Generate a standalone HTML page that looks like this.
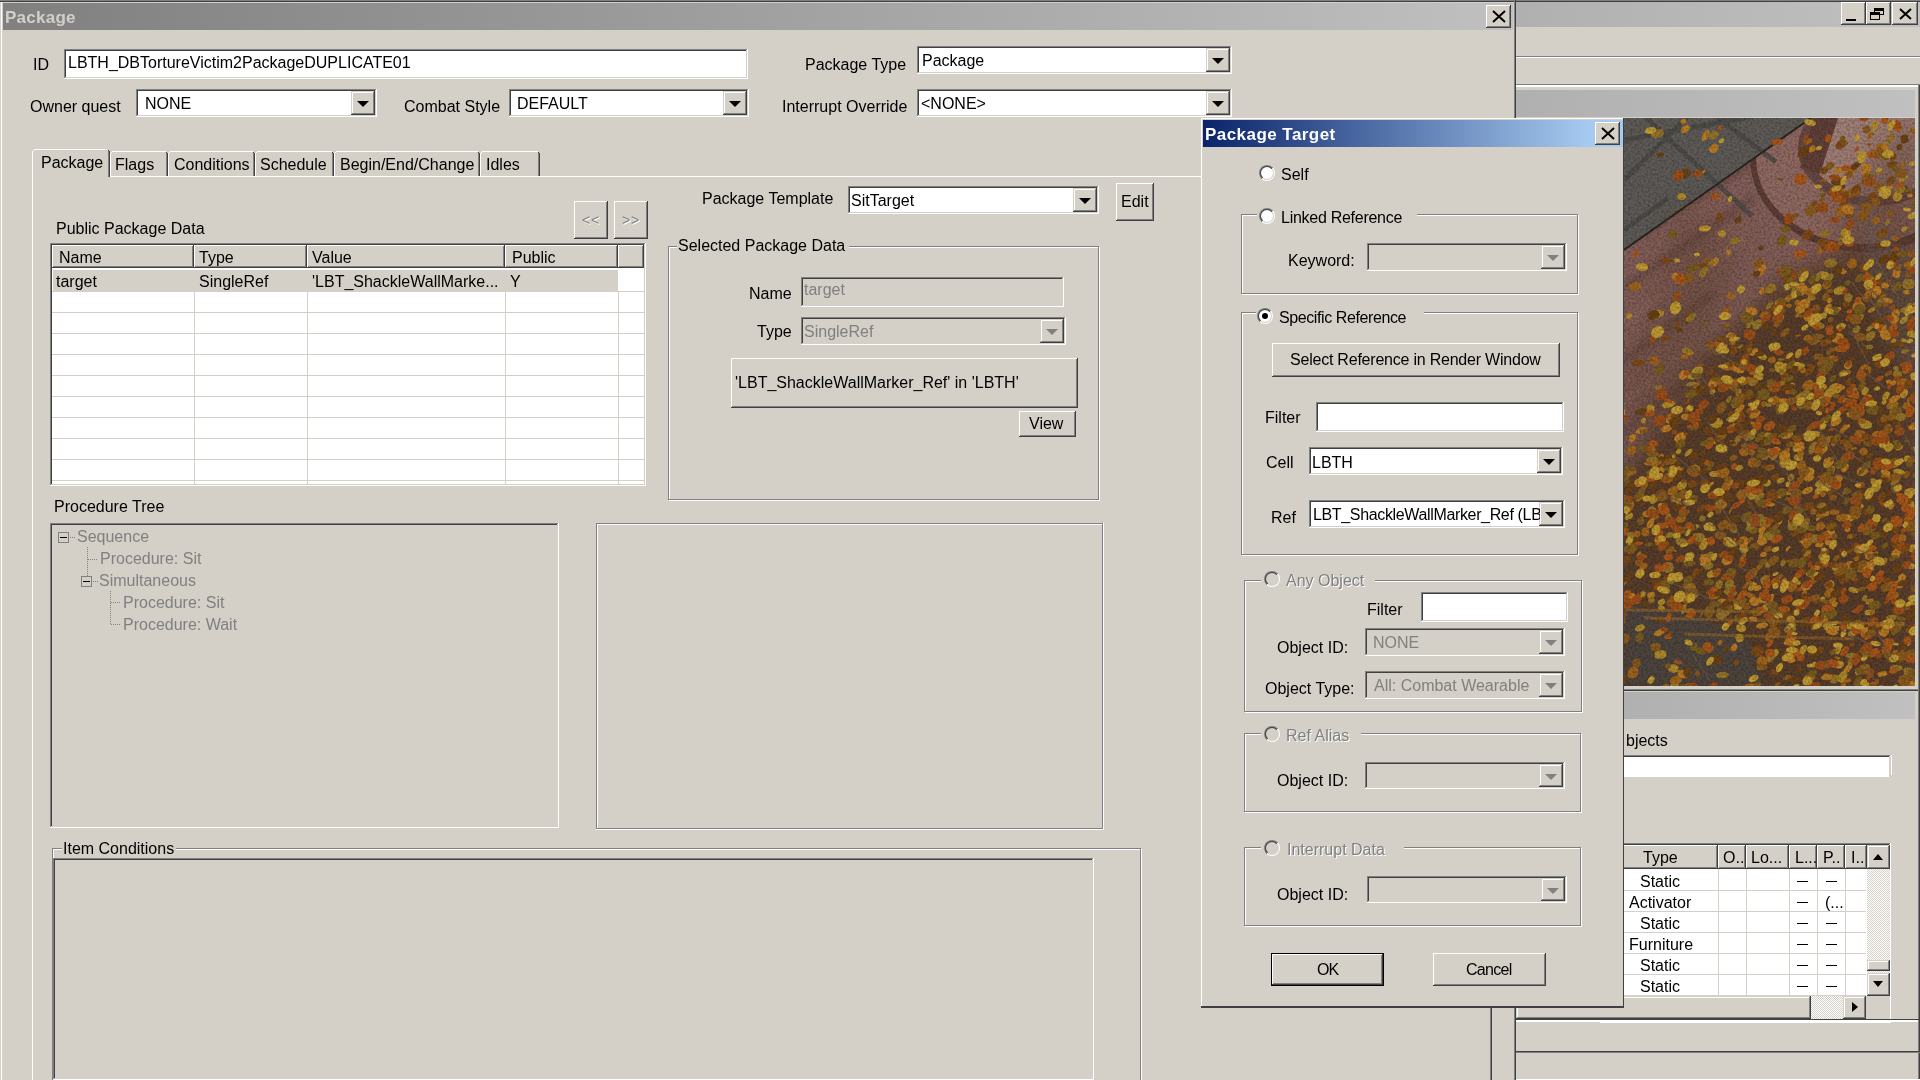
<!DOCTYPE html>
<html><head><meta charset="utf-8"><style>
html,body{margin:0;padding:0;width:1920px;height:1080px;overflow:hidden;background:#d4d0c8}
body>div,body>span,body>svg,div>span{position:absolute}
div{box-sizing:border-box}
.t{font-family:"Liberation Sans",sans-serif;white-space:pre;color:#000;will-change:transform}
</style></head><body>
<div style="left:0px;top:0px;width:1920px;height:1080px;background:#d4d0c8;"></div>
<div style="left:0px;top:0px;width:1920px;height:1px;background:#808080;"></div>
<div style="left:0px;top:1px;width:1920px;height:1px;background:#404040;"></div>
<div style="left:1px;top:2px;width:1px;height:1078px;background:#ffffff;"></div>
<div style="left:3px;top:3px;width:1510px;height:27px;background:linear-gradient(90deg,#808080,#c0c0c0);"></div>
<span class="t" style="left:5px;top:9px;font-size:17px;line-height:17px;color:#d4d0c8;font-weight:bold;letter-spacing:0.25px;">Package</span>
<div style="left:1486px;top:5px;width:25px;height:23px;background:#d4d0c8;"></div>
<div style="left:1486px;top:5px;width:24px;height:1px;background:#ffffff;"></div>
<div style="left:1486px;top:5px;width:1px;height:22px;background:#ffffff;"></div>
<div style="left:1486px;top:27px;width:25px;height:1px;background:#404040;"></div>
<div style="left:1510px;top:5px;width:1px;height:23px;background:#404040;"></div>
<div style="left:1487px;top:6px;width:22px;height:1px;background:#d4d0c8;"></div>
<div style="left:1487px;top:6px;width:1px;height:20px;background:#d4d0c8;"></div>
<div style="left:1487px;top:26px;width:23px;height:1px;background:#808080;"></div>
<div style="left:1509px;top:6px;width:1px;height:21px;background:#808080;"></div>
<svg style="left:1492px;top:10px" width="14" height="13"><path d="M1 1L13 12M13 1L1 12" stroke="#000" stroke-width="2" fill="none"/></svg>
<div style="left:1514px;top:0px;width:1px;height:1080px;background:#808080;"></div>
<div style="left:1515px;top:0px;width:1px;height:1080px;background:#404040;"></div>
<div style="left:1516px;top:2px;width:404px;height:25px;background:linear-gradient(90deg,#b0b0b0,#c0c0c0);"></div>
<div style="left:1841px;top:2px;width:25px;height:23px;background:#d4d0c8;"></div>
<div style="left:1841px;top:2px;width:24px;height:1px;background:#ffffff;"></div>
<div style="left:1841px;top:2px;width:1px;height:22px;background:#ffffff;"></div>
<div style="left:1841px;top:24px;width:25px;height:1px;background:#404040;"></div>
<div style="left:1865px;top:2px;width:1px;height:23px;background:#404040;"></div>
<div style="left:1842px;top:3px;width:22px;height:1px;background:#d4d0c8;"></div>
<div style="left:1842px;top:3px;width:1px;height:20px;background:#d4d0c8;"></div>
<div style="left:1842px;top:23px;width:23px;height:1px;background:#808080;"></div>
<div style="left:1864px;top:3px;width:1px;height:21px;background:#808080;"></div>
<div style="left:1866px;top:2px;width:25px;height:23px;background:#d4d0c8;"></div>
<div style="left:1866px;top:2px;width:24px;height:1px;background:#ffffff;"></div>
<div style="left:1866px;top:2px;width:1px;height:22px;background:#ffffff;"></div>
<div style="left:1866px;top:24px;width:25px;height:1px;background:#404040;"></div>
<div style="left:1890px;top:2px;width:1px;height:23px;background:#404040;"></div>
<div style="left:1867px;top:3px;width:22px;height:1px;background:#d4d0c8;"></div>
<div style="left:1867px;top:3px;width:1px;height:20px;background:#d4d0c8;"></div>
<div style="left:1867px;top:23px;width:23px;height:1px;background:#808080;"></div>
<div style="left:1889px;top:3px;width:1px;height:21px;background:#808080;"></div>
<div style="left:1892px;top:2px;width:26px;height:23px;background:#d4d0c8;"></div>
<div style="left:1892px;top:2px;width:25px;height:1px;background:#ffffff;"></div>
<div style="left:1892px;top:2px;width:1px;height:22px;background:#ffffff;"></div>
<div style="left:1892px;top:24px;width:26px;height:1px;background:#404040;"></div>
<div style="left:1917px;top:2px;width:1px;height:23px;background:#404040;"></div>
<div style="left:1893px;top:3px;width:23px;height:1px;background:#d4d0c8;"></div>
<div style="left:1893px;top:3px;width:1px;height:20px;background:#d4d0c8;"></div>
<div style="left:1893px;top:23px;width:24px;height:1px;background:#808080;"></div>
<div style="left:1916px;top:3px;width:1px;height:21px;background:#808080;"></div>
<div style="left:1846px;top:19px;width:10px;height:2px;background:#000;"></div>
<div style="left:1874px;top:8px;width:10px;height:7px;border:1px solid #000;border-top-width:3px;box-sizing:border-box"></div>
<div style="left:1870px;top:12px;width:10px;height:8px;border:1px solid #000;border-top-width:3px;box-sizing:border-box;background:#d4d0c8"></div>
<svg style="left:1899px;top:8px" width="13" height="12"><path d="M1 1L12 11M12 1L1 11" stroke="#000" stroke-width="2" fill="none"/></svg>
<div style="left:1516px;top:56px;width:404px;height:1px;background:#808080;"></div>
<div style="left:1516px;top:57px;width:404px;height:1px;background:#ffffff;"></div>
<div style="left:1516px;top:84px;width:404px;height:1px;background:#808080;"></div>
<div style="left:1516px;top:85px;width:404px;height:1px;background:#ffffff;"></div>
<div style="left:1516px;top:86px;width:404px;height:1px;background:#ffffff;"></div>
<div style="left:1918px;top:85px;width:1px;height:995px;background:#808080;"></div>
<div style="left:1919px;top:85px;width:1px;height:995px;background:#404040;"></div>
<div style="left:1516px;top:90px;width:399px;height:27px;background:linear-gradient(90deg,#b0b0b0,#c0c0c0);"></div>
<div style="left:1624px;top:118px;width:291px;height:568px;background:#6a4a38;overflow:hidden"><svg width="291" height="568" viewBox="0 0 291 568" style="position:absolute;left:0;top:0"><defs><filter id="bl" x="-20%" y="-20%" width="140%" height="140%"><feGaussianBlur stdDeviation="14"/></filter><filter id="bl2"><feGaussianBlur stdDeviation="3"/></filter></defs><rect width="291" height="568" fill="#85605a"/><g filter="url(#bl2)" opacity="0.55"><path d="M-20 330L140 200M-20 380L150 250M0 170L130 80M-10 250L90 175M10 120L150 30" stroke="#5e423c" stroke-width="8"/><path d="M-20 300L140 170M0 205L120 120" stroke="#9a766e" stroke-width="5"/></g><ellipse cx="240" cy="40" rx="114" ry="94" fill="#5e3e38"/><ellipse cx="238" cy="40" rx="106" ry="86" fill="#906a62"/><ellipse cx="250" cy="30" rx="76" ry="58" fill="#6a4a44"/><ellipse cx="252" cy="28" rx="68" ry="51" fill="#a28078"/><polygon points="0,0 187,0 0,132" fill="#5f5c58"/><path d="M0 22L130 -2M0 62L64 -2M22 0L128 98M94 0L152 44M0 112L44 80" stroke="#4c4a46" stroke-width="5" opacity="0.8"/><path d="M0 132L187 0" stroke="#2a2622" stroke-width="2"/><polygon points="190,0 214,0 196,56 176,50" fill="#62403a"/><g filter="url(#bl)"><polygon points="300,140 300,600 -20,600 -20,380 40,300 100,220 160,160 220,140" fill="#583c2a"/><polygon points="300,-10 300,140 200,150 230,60" fill="#5a3c2a" opacity="0.45"/><polygon points="60,90 120,130 60,300 -10,320 0,260" fill="#5a3c2a" opacity="0.35"/></g><polygon points="0,485 70,495 125,522 140,568 0,568" fill="#4d4642" opacity="0.85" filter="url(#bl2)"/><polygon points="230,60 291,150 291,270 250,210" fill="#6d6560" opacity="0.3" filter="url(#bl2)"/><path fill="#b08a2a" d="M176 422A6 4 13 1 0 188 425A6 4 13 1 0 176 422M239 277A4 3 -65 1 0 243 269A4 3 -65 1 0 239 277M276 205A5 3 -36 1 0 284 199A5 3 -36 1 0 276 205M83 458A5 3 -26 1 0 92 454A5 3 -26 1 0 83 458M147 539A5 3 -46 1 0 154 532A5 3 -46 1 0 147 539M53 336A3 2 -54 1 0 56 331A3 2 -54 1 0 53 336M270 82A5 4 -48 1 0 277 75A5 4 -48 1 0 270 82M225 471A5 2 14 1 0 234 473A5 2 14 1 0 225 471M112 490A4 3 -64 1 0 115 483A4 3 -64 1 0 112 490M200 510A5 3 -21 1 0 208 506A5 3 -21 1 0 200 510M148 342A5 3 -61 1 0 153 333A5 3 -61 1 0 148 342M162 183A3 2 -41 1 0 166 179A3 2 -41 1 0 162 183M280 340A3 3 14 1 0 287 342A3 3 14 1 0 280 340M157 257A6 3 -68 1 0 162 245A6 3 -68 1 0 157 257M135 482A5 3 -16 1 0 144 480A5 3 -16 1 0 135 482M112 521A4 3 -14 1 0 119 519A4 3 -14 1 0 112 521M206 272A6 4 -15 1 0 217 269A6 4 -15 1 0 206 272M257 328A5 2 10 1 0 267 330A5 2 10 1 0 257 328M76 445A3 2 14 1 0 82 447A3 2 14 1 0 76 445M51 384A3 2 -26 1 0 57 381A3 2 -26 1 0 51 384M222 510A5 3 -19 1 0 232 506A5 3 -19 1 0 222 510M3 200A3 2 -47 1 0 7 196A3 2 -47 1 0 3 200M201 419A6 3 -39 1 0 210 412A6 3 -39 1 0 201 419M269 288A3 2 -32 1 0 274 285A3 2 -32 1 0 269 288M191 367A6 4 -13 1 0 204 365A6 4 -13 1 0 191 367M137 323A6 4 -32 1 0 148 316A6 4 -32 1 0 137 323M31 537A6 3 -7 1 0 42 536A6 3 -7 1 0 31 537M34 486A4 3 -29 1 0 41 482A4 3 -29 1 0 34 486M46 574A6 4 -40 1 0 55 567A6 4 -40 1 0 46 574M60 445A5 3 -13 1 0 69 443A5 3 -13 1 0 60 445M285 485A6 4 -14 1 0 297 482A6 4 -14 1 0 285 485M258 286A3 2 -39 1 0 263 282A3 2 -39 1 0 258 286M59 569A5 3 -5 1 0 69 568A5 3 -5 1 0 59 569M130 257A5 3 12 1 0 139 259A5 3 12 1 0 130 257M238 450A6 3 1 1 0 250 451A6 3 1 1 0 238 450M182 455A5 3 14 1 0 192 458A5 3 14 1 0 182 455M18 305A3 2 -66 1 0 21 300A3 2 -66 1 0 18 305M196 243A3 2 -16 1 0 201 242A3 2 -16 1 0 196 243M153 364A4 2 -24 1 0 160 361A4 2 -24 1 0 153 364M138 365A4 3 -4 1 0 147 365A4 3 -4 1 0 138 365M290 332A4 3 -8 1 0 297 331A4 3 -8 1 0 290 332M31 197A5 2 -16 1 0 40 195A5 2 -16 1 0 31 197M280 375A6 4 -9 1 0 292 373A6 4 -9 1 0 280 375M172 250A4 3 -3 1 0 180 249A4 3 -3 1 0 172 250M247 363A3 2 17 1 0 252 364A3 2 17 1 0 247 363M194 156A6 4 16 1 0 206 159A6 4 16 1 0 194 156M54 371A5 4 -42 1 0 62 364A5 4 -42 1 0 54 371M87 439A3 2 9 1 0 92 440A3 2 9 1 0 87 439M275 63A5 2 -30 1 0 284 58A5 2 -30 1 0 275 63M284 218A4 3 -39 1 0 290 213A4 3 -39 1 0 284 218M241 347A3 2 -14 1 0 247 345A3 2 -14 1 0 241 347M271 468A5 3 -38 1 0 280 462A5 3 -38 1 0 271 468M102 219A4 2 -30 1 0 109 215A4 2 -30 1 0 102 219M269 353A6 3 11 1 0 281 355A6 3 11 1 0 269 353M133 237A5 3 19 1 0 143 240A5 3 19 1 0 133 237M278 113A3 2 -35 1 0 283 109A3 2 -35 1 0 278 113M95 118A4 3 -33 1 0 101 113A4 3 -33 1 0 95 118M260 299A3 2 3 1 0 266 300A3 2 3 1 0 260 299M267 225A3 2 -41 1 0 272 221A3 2 -41 1 0 267 225M179 352A6 3 12 1 0 190 354A6 3 12 1 0 179 352M195 482A3 2 -24 1 0 201 480A3 2 -24 1 0 195 482M126 472A5 2 -52 1 0 131 465A5 2 -52 1 0 126 472M249 12A5 3 -63 1 0 253 3A5 3 -63 1 0 249 12M64 258A4 2 5 1 0 71 259A4 2 5 1 0 64 258M201 468A5 3 -18 1 0 210 465A5 3 -18 1 0 201 468M66 356A4 2 -1 1 0 75 356A4 2 -1 1 0 66 356M152 188A4 3 -32 1 0 158 184A4 3 -32 1 0 152 188M208 451A6 4 -13 1 0 220 448A6 4 -13 1 0 208 451M34 489A3 2 13 1 0 41 491A3 2 13 1 0 34 489M117 433A4 3 -29 1 0 123 429A4 3 -29 1 0 117 433M259 282A5 3 -56 1 0 265 274A5 3 -56 1 0 259 282M171 465A3 2 -0 1 0 177 465A3 2 -0 1 0 171 465M279 526A4 2 -10 1 0 286 525A4 2 -10 1 0 279 526M200 349A6 4 -44 1 0 209 340A6 4 -44 1 0 200 349M166 268A3 2 -5 1 0 171 267A3 2 -5 1 0 166 268M277 222A3 2 13 1 0 283 223A3 2 13 1 0 277 222M156 346A6 4 -14 1 0 167 343A6 4 -14 1 0 156 346M228 389A6 3 -6 1 0 240 388A6 3 -6 1 0 228 389M283 388A4 3 -18 1 0 290 386A4 3 -18 1 0 283 388M212 210A5 3 -17 1 0 222 207A5 3 -17 1 0 212 210M210 174A6 3 -17 1 0 221 171A6 3 -17 1 0 210 174M217 116A5 3 -17 1 0 226 113A5 3 -17 1 0 217 116M77 432A6 4 -68 1 0 82 420A6 4 -68 1 0 77 432M256 325A5 3 -4 1 0 265 325A5 3 -4 1 0 256 325M2 402A3 2 -59 1 0 5 396A3 2 -59 1 0 2 402M168 247A6 3 4 1 0 181 248A6 3 4 1 0 168 247M199 200A3 2 -66 1 0 201 195A3 2 -66 1 0 199 200M256 507A5 3 -14 1 0 267 504A5 3 -14 1 0 256 507M221 250A4 3 -38 1 0 227 245A4 3 -38 1 0 221 250M153 406A3 2 -41 1 0 158 402A3 2 -41 1 0 153 406M191 285A6 3 -53 1 0 198 276A6 3 -53 1 0 191 285M38 288A6 3 -14 1 0 51 285A6 3 -14 1 0 38 288M11 512A5 3 -23 1 0 21 508A5 3 -23 1 0 11 512M175 538A6 3 -57 1 0 182 527A6 3 -57 1 0 175 538M248 373A5 4 -42 1 0 256 366A5 4 -42 1 0 248 373M174 282A6 4 -26 1 0 184 277A6 4 -26 1 0 174 282M188 549A3 2 -55 1 0 192 544A3 2 -55 1 0 188 549M23 291A4 3 -1 1 0 30 291A4 3 -1 1 0 23 291M28 201A6 4 -43 1 0 37 193A6 4 -43 1 0 28 201M125 381A6 4 -43 1 0 134 372A6 4 -43 1 0 125 381M151 250A5 4 -12 1 0 160 248A5 4 -12 1 0 151 250M68 411A4 2 -25 1 0 75 407A4 2 -25 1 0 68 411M188 315A4 3 7 1 0 196 317A4 3 7 1 0 188 315M26 384A5 3 -44 1 0 33 378A5 3 -44 1 0 26 384M241 495A5 2 -4 1 0 250 494A5 2 -4 1 0 241 495M278 280A5 3 -64 1 0 282 271A5 3 -64 1 0 278 280M42 302A4 2 18 1 0 49 304A4 2 18 1 0 42 302M191 376A5 3 -43 1 0 199 369A5 3 -43 1 0 191 376M123 406A5 3 -5 1 0 132 405A5 3 -5 1 0 123 406M86 305A6 5 -2 1 0 99 305A6 5 -2 1 0 86 305M136 423A5 3 -67 1 0 140 414A5 3 -67 1 0 136 423M226 449A4 2 -11 1 0 233 447A4 2 -11 1 0 226 449M47 343A4 2 -65 1 0 51 336A4 2 -65 1 0 47 343M90 325A4 2 -22 1 0 97 322A4 2 -22 1 0 90 325M170 339A4 3 9 1 0 179 340A4 3 9 1 0 170 339M216 564A6 3 -62 1 0 221 554A6 3 -62 1 0 216 564M195 502A5 3 -18 1 0 204 499A5 3 -18 1 0 195 502M147 234A3 1 -69 1 0 149 228A3 1 -69 1 0 147 234M68 256A6 4 -28 1 0 79 250A6 4 -28 1 0 68 256M235 305A6 4 10 1 0 248 308A6 4 10 1 0 235 305M286 216A5 3 15 1 0 296 219A5 3 15 1 0 286 216M213 536A4 2 -69 1 0 215 529A4 2 -69 1 0 213 536M172 240A5 3 -63 1 0 177 231A5 3 -63 1 0 172 240M210 547A5 4 -9 1 0 220 546A5 4 -9 1 0 210 547M207 512A4 3 -12 1 0 215 510A4 3 -12 1 0 207 512M34 387A4 3 13 1 0 42 389A4 3 13 1 0 34 387M283 447A4 3 16 1 0 291 449A4 3 16 1 0 283 447M67 357A6 4 -51 1 0 74 348A6 4 -51 1 0 67 357M152 378A3 1 14 1 0 157 379A3 1 14 1 0 152 378M86 275A3 2 -33 1 0 91 272A3 2 -33 1 0 86 275M162 501A4 3 4 1 0 171 501A4 3 4 1 0 162 501M284 490A3 2 2 1 0 290 490A3 2 2 1 0 284 490M201 280A6 3 -50 1 0 208 272A6 3 -50 1 0 201 280M157 474A3 2 -42 1 0 161 470A3 2 -42 1 0 157 474M283 430A6 4 8 1 0 295 431A6 4 8 1 0 283 430M224 517A5 3 -23 1 0 234 513A5 3 -23 1 0 224 517M53 78A4 3 7 1 0 62 79A4 3 7 1 0 53 78M244 512A3 2 12 1 0 250 513A3 2 12 1 0 244 512M61 338A5 2 -45 1 0 68 331A5 2 -45 1 0 61 338M112 352A4 2 -27 1 0 118 348A4 2 -27 1 0 112 352M35 414A3 2 -37 1 0 39 411A3 2 -37 1 0 35 414M218 398A6 3 18 1 0 230 401A6 3 18 1 0 218 398M112 509A5 4 17 1 0 122 511A5 4 17 1 0 112 509M2 390A3 1 -32 1 0 8 387A3 1 -32 1 0 2 390M85 356A6 3 1 1 0 97 356A6 3 1 1 0 85 356M261 332A5 3 -35 1 0 269 327A5 3 -35 1 0 261 332M209 224A3 2 -66 1 0 212 218A3 2 -66 1 0 209 224M5 401A3 2 -63 1 0 8 395A3 2 -63 1 0 5 401M176 349A3 2 16 1 0 183 351A3 2 16 1 0 176 349M193 403A3 1 -63 1 0 195 398A3 1 -63 1 0 193 403M44 352A6 5 7 1 0 57 353A6 5 7 1 0 44 352M127 293A4 2 -65 1 0 131 286A4 2 -65 1 0 127 293M45 550A5 3 7 1 0 54 551A5 3 7 1 0 45 550"/><path fill="#a0651c" d="M209 231A6 3 -1 1 0 221 231A6 3 -1 1 0 209 231M283 514A4 2 -57 1 0 287 507A4 2 -57 1 0 283 514M290 402A3 2 2 1 0 296 403A3 2 2 1 0 290 402M227 149A3 2 -28 1 0 232 146A3 2 -28 1 0 227 149M44 376A6 4 -35 1 0 54 369A6 4 -35 1 0 44 376M187 393A3 2 5 1 0 192 394A3 2 5 1 0 187 393M285 312A6 3 -38 1 0 295 304A6 3 -38 1 0 285 312M56 239A4 2 -10 1 0 65 238A4 2 -10 1 0 56 239M170 390A3 1 -14 1 0 175 388A3 1 -14 1 0 170 390M187 510A3 2 6 1 0 193 510A3 2 6 1 0 187 510M139 410A6 4 -60 1 0 144 400A6 4 -60 1 0 139 410M274 267A6 3 -22 1 0 284 262A6 3 -22 1 0 274 267M33 374A3 2 -6 1 0 39 374A3 2 -6 1 0 33 374M70 271A5 2 -52 1 0 76 263A5 2 -52 1 0 70 271M24 331A4 2 -5 1 0 31 330A4 2 -5 1 0 24 331M230 442A3 2 -27 1 0 235 439A3 2 -27 1 0 230 442M213 96A5 3 -34 1 0 220 91A5 3 -34 1 0 213 96M122 466A3 2 -7 1 0 129 465A3 2 -7 1 0 122 466M212 400A6 4 -5 1 0 224 399A6 4 -5 1 0 212 400M147 268A3 2 -30 1 0 152 265A3 2 -30 1 0 147 268M276 48A3 2 -28 1 0 282 45A3 2 -28 1 0 276 48M175 340A4 3 -66 1 0 178 332A4 3 -66 1 0 175 340M200 501A3 1 -20 1 0 205 499A3 1 -20 1 0 200 501M269 480A4 2 -46 1 0 274 475A4 2 -46 1 0 269 480M186 329A4 2 -37 1 0 193 324A4 2 -37 1 0 186 329M190 272A5 3 -63 1 0 195 263A5 3 -63 1 0 190 272M217 315A5 2 -58 1 0 222 307A5 2 -58 1 0 217 315M234 304A4 2 -12 1 0 241 302A4 2 -12 1 0 234 304M122 476A5 2 20 1 0 131 479A5 2 20 1 0 122 476M181 25A4 2 -26 1 0 188 22A4 2 -26 1 0 181 25M205 418A4 2 8 1 0 213 419A4 2 8 1 0 205 418M174 159A5 2 -35 1 0 182 154A5 2 -35 1 0 174 159M268 349A4 3 -50 1 0 274 343A4 3 -50 1 0 268 349M268 120A3 2 10 1 0 275 121A3 2 10 1 0 268 120M205 485A4 3 -42 1 0 212 480A4 3 -42 1 0 205 485M12 382A5 2 -36 1 0 20 377A5 2 -36 1 0 12 382M107 268A5 3 -35 1 0 116 261A5 3 -35 1 0 107 268M158 340A6 3 -55 1 0 165 330A6 3 -55 1 0 158 340M25 346A4 2 -36 1 0 31 342A4 2 -36 1 0 25 346M238 257A6 4 -53 1 0 244 248A6 4 -53 1 0 238 257M240 183A6 3 -59 1 0 246 172A6 3 -59 1 0 240 183M285 509A4 2 -2 1 0 294 508A4 2 -2 1 0 285 509M170 397A3 2 1 1 0 176 397A3 2 1 1 0 170 397M55 353A3 1 -37 1 0 59 350A3 1 -37 1 0 55 353M52 386A3 2 10 1 0 58 387A3 2 10 1 0 52 386M197 378A3 2 -48 1 0 201 374A3 2 -48 1 0 197 378M222 464A3 1 -49 1 0 226 459A3 1 -49 1 0 222 464M178 255A3 2 -69 1 0 180 250A3 2 -69 1 0 178 255M108 288A6 3 -36 1 0 117 281A6 3 -36 1 0 108 288M29 347A3 2 -20 1 0 35 345A3 2 -20 1 0 29 347M220 520A3 1 12 1 0 226 521A3 1 12 1 0 220 520M236 549A5 3 -5 1 0 246 549A5 3 -5 1 0 236 549M211 540A3 1 6 1 0 216 540A3 1 6 1 0 211 540M280 146A6 4 14 1 0 292 149A6 4 14 1 0 280 146M247 497A3 2 -66 1 0 250 491A3 2 -66 1 0 247 497M195 136A4 2 -65 1 0 198 129A4 2 -65 1 0 195 136M170 254A3 1 -36 1 0 174 251A3 1 -36 1 0 170 254M42 300A5 4 -2 1 0 53 299A5 4 -2 1 0 42 300M20 363A5 2 -16 1 0 30 360A5 2 -16 1 0 20 363M38 575A5 3 -55 1 0 44 566A5 3 -55 1 0 38 575M247 439A4 2 -34 1 0 254 434A4 2 -34 1 0 247 439M279 290A4 3 -34 1 0 286 285A4 3 -34 1 0 279 290M10 420A4 3 -47 1 0 15 413A4 3 -47 1 0 10 420M120 230A3 1 -13 1 0 125 229A3 1 -13 1 0 120 230M257 178A3 1 -19 1 0 262 177A3 1 -19 1 0 257 178M3 355A5 3 -19 1 0 12 352A5 3 -19 1 0 3 355M114 380A6 4 -34 1 0 123 373A6 4 -34 1 0 114 380M144 243A4 3 -18 1 0 152 241A4 3 -18 1 0 144 243M16 451A4 3 -34 1 0 23 446A4 3 -34 1 0 16 451M286 12A5 3 17 1 0 296 15A5 3 17 1 0 286 12M109 484A5 3 -10 1 0 119 482A5 3 -10 1 0 109 484M257 184A6 3 -7 1 0 269 183A6 3 -7 1 0 257 184M99 249A6 3 -6 1 0 110 248A6 3 -6 1 0 99 249M61 493A4 2 -9 1 0 70 492A4 2 -9 1 0 61 493M165 473A6 4 -57 1 0 171 463A6 4 -57 1 0 165 473M172 282A5 3 -34 1 0 180 277A5 3 -34 1 0 172 282M268 464A3 1 14 1 0 273 465A3 1 14 1 0 268 464M247 413A5 2 -56 1 0 253 405A5 2 -56 1 0 247 413M46 564A6 4 -19 1 0 58 560A6 4 -19 1 0 46 564M181 430A6 4 -66 1 0 186 419A6 4 -66 1 0 181 430M174 351A5 3 -46 1 0 181 345A5 3 -46 1 0 174 351M107 227A4 2 -58 1 0 111 221A4 2 -58 1 0 107 227M1 395A5 3 -45 1 0 8 387A5 3 -45 1 0 1 395M93 526A3 2 -26 1 0 99 523A3 2 -26 1 0 93 526M53 488A4 3 19 1 0 60 491A4 3 19 1 0 53 488M213 126A3 2 -15 1 0 219 125A3 2 -15 1 0 213 126M239 354A3 2 -21 1 0 244 352A3 2 -21 1 0 239 354M144 174A5 4 -45 1 0 151 167A5 4 -45 1 0 144 174M240 437A3 2 -22 1 0 246 434A3 2 -22 1 0 240 437M172 139A4 2 -52 1 0 176 134A4 2 -52 1 0 172 139M163 181A4 2 -35 1 0 169 177A4 2 -35 1 0 163 181M32 427A3 2 -61 1 0 35 422A3 2 -61 1 0 32 427M222 78A6 4 -28 1 0 233 72A6 4 -28 1 0 222 78M198 491A3 2 -2 1 0 205 491A3 2 -2 1 0 198 491M54 404A5 3 -45 1 0 60 397A5 3 -45 1 0 54 404M215 572A5 2 -49 1 0 222 564A5 2 -49 1 0 215 572M292 556A4 3 -61 1 0 297 548A4 3 -61 1 0 292 556M179 478A3 2 -64 1 0 182 473A3 2 -64 1 0 179 478M248 104A4 3 -20 1 0 256 101A4 3 -20 1 0 248 104M287 261A3 1 -12 1 0 292 260A3 1 -12 1 0 287 261M134 546A5 4 -32 1 0 142 541A5 4 -32 1 0 134 546M223 419A3 2 -16 1 0 230 418A3 2 -16 1 0 223 419M169 173A5 2 -31 1 0 177 168A5 2 -31 1 0 169 173M258 360A5 3 -2 1 0 267 359A5 3 -2 1 0 258 360M225 150A5 4 -55 1 0 231 141A5 4 -55 1 0 225 150M85 479A5 3 -13 1 0 96 477A5 3 -13 1 0 85 479M115 333A5 4 8 1 0 125 335A5 4 8 1 0 115 333M180 222A4 3 -30 1 0 187 218A4 3 -30 1 0 180 222M180 402A3 2 1 1 0 186 402A3 2 1 1 0 180 402M206 394A5 2 -1 1 0 215 394A5 2 -1 1 0 206 394M220 562A3 2 2 1 0 227 562A3 2 2 1 0 220 562M141 521A4 3 -29 1 0 149 517A4 3 -29 1 0 141 521M180 271A6 4 -37 1 0 189 264A6 4 -37 1 0 180 271M5 337A5 4 -60 1 0 10 328A5 4 -60 1 0 5 337M27 401A4 2 -21 1 0 35 398A4 2 -21 1 0 27 401M136 199A5 3 -27 1 0 145 195A5 3 -27 1 0 136 199M271 422A6 3 -14 1 0 282 419A6 3 -14 1 0 271 422M223 51A4 3 10 1 0 232 52A4 3 10 1 0 223 51M117 267A6 3 -42 1 0 126 259A6 3 -42 1 0 117 267M95 322A5 4 -63 1 0 100 312A5 4 -63 1 0 95 322M242 184A4 2 -63 1 0 246 177A4 2 -63 1 0 242 184M202 320A5 3 13 1 0 213 323A5 3 13 1 0 202 320M208 328A3 2 -61 1 0 211 323A3 2 -61 1 0 208 328M93 357A6 5 -22 1 0 105 352A6 5 -22 1 0 93 357M231 316A6 4 19 1 0 242 319A6 4 19 1 0 231 316M105 220A4 3 -3 1 0 112 219A4 3 -3 1 0 105 220M201 478A6 3 -41 1 0 210 471A6 3 -41 1 0 201 478M242 170A6 3 -1 1 0 253 170A6 3 -1 1 0 242 170M171 185A3 2 -3 1 0 176 185A3 2 -3 1 0 171 185M156 376A3 2 -45 1 0 160 371A3 2 -45 1 0 156 376M54 392A3 2 -9 1 0 60 391A3 2 -9 1 0 54 392M179 562A6 4 -16 1 0 191 558A6 4 -16 1 0 179 562M192 398A6 3 -14 1 0 204 395A6 3 -14 1 0 192 398M233 452A4 2 7 1 0 241 453A4 2 7 1 0 233 452M252 29A6 3 2 1 0 263 30A6 3 2 1 0 252 29M269 535A3 2 -4 1 0 274 535A3 2 -4 1 0 269 535M267 302A3 2 -30 1 0 272 299A3 2 -30 1 0 267 302M108 424A3 1 -40 1 0 112 421A3 1 -40 1 0 108 424M2 392A6 4 -67 1 0 7 382A6 4 -67 1 0 2 392M125 460A6 3 -50 1 0 132 451A6 3 -50 1 0 125 460M6 560A6 5 -59 1 0 12 549A6 5 -59 1 0 6 560M125 253A5 3 -6 1 0 134 252A5 3 -6 1 0 125 253M138 288A3 2 -45 1 0 142 284A3 2 -45 1 0 138 288M103 312A6 3 -26 1 0 115 306A6 3 -26 1 0 103 312M244 21A4 2 -60 1 0 249 14A4 2 -60 1 0 244 21M263 290A6 3 -30 1 0 273 284A6 3 -30 1 0 263 290M59 467A6 4 12 1 0 72 470A6 4 12 1 0 59 467M124 261A5 3 16 1 0 134 264A5 3 16 1 0 124 261M241 522A4 2 -66 1 0 245 514A4 2 -66 1 0 241 522M26 242A5 3 10 1 0 35 243A5 3 10 1 0 26 242M236 335A4 3 -17 1 0 243 332A4 3 -17 1 0 236 335M125 348A5 4 -46 1 0 132 341A5 4 -46 1 0 125 348M133 451A3 2 -38 1 0 138 447A3 2 -38 1 0 133 451M127 337A3 2 -68 1 0 129 332A3 2 -68 1 0 127 337M178 189A4 2 -15 1 0 185 187A4 2 -15 1 0 178 189M188 462A5 3 -32 1 0 196 457A5 3 -32 1 0 188 462M221 253A3 2 15 1 0 227 255A3 2 15 1 0 221 253M283 284A3 1 -63 1 0 286 279A3 1 -63 1 0 283 284M47 383A4 3 -41 1 0 54 377A4 3 -41 1 0 47 383M148 286A5 3 -45 1 0 154 279A5 3 -45 1 0 148 286M192 411A5 3 -30 1 0 200 406A5 3 -30 1 0 192 411M100 372A4 3 -56 1 0 104 366A4 3 -56 1 0 100 372M162 187A3 2 4 1 0 168 188A3 2 4 1 0 162 187M254 206A4 2 13 1 0 261 208A4 2 13 1 0 254 206M18 414A4 3 1 1 0 25 414A4 3 1 1 0 18 414M116 443A5 2 -53 1 0 122 435A5 2 -53 1 0 116 443M165 526A4 2 -6 1 0 172 526A4 2 -6 1 0 165 526M161 535A3 1 -19 1 0 166 534A3 1 -19 1 0 161 535M263 312A3 2 -8 1 0 268 312A3 2 -8 1 0 263 312M249 318A4 2 -31 1 0 255 314A4 2 -31 1 0 249 318M98 460A3 2 -28 1 0 104 457A3 2 -28 1 0 98 460M83 499A4 2 -43 1 0 88 494A4 2 -43 1 0 83 499M188 455A3 2 -69 1 0 190 450A3 2 -69 1 0 188 455M-6 301A5 3 -16 1 0 4 298A5 3 -16 1 0 -6 301M102 177A5 3 14 1 0 112 179A5 3 14 1 0 102 177M226 399A5 3 -6 1 0 236 398A5 3 -6 1 0 226 399M283 569A6 4 -7 1 0 294 567A6 4 -7 1 0 283 569M120 570A6 4 -2 1 0 133 569A6 4 -2 1 0 120 570M27 348A6 3 -30 1 0 38 342A6 3 -30 1 0 27 348M105 269A3 2 -65 1 0 108 264A3 2 -65 1 0 105 269M199 169A5 3 -36 1 0 207 164A5 3 -36 1 0 199 169M66 444A3 1 18 1 0 71 446A3 1 18 1 0 66 444M5 170A6 4 -11 1 0 17 167A6 4 -11 1 0 5 170M182 174A6 3 -2 1 0 193 174A6 3 -2 1 0 182 174M234 410A6 4 5 1 0 246 411A6 4 5 1 0 234 410M106 324A4 2 17 1 0 113 326A4 2 17 1 0 106 324"/><path fill="#7e4a18" d="M154 268A4 2 -52 1 0 159 262A4 2 -52 1 0 154 268M6 482A5 4 -6 1 0 16 481A5 4 -6 1 0 6 482M193 124A6 4 4 1 0 206 125A6 4 4 1 0 193 124M113 303A4 2 -21 1 0 120 301A4 2 -21 1 0 113 303M237 380A3 2 -39 1 0 242 376A3 2 -39 1 0 237 380M8 246A6 3 -5 1 0 21 244A6 3 -5 1 0 8 246M114 497A6 3 20 1 0 125 502A6 3 20 1 0 114 497M222 436A5 2 -33 1 0 230 430A5 2 -33 1 0 222 436M162 158A5 3 -36 1 0 170 152A5 3 -36 1 0 162 158M41 450A5 3 12 1 0 50 452A5 3 12 1 0 41 450M183 247A4 2 12 1 0 191 249A4 2 12 1 0 183 247M60 383A4 3 -70 1 0 63 375A4 3 -70 1 0 60 383M243 339A3 2 -23 1 0 249 336A3 2 -23 1 0 243 339M107 236A4 3 -50 1 0 113 229A4 3 -50 1 0 107 236M220 189A4 3 -62 1 0 225 181A4 3 -62 1 0 220 189M92 220A5 2 6 1 0 103 221A5 2 6 1 0 92 220M256 533A3 1 -3 1 0 261 532A3 1 -3 1 0 256 533M191 333A6 3 -42 1 0 200 325A6 3 -42 1 0 191 333M161 542A5 3 -9 1 0 170 540A5 3 -9 1 0 161 542M275 509A3 2 -31 1 0 281 505A3 2 -31 1 0 275 509M64 368A5 3 -25 1 0 73 364A5 3 -25 1 0 64 368M252 540A4 2 -27 1 0 258 536A4 2 -27 1 0 252 540M160 164A4 3 -67 1 0 163 156A4 3 -67 1 0 160 164M203 324A4 2 -34 1 0 210 320A4 2 -34 1 0 203 324M212 30A6 4 -33 1 0 222 23A6 4 -33 1 0 212 30M51 205A3 2 15 1 0 57 207A3 2 15 1 0 51 205M102 272A3 2 -41 1 0 107 268A3 2 -41 1 0 102 272M177 504A5 2 -25 1 0 186 499A5 2 -25 1 0 177 504M92 263A5 3 12 1 0 101 265A5 3 12 1 0 92 263M255 385A6 3 -63 1 0 260 374A6 3 -63 1 0 255 385M253 118A6 3 -27 1 0 263 113A6 3 -27 1 0 253 118M277 436A6 4 -49 1 0 285 426A6 4 -49 1 0 277 436M105 298A3 2 -33 1 0 109 295A3 2 -33 1 0 105 298M39 460A4 3 6 1 0 48 461A4 3 6 1 0 39 460M246 -1A3 2 -46 1 0 250 -6A3 2 -46 1 0 246 -1M73 427A4 3 -69 1 0 76 419A4 3 -69 1 0 73 427M251 179A5 3 -42 1 0 259 172A5 3 -42 1 0 251 179M112 297A5 3 8 1 0 121 298A5 3 8 1 0 112 297M-5 442A6 4 -5 1 0 7 441A6 4 -5 1 0 -5 442M215 433A3 3 -5 1 0 221 433A3 3 -5 1 0 215 433M152 332A4 2 19 1 0 159 335A4 2 19 1 0 152 332M69 453A4 3 7 1 0 77 454A4 3 7 1 0 69 453M208 322A3 2 10 1 0 213 323A3 2 10 1 0 208 322M115 316A6 3 -6 1 0 126 315A6 3 -6 1 0 115 316M17 376A4 2 -55 1 0 21 369A4 2 -55 1 0 17 376M200 466A4 3 4 1 0 209 467A4 3 4 1 0 200 466M228 77A6 4 -54 1 0 236 67A6 4 -54 1 0 228 77M260 465A4 2 -31 1 0 266 461A4 2 -31 1 0 260 465M123 281A5 4 -66 1 0 127 272A5 4 -66 1 0 123 281M196 228A6 3 -32 1 0 206 221A6 3 -32 1 0 196 228M83 256A4 2 -35 1 0 90 252A4 2 -35 1 0 83 256M244 81A5 4 -29 1 0 253 76A5 4 -29 1 0 244 81M262 201A5 3 -11 1 0 272 199A5 3 -11 1 0 262 201M128 532A6 4 15 1 0 139 535A6 4 15 1 0 128 532M268 429A6 3 -15 1 0 280 425A6 3 -15 1 0 268 429M57 316A3 2 -0 1 0 64 316A3 2 -0 1 0 57 316M202 210A4 2 -14 1 0 210 208A4 2 -14 1 0 202 210M232 377A4 3 -31 1 0 239 373A4 3 -31 1 0 232 377M279 385A5 3 -27 1 0 288 381A5 3 -27 1 0 279 385M205 447A5 2 -2 1 0 214 447A5 2 -2 1 0 205 447M197 55A4 3 -34 1 0 203 50A4 3 -34 1 0 197 55M111 547A3 2 -59 1 0 114 542A3 2 -59 1 0 111 547M216 465A6 4 -45 1 0 225 456A6 4 -45 1 0 216 465M37 142A5 3 7 1 0 47 143A5 3 7 1 0 37 142M40 430A4 3 -62 1 0 43 423A4 3 -62 1 0 40 430M201 24A3 2 -18 1 0 207 22A3 2 -18 1 0 201 24M214 76A6 4 18 1 0 225 79A6 4 18 1 0 214 76M234 438A4 2 -65 1 0 237 431A4 2 -65 1 0 234 438M223 267A4 2 -62 1 0 226 260A4 2 -62 1 0 223 267M35 249A3 2 -16 1 0 41 248A3 2 -16 1 0 35 249M161 534A4 2 -2 1 0 169 534A4 2 -2 1 0 161 534M112 253A5 3 -36 1 0 120 247A5 3 -36 1 0 112 253M86 264A6 3 -30 1 0 96 259A6 3 -30 1 0 86 264M95 234A6 4 -51 1 0 103 225A6 4 -51 1 0 95 234M79 467A4 2 -22 1 0 87 464A4 2 -22 1 0 79 467M192 449A6 4 -28 1 0 202 443A6 4 -28 1 0 192 449M290 421A4 2 -21 1 0 299 418A4 2 -21 1 0 290 421M190 225A3 2 -59 1 0 193 220A3 2 -59 1 0 190 225M196 129A5 4 -12 1 0 207 126A5 4 -12 1 0 196 129M274 227A3 2 -1 1 0 281 226A3 2 -1 1 0 274 227M215 460A6 4 -58 1 0 221 450A6 4 -58 1 0 215 460M77 364A5 3 18 1 0 86 367A5 3 18 1 0 77 364M62 205A6 3 -67 1 0 67 193A6 3 -67 1 0 62 205M161 520A6 3 0 1 0 172 520A6 3 0 1 0 161 520M195 295A4 2 -50 1 0 200 289A4 2 -50 1 0 195 295M166 445A6 3 9 1 0 178 447A6 3 9 1 0 166 445M159 501A5 3 -64 1 0 163 492A5 3 -64 1 0 159 501M144 319A5 2 -16 1 0 153 317A5 2 -16 1 0 144 319M222 289A4 3 2 1 0 230 290A4 3 2 1 0 222 289M262 283A5 2 -2 1 0 272 282A5 2 -2 1 0 262 283M137 349A3 2 -9 1 0 143 348A3 2 -9 1 0 137 349M263 66A5 3 -42 1 0 271 59A5 3 -42 1 0 263 66M220 329A5 3 11 1 0 229 330A5 3 11 1 0 220 329M251 247A5 4 -11 1 0 261 245A5 4 -11 1 0 251 247M216 87A4 2 -24 1 0 224 83A4 2 -24 1 0 216 87M153 61A3 1 11 1 0 159 62A3 1 11 1 0 153 61M283 514A5 3 -41 1 0 291 507A5 3 -41 1 0 283 514M201 555A3 1 14 1 0 206 557A3 1 14 1 0 201 555M144 190A3 2 18 1 0 150 192A3 2 18 1 0 144 190M158 262A4 3 -48 1 0 164 255A4 3 -48 1 0 158 262M221 98A4 2 2 1 0 229 98A4 2 2 1 0 221 98M-1 448A4 2 -54 1 0 4 441A4 2 -54 1 0 -1 448M170 408A3 2 9 1 0 176 409A3 2 9 1 0 170 408M44 519A3 2 -54 1 0 48 514A3 2 -54 1 0 44 519M198 225A4 3 3 1 0 206 225A4 3 3 1 0 198 225M124 231A4 2 -63 1 0 128 223A4 2 -63 1 0 124 231M236 150A5 3 -1 1 0 245 150A5 3 -1 1 0 236 150M225 527A3 2 -14 1 0 231 526A3 2 -14 1 0 225 527M48 301A3 2 -47 1 0 52 297A3 2 -47 1 0 48 301M90 381A4 2 2 1 0 98 381A4 2 2 1 0 90 381M244 328A3 2 -47 1 0 249 324A3 2 -47 1 0 244 328M196 502A3 2 -61 1 0 199 497A3 2 -61 1 0 196 502M139 418A5 3 -29 1 0 148 413A5 3 -29 1 0 139 418M240 535A4 3 -51 1 0 245 529A4 3 -51 1 0 240 535M68 461A3 2 -67 1 0 71 455A3 2 -67 1 0 68 461M278 450A4 2 -58 1 0 282 444A4 2 -58 1 0 278 450M273 169A3 2 -58 1 0 276 164A3 2 -58 1 0 273 169M167 418A6 3 -36 1 0 177 410A6 3 -36 1 0 167 418M188 88A3 2 -41 1 0 193 83A3 2 -41 1 0 188 88M192 389A5 2 -20 1 0 201 385A5 2 -20 1 0 192 389M242 183A3 1 -42 1 0 247 179A3 1 -42 1 0 242 183M147 553A4 2 20 1 0 154 556A4 2 20 1 0 147 553M182 114A3 1 -22 1 0 187 112A3 1 -22 1 0 182 114M74 394A5 2 -50 1 0 80 387A5 2 -50 1 0 74 394M80 314A3 2 -54 1 0 84 310A3 2 -54 1 0 80 314M218 450A3 2 -20 1 0 224 448A3 2 -20 1 0 218 450M37 222A4 2 -21 1 0 45 219A4 2 -21 1 0 37 222M216 324A5 2 -0 1 0 225 324A5 2 -0 1 0 216 324M204 376A3 2 -35 1 0 208 372A3 2 -35 1 0 204 376M267 42A4 2 -53 1 0 272 36A4 2 -53 1 0 267 42M117 496A3 2 -30 1 0 123 492A3 2 -30 1 0 117 496M95 382A4 2 -32 1 0 102 378A4 2 -32 1 0 95 382M185 361A3 2 -15 1 0 191 360A3 2 -15 1 0 185 361M94 224A4 2 14 1 0 101 226A4 2 14 1 0 94 224M282 270A5 3 -54 1 0 287 262A5 3 -54 1 0 282 270M118 239A4 2 -22 1 0 126 236A4 2 -22 1 0 118 239M204 345A4 2 -46 1 0 209 339A4 2 -46 1 0 204 345M237 286A5 4 -36 1 0 245 280A5 4 -36 1 0 237 286M189 199A6 3 -62 1 0 195 188A6 3 -62 1 0 189 199M105 249A3 2 -64 1 0 108 244A3 2 -64 1 0 105 249M132 372A4 3 -18 1 0 140 369A4 3 -18 1 0 132 372M179 441A5 3 -32 1 0 187 436A5 3 -32 1 0 179 441M194 390A4 2 -51 1 0 199 384A4 2 -51 1 0 194 390M249 169A6 4 -62 1 0 255 159A6 4 -62 1 0 249 169M178 120A6 4 -31 1 0 189 114A6 4 -31 1 0 178 120M227 418A3 1 -9 1 0 233 417A3 1 -9 1 0 227 418M148 361A4 3 -34 1 0 155 357A4 3 -34 1 0 148 361M270 414A3 2 -61 1 0 273 410A3 2 -61 1 0 270 414M178 432A5 2 14 1 0 187 434A5 2 14 1 0 178 432M228 431A5 4 -22 1 0 237 427A5 4 -22 1 0 228 431M33 380A6 4 -32 1 0 42 374A6 4 -32 1 0 33 380M75 147A4 2 8 1 0 82 148A4 2 8 1 0 75 147M263 48A5 3 -18 1 0 273 45A5 3 -18 1 0 263 48M181 257A6 3 -43 1 0 190 249A6 3 -43 1 0 181 257M179 391A6 4 -23 1 0 190 386A6 4 -23 1 0 179 391M39 439A4 3 4 1 0 47 440A4 3 4 1 0 39 439M37 393A5 3 -48 1 0 43 385A5 3 -48 1 0 37 393M239 395A5 3 -17 1 0 249 392A5 3 -17 1 0 239 395M238 318A6 3 17 1 0 249 321A6 3 17 1 0 238 318M93 104A5 3 -61 1 0 98 95A5 3 -61 1 0 93 104M189 483A4 3 -22 1 0 196 480A4 3 -22 1 0 189 483M190 534A5 3 -17 1 0 200 531A5 3 -17 1 0 190 534M285 517A4 3 -1 1 0 293 517A4 3 -1 1 0 285 517M132 281A3 2 11 1 0 137 282A3 2 11 1 0 132 281M143 378A6 4 -4 1 0 154 377A6 4 -4 1 0 143 378"/><path fill="#b87a24" d="M245 445A3 1 -37 1 0 249 441A3 1 -37 1 0 245 445M36 354A3 2 -51 1 0 39 350A3 2 -51 1 0 36 354M86 270A5 4 -55 1 0 92 261A5 4 -55 1 0 86 270M223 297A3 2 -8 1 0 228 296A3 2 -8 1 0 223 297M232 556A4 2 -48 1 0 237 551A4 2 -48 1 0 232 556M52 323A6 3 -38 1 0 60 317A6 3 -38 1 0 52 323M242 279A3 2 -5 1 0 248 278A3 2 -5 1 0 242 279M232 435A4 3 -62 1 0 236 427A4 3 -62 1 0 232 435M281 359A3 1 -64 1 0 283 353A3 1 -64 1 0 281 359M221 413A3 2 -38 1 0 226 410A3 2 -38 1 0 221 413M-2 466A3 2 -40 1 0 3 462A3 2 -40 1 0 -2 466M262 263A3 2 15 1 0 269 265A3 2 15 1 0 262 263M211 511A3 1 -28 1 0 215 508A3 1 -28 1 0 211 511M208 485A3 2 19 1 0 213 487A3 2 19 1 0 208 485M208 221A6 5 -8 1 0 220 219A6 5 -8 1 0 208 221M30 517A6 3 -23 1 0 41 512A6 3 -23 1 0 30 517M237 515A6 4 -4 1 0 248 514A6 4 -4 1 0 237 515M289 187A4 2 -7 1 0 297 186A4 2 -7 1 0 289 187M56 482A4 3 -17 1 0 65 479A4 3 -17 1 0 56 482M136 279A3 2 -6 1 0 143 278A3 2 -6 1 0 136 279M259 181A5 2 19 1 0 268 184A5 2 19 1 0 259 181M62 235A4 2 1 1 0 70 235A4 2 1 1 0 62 235M136 176A3 2 -61 1 0 140 170A3 2 -61 1 0 136 176M257 167A4 3 5 1 0 265 168A4 3 5 1 0 257 167M265 391A4 2 -55 1 0 270 385A4 2 -55 1 0 265 391M218 354A5 3 -53 1 0 224 346A5 3 -53 1 0 218 354M240 57A6 4 -69 1 0 244 46A6 4 -69 1 0 240 57M174 489A4 2 -1 1 0 182 489A4 2 -1 1 0 174 489M133 157A6 4 -51 1 0 141 147A6 4 -51 1 0 133 157M31 421A3 2 6 1 0 36 422A3 2 6 1 0 31 421M255 214A5 3 -48 1 0 262 207A5 3 -48 1 0 255 214M198 271A3 2 -42 1 0 202 267A3 2 -42 1 0 198 271M254 569A3 2 7 1 0 261 570A3 2 7 1 0 254 569M209 52A6 3 -3 1 0 221 52A6 3 -3 1 0 209 52M86 368A3 1 -49 1 0 89 364A3 1 -49 1 0 86 368M158 465A3 2 -52 1 0 162 460A3 2 -52 1 0 158 465M134 426A5 3 -28 1 0 142 421A5 3 -28 1 0 134 426M122 192A6 3 13 1 0 133 194A6 3 13 1 0 122 192M259 77A6 3 -43 1 0 268 68A6 3 -43 1 0 259 77M37 312A5 3 -15 1 0 48 309A5 3 -15 1 0 37 312M180 356A4 2 -19 1 0 187 353A4 2 -19 1 0 180 356M268 267A3 2 -57 1 0 272 262A3 2 -57 1 0 268 267M57 5A3 2 -29 1 0 62 2A3 2 -29 1 0 57 5M272 331A4 2 -27 1 0 279 328A4 2 -27 1 0 272 331M207 307A6 4 -35 1 0 217 300A6 4 -35 1 0 207 307M230 192A6 4 -36 1 0 239 185A6 4 -36 1 0 230 192M125 483A5 4 5 1 0 136 484A5 4 5 1 0 125 483M103 137A3 2 -59 1 0 106 132A3 2 -59 1 0 103 137M192 426A4 2 4 1 0 199 427A4 2 4 1 0 192 426M0 355A3 2 17 1 0 6 357A3 2 17 1 0 0 355M3 478A5 3 13 1 0 12 480A5 3 13 1 0 3 478M178 375A6 3 -23 1 0 189 370A6 3 -23 1 0 178 375M111 295A6 3 -42 1 0 120 287A6 3 -42 1 0 111 295M95 391A5 3 -41 1 0 102 384A5 3 -41 1 0 95 391M284 309A4 2 9 1 0 292 310A4 2 9 1 0 284 309M171 282A4 3 -26 1 0 178 278A4 3 -26 1 0 171 282M175 423A4 2 -15 1 0 183 421A4 2 -15 1 0 175 423M34 426A3 1 -35 1 0 38 423A3 1 -35 1 0 34 426M242 451A4 2 -68 1 0 245 445A4 2 -68 1 0 242 451M21 346A3 1 4 1 0 26 346A3 1 4 1 0 21 346M87 148A5 3 -49 1 0 94 140A5 3 -49 1 0 87 148M156 342A6 5 -41 1 0 165 334A6 5 -41 1 0 156 342M11 367A5 3 -32 1 0 19 362A5 3 -32 1 0 11 367M145 485A5 2 -66 1 0 149 476A5 2 -66 1 0 145 485M143 272A5 3 -45 1 0 150 265A5 3 -45 1 0 143 272M189 449A3 2 9 1 0 196 450A3 2 9 1 0 189 449M219 311A4 2 -28 1 0 226 307A4 2 -28 1 0 219 311M250 180A6 4 -66 1 0 255 168A6 4 -66 1 0 250 180M269 155A4 3 6 1 0 276 156A4 3 6 1 0 269 155M223 276A3 2 -66 1 0 226 270A3 2 -66 1 0 223 276M267 205A4 3 -39 1 0 274 199A4 3 -39 1 0 267 205M202 513A6 3 11 1 0 214 515A6 3 11 1 0 202 513M242 486A4 2 -37 1 0 249 481A4 2 -37 1 0 242 486M79 23A6 3 -64 1 0 84 12A6 3 -64 1 0 79 23M221 447A5 4 4 1 0 232 448A5 4 4 1 0 221 447M254 557A5 2 -10 1 0 263 555A5 2 -10 1 0 254 557M219 90A6 3 18 1 0 229 93A6 3 18 1 0 219 90M272 300A3 2 -53 1 0 275 296A3 2 -53 1 0 272 300M217 155A3 2 -29 1 0 221 152A3 2 -29 1 0 217 155M257 353A5 2 19 1 0 266 356A5 2 19 1 0 257 353M288 569A4 2 -63 1 0 291 563A4 2 -63 1 0 288 569M201 424A4 2 13 1 0 208 425A4 2 13 1 0 201 424M12 315A6 3 -22 1 0 23 310A6 3 -22 1 0 12 315M41 410A6 3 -56 1 0 48 400A6 3 -56 1 0 41 410M126 300A6 3 -31 1 0 136 293A6 3 -31 1 0 126 300M180 362A5 3 -20 1 0 190 358A5 3 -20 1 0 180 362M108 533A4 3 -59 1 0 112 526A4 3 -59 1 0 108 533M150 330A3 2 17 1 0 156 332A3 2 17 1 0 150 330M233 356A5 4 -27 1 0 243 351A5 4 -27 1 0 233 356M209 194A4 2 -24 1 0 217 190A4 2 -24 1 0 209 194M98 445A5 4 -23 1 0 108 440A5 4 -23 1 0 98 445M242 441A5 3 -42 1 0 249 434A5 3 -42 1 0 242 441M132 508A6 3 -9 1 0 144 507A6 3 -9 1 0 132 508M144 336A4 3 -11 1 0 151 335A4 3 -11 1 0 144 336M18 396A5 3 1 1 0 29 396A5 3 1 1 0 18 396M143 387A4 2 -2 1 0 151 386A4 2 -2 1 0 143 387M198 303A3 2 3 1 0 204 303A3 2 3 1 0 198 303M50 162A4 3 -62 1 0 53 155A4 3 -62 1 0 50 162M236 510A3 2 -56 1 0 240 505A3 2 -56 1 0 236 510M23 478A4 3 -18 1 0 31 476A4 3 -18 1 0 23 478M109 250A6 3 11 1 0 120 252A6 3 11 1 0 109 250M134 413A4 2 -19 1 0 141 411A4 2 -19 1 0 134 413M256 216A6 5 11 1 0 268 218A6 5 11 1 0 256 216M165 406A3 2 -61 1 0 168 400A3 2 -61 1 0 165 406M67 302A5 3 4 1 0 77 303A5 3 4 1 0 67 302M49 380A4 2 3 1 0 56 381A4 2 3 1 0 49 380M164 543A4 2 -12 1 0 171 541A4 2 -12 1 0 164 543M60 235A3 2 -66 1 0 63 229A3 2 -66 1 0 60 235M220 555A6 3 -49 1 0 228 546A6 3 -49 1 0 220 555M57 14A5 3 -33 1 0 66 8A5 3 -33 1 0 57 14M257 518A6 4 -60 1 0 263 508A6 4 -60 1 0 257 518M130 471A4 2 -17 1 0 137 469A4 2 -17 1 0 130 471M143 333A4 2 -1 1 0 151 332A4 2 -1 1 0 143 333M279 174A3 2 2 1 0 286 174A3 2 2 1 0 279 174M157 319A6 4 -22 1 0 169 314A6 4 -22 1 0 157 319M24 410A5 3 -64 1 0 29 401A5 3 -64 1 0 24 410M77 57A3 1 -46 1 0 81 52A3 1 -46 1 0 77 57M161 375A3 2 -0 1 0 167 375A3 2 -0 1 0 161 375M148 339A4 2 -50 1 0 153 333A4 2 -50 1 0 148 339M136 437A3 2 -11 1 0 143 436A3 2 -11 1 0 136 437M115 423A5 4 16 1 0 124 425A5 4 16 1 0 115 423M200 343A5 3 -7 1 0 210 342A5 3 -7 1 0 200 343M54 555A5 3 16 1 0 63 557A5 3 16 1 0 54 555M197 560A6 3 -9 1 0 209 558A6 3 -9 1 0 197 560M137 493A5 3 -38 1 0 146 486A5 3 -38 1 0 137 493M196 335A5 3 -46 1 0 203 328A5 3 -46 1 0 196 335M265 284A6 3 -28 1 0 276 278A6 3 -28 1 0 265 284M76 439A6 4 19 1 0 87 443A6 4 19 1 0 76 439M57 261A5 3 -57 1 0 62 253A5 3 -57 1 0 57 261M155 283A5 2 0 1 0 164 283A5 2 0 1 0 155 283M7 324A4 3 -65 1 0 10 316A4 3 -65 1 0 7 324M162 432A3 1 -43 1 0 166 429A3 1 -43 1 0 162 432M122 217A3 2 -31 1 0 127 215A3 2 -31 1 0 122 217M126 237A5 3 -40 1 0 134 231A5 3 -40 1 0 126 237M197 394A4 3 14 1 0 205 396A4 3 14 1 0 197 394M46 355A6 3 -32 1 0 56 349A6 3 -32 1 0 46 355M175 189A6 4 -33 1 0 186 182A6 4 -33 1 0 175 189M272 510A5 2 -33 1 0 279 504A5 2 -33 1 0 272 510M171 191A5 4 2 1 0 181 192A5 4 2 1 0 171 191M275 462A4 3 -42 1 0 281 457A4 3 -42 1 0 275 462M211 359A4 3 17 1 0 218 362A4 3 17 1 0 211 359M232 380A3 2 -1 1 0 238 380A3 2 -1 1 0 232 380M104 367A3 2 -52 1 0 109 362A3 2 -52 1 0 104 367M102 472A5 3 -25 1 0 111 468A5 3 -25 1 0 102 472M96 493A5 2 18 1 0 105 496A5 2 18 1 0 96 493M125 500A4 2 15 1 0 134 502A4 2 15 1 0 125 500M269 200A5 3 -57 1 0 274 192A5 3 -57 1 0 269 200M89 474A5 3 -20 1 0 98 471A5 3 -20 1 0 89 474M201 195A5 3 -56 1 0 207 186A5 3 -56 1 0 201 195M185 33A4 2 -35 1 0 191 29A4 2 -35 1 0 185 33M169 329A6 4 -5 1 0 180 328A6 4 -5 1 0 169 329M209 268A6 3 9 1 0 221 270A6 3 9 1 0 209 268M254 415A3 2 10 1 0 260 416A3 2 10 1 0 254 415M246 447A3 2 -17 1 0 253 445A3 2 -17 1 0 246 447M257 28A4 3 16 1 0 265 30A4 3 16 1 0 257 28M229 293A6 4 -26 1 0 240 288A6 4 -26 1 0 229 293M203 184A3 2 -37 1 0 208 181A3 2 -37 1 0 203 184M177 471A6 4 -29 1 0 188 465A6 4 -29 1 0 177 471M180 201A5 4 -21 1 0 190 197A5 4 -21 1 0 180 201M57 298A5 3 9 1 0 67 300A5 3 9 1 0 57 298M256 327A5 3 -43 1 0 263 320A5 3 -43 1 0 256 327M196 311A3 2 -31 1 0 201 308A3 2 -31 1 0 196 311M160 526A6 3 -28 1 0 171 520A6 3 -28 1 0 160 526M270 440A5 3 -63 1 0 274 432A5 3 -63 1 0 270 440M275 470A3 2 -67 1 0 277 465A3 2 -67 1 0 275 470M174 175A6 4 -51 1 0 181 167A6 4 -51 1 0 174 175M205 357A5 3 -64 1 0 209 348A5 3 -64 1 0 205 357M35 341A3 2 -49 1 0 39 336A3 2 -49 1 0 35 341M94 311A3 2 18 1 0 100 313A3 2 18 1 0 94 311M87 34A5 3 -46 1 0 93 27A5 3 -46 1 0 87 34M283 78A3 2 -16 1 0 289 77A3 2 -16 1 0 283 78M93 484A5 3 -6 1 0 103 483A5 3 -6 1 0 93 484M244 194A4 2 -29 1 0 251 190A4 2 -29 1 0 244 194M185 204A6 3 13 1 0 196 207A6 3 13 1 0 185 204"/><path fill="#6a4218" d="M250 205A6 4 -10 1 0 261 203A6 4 -10 1 0 250 205M100 402A4 3 -8 1 0 109 401A4 3 -8 1 0 100 402M148 499A6 3 -59 1 0 154 488A6 3 -59 1 0 148 499M245 514A6 3 -61 1 0 251 503A6 3 -61 1 0 245 514M4 427A6 3 -39 1 0 13 420A6 3 -39 1 0 4 427M143 545A3 2 -20 1 0 150 543A3 2 -20 1 0 143 545M242 164A4 2 10 1 0 249 166A4 2 10 1 0 242 164M137 207A5 3 10 1 0 147 209A5 3 10 1 0 137 207M129 158A4 3 -34 1 0 136 154A4 3 -34 1 0 129 158M92 351A6 3 -25 1 0 103 346A6 3 -25 1 0 92 351M177 481A3 2 -42 1 0 182 476A3 2 -42 1 0 177 481M34 410A4 3 8 1 0 41 411A4 3 8 1 0 34 410M79 354A4 2 -40 1 0 85 350A4 2 -40 1 0 79 354M31 503A5 3 -11 1 0 41 501A5 3 -11 1 0 31 503M207 478A6 3 -32 1 0 217 472A6 3 -32 1 0 207 478M277 22A4 3 -20 1 0 284 20A4 3 -20 1 0 277 22M49 390A4 3 -5 1 0 58 389A4 3 -5 1 0 49 390M154 311A5 3 -7 1 0 163 310A5 3 -7 1 0 154 311M121 304A5 3 12 1 0 131 306A5 3 12 1 0 121 304M36 470A3 2 3 1 0 43 470A3 2 3 1 0 36 470M249 538A3 2 -54 1 0 252 534A3 2 -54 1 0 249 538M132 361A6 5 1 1 0 144 362A6 5 1 1 0 132 361M217 499A5 3 16 1 0 227 502A5 3 16 1 0 217 499M253 127A5 2 6 1 0 262 128A5 2 6 1 0 253 127M91 322A5 4 15 1 0 101 325A5 4 15 1 0 91 322M162 495A4 2 -10 1 0 170 494A4 2 -10 1 0 162 495M268 303A5 3 13 1 0 279 305A5 3 13 1 0 268 303M254 415A5 3 12 1 0 263 417A5 3 12 1 0 254 415M226 449A5 3 -22 1 0 235 445A5 3 -22 1 0 226 449M126 369A5 4 -56 1 0 131 361A5 4 -56 1 0 126 369M67 357A6 3 -14 1 0 79 355A6 3 -14 1 0 67 357M162 361A5 2 -33 1 0 170 355A5 2 -33 1 0 162 361M151 405A6 4 -59 1 0 158 394A6 4 -59 1 0 151 405M248 290A6 4 18 1 0 260 294A6 4 18 1 0 248 290M255 363A5 2 -10 1 0 264 361A5 2 -10 1 0 255 363M204 222A5 3 -41 1 0 212 215A5 3 -41 1 0 204 222M62 559A5 4 -70 1 0 65 549A5 4 -70 1 0 62 559M176 288A5 3 -48 1 0 183 280A5 3 -48 1 0 176 288M202 362A4 3 -54 1 0 208 354A4 3 -54 1 0 202 362M242 405A3 2 -41 1 0 246 401A3 2 -41 1 0 242 405M242 293A6 4 -33 1 0 252 286A6 4 -33 1 0 242 293M283 490A6 3 3 1 0 295 490A6 3 3 1 0 283 490M65 416A6 3 -65 1 0 70 406A6 3 -65 1 0 65 416M67 342A5 3 -47 1 0 73 335A5 3 -47 1 0 67 342M207 369A5 3 -66 1 0 211 360A5 3 -66 1 0 207 369M288 538A3 2 13 1 0 293 539A3 2 13 1 0 288 538M190 461A6 3 -22 1 0 201 457A6 3 -22 1 0 190 461M280 498A6 4 4 1 0 293 499A6 4 4 1 0 280 498M176 506A4 2 -17 1 0 183 504A4 2 -17 1 0 176 506M47 359A6 4 -16 1 0 58 356A6 4 -16 1 0 47 359M75 458A4 2 -70 1 0 78 450A4 2 -70 1 0 75 458M142 171A5 3 17 1 0 150 174A5 3 17 1 0 142 171M37 477A5 3 -35 1 0 46 471A5 3 -35 1 0 37 477M247 401A3 1 -36 1 0 252 397A3 1 -36 1 0 247 401M273 30A3 2 -26 1 0 278 28A3 2 -26 1 0 273 30M242 290A5 3 -19 1 0 251 287A5 3 -19 1 0 242 290M24 199A6 4 -19 1 0 35 195A6 4 -19 1 0 24 199M265 227A5 3 6 1 0 275 228A5 3 6 1 0 265 227M230 390A4 3 -45 1 0 236 385A4 3 -45 1 0 230 390M112 364A6 3 5 1 0 124 365A6 3 5 1 0 112 364M90 545A5 4 -48 1 0 96 538A5 4 -48 1 0 90 545M146 467A5 2 -47 1 0 153 459A5 2 -47 1 0 146 467M40 345A5 4 -51 1 0 47 337A5 4 -51 1 0 40 345M98 374A4 2 16 1 0 104 376A4 2 16 1 0 98 374M195 332A3 1 -34 1 0 199 329A3 1 -34 1 0 195 332M2 370A5 3 -47 1 0 8 363A5 3 -47 1 0 2 370M278 74A3 2 -51 1 0 283 68A3 2 -51 1 0 278 74M159 241A6 3 -12 1 0 170 238A6 3 -12 1 0 159 241M148 511A6 4 -42 1 0 157 503A6 4 -42 1 0 148 511M26 372A5 3 -55 1 0 32 364A5 3 -55 1 0 26 372M27 467A6 4 -24 1 0 38 462A6 4 -24 1 0 27 467M283 394A6 4 -3 1 0 296 393A6 4 -3 1 0 283 394M243 540A6 3 -40 1 0 253 532A6 3 -40 1 0 243 540M122 496A4 2 -66 1 0 125 490A4 2 -66 1 0 122 496M276 528A4 3 -6 1 0 283 527A4 3 -6 1 0 276 528M229 511A4 2 -29 1 0 236 508A4 2 -29 1 0 229 511M148 218A3 2 -69 1 0 151 211A3 2 -69 1 0 148 218M252 182A3 1 -61 1 0 255 177A3 1 -61 1 0 252 182M188 165A4 2 -36 1 0 194 161A4 2 -36 1 0 188 165M288 494A5 4 -12 1 0 298 492A5 4 -12 1 0 288 494M246 507A6 3 17 1 0 258 511A6 3 17 1 0 246 507M165 404A5 2 -48 1 0 172 397A5 2 -48 1 0 165 404M158 273A6 4 -48 1 0 166 265A6 4 -48 1 0 158 273M209 153A5 3 -17 1 0 218 151A5 3 -17 1 0 209 153M107 404A4 3 -45 1 0 114 398A4 3 -45 1 0 107 404M213 74A5 2 -41 1 0 221 67A5 2 -41 1 0 213 74M91 380A4 2 15 1 0 99 383A4 2 15 1 0 91 380M248 411A3 2 -69 1 0 251 405A3 2 -69 1 0 248 411M76 336A3 2 -39 1 0 80 333A3 2 -39 1 0 76 336M172 551A4 2 -10 1 0 179 550A4 2 -10 1 0 172 551M248 438A3 1 -23 1 0 253 436A3 1 -23 1 0 248 438M240 467A3 2 -69 1 0 242 462A3 2 -69 1 0 240 467M183 92A5 2 5 1 0 194 93A5 2 5 1 0 183 92M242 328A4 2 -58 1 0 246 321A4 2 -58 1 0 242 328M88 476A6 4 -23 1 0 100 471A6 4 -23 1 0 88 476M51 349A3 2 -43 1 0 55 344A3 2 -43 1 0 51 349M111 104A4 2 -36 1 0 117 100A4 2 -36 1 0 111 104M175 39A6 4 -48 1 0 184 29A6 4 -48 1 0 175 39M85 304A5 3 -42 1 0 92 298A5 3 -42 1 0 85 304M274 544A5 3 -37 1 0 282 538A5 3 -37 1 0 274 544M99 531A3 2 7 1 0 106 531A3 2 7 1 0 99 531M61 205A3 1 -38 1 0 65 202A3 1 -38 1 0 61 205M204 411A5 4 -41 1 0 211 405A5 4 -41 1 0 204 411M75 346A6 3 -19 1 0 86 342A6 3 -19 1 0 75 346M46 307A6 4 -29 1 0 56 302A6 4 -29 1 0 46 307M274 466A5 2 -16 1 0 283 464A5 2 -16 1 0 274 466M268 143A6 4 -56 1 0 274 133A6 4 -56 1 0 268 143M131 236A4 2 4 1 0 140 236A4 2 4 1 0 131 236M253 304A6 3 -6 1 0 264 303A6 3 -6 1 0 253 304M174 422A3 2 -31 1 0 180 418A3 2 -31 1 0 174 422M186 539A6 4 -44 1 0 194 531A6 4 -44 1 0 186 539M170 532A3 1 -2 1 0 175 532A3 1 -2 1 0 170 532M238 260A5 3 -58 1 0 243 252A5 3 -58 1 0 238 260M111 248A4 3 -39 1 0 117 243A4 3 -39 1 0 111 248M164 159A3 1 16 1 0 169 160A3 1 16 1 0 164 159M59 59A5 3 -49 1 0 65 52A5 3 -49 1 0 59 59M137 478A4 3 19 1 0 144 480A4 3 19 1 0 137 478M184 509A5 2 -47 1 0 190 502A5 2 -47 1 0 184 509M81 313A4 3 10 1 0 90 315A4 3 10 1 0 81 313M11 295A6 3 -14 1 0 23 292A6 3 -14 1 0 11 295M136 325A5 4 -17 1 0 145 322A5 4 -17 1 0 136 325M130 269A4 3 -10 1 0 139 267A4 3 -10 1 0 130 269M180 452A3 1 2 1 0 185 452A3 1 2 1 0 180 452M126 286A5 4 10 1 0 137 288A5 4 10 1 0 126 286M68 273A5 3 12 1 0 78 276A5 3 12 1 0 68 273M72 273A6 4 -21 1 0 83 269A6 4 -21 1 0 72 273M121 387A5 3 3 1 0 131 387A5 3 3 1 0 121 387M71 310A3 2 -32 1 0 76 307A3 2 -32 1 0 71 310M149 196A3 2 -44 1 0 153 192A3 2 -44 1 0 149 196M16 387A3 1 -8 1 0 21 386A3 1 -8 1 0 16 387M31 365A6 4 -60 1 0 37 353A6 4 -60 1 0 31 365M100 378A5 3 17 1 0 109 381A5 3 17 1 0 100 378M139 277A5 3 -66 1 0 143 268A5 3 -66 1 0 139 277M-4 561A4 3 -17 1 0 2 559A4 3 -17 1 0 -4 561M34 342A3 2 -23 1 0 39 339A3 2 -23 1 0 34 342M-3 373A6 4 -17 1 0 10 369A6 4 -17 1 0 -3 373M-0 463A5 3 -42 1 0 8 456A5 3 -42 1 0 -0 463M194 395A6 4 -38 1 0 204 387A6 4 -38 1 0 194 395M88 322A3 1 -22 1 0 93 320A3 1 -22 1 0 88 322M111 313A6 3 -41 1 0 119 306A6 3 -41 1 0 111 313M97 492A6 4 -45 1 0 106 483A6 4 -45 1 0 97 492M164 446A4 3 -33 1 0 171 442A4 3 -33 1 0 164 446M211 459A5 3 -13 1 0 220 457A5 3 -13 1 0 211 459M233 343A3 2 -22 1 0 240 340A3 2 -22 1 0 233 343M239 379A6 3 10 1 0 251 381A6 3 10 1 0 239 379M33 38A3 2 -13 1 0 40 36A3 2 -13 1 0 33 38M107 430A3 2 -3 1 0 114 429A3 2 -3 1 0 107 430M207 64A6 4 2 1 0 219 64A6 4 2 1 0 207 64M114 232A5 2 -15 1 0 124 229A5 2 -15 1 0 114 232M103 435A5 4 -12 1 0 113 433A5 4 -12 1 0 103 435M50 414A5 3 -40 1 0 57 408A5 3 -40 1 0 50 414M269 455A5 4 -43 1 0 277 448A5 4 -43 1 0 269 455M227 244A3 2 -68 1 0 229 239A3 2 -68 1 0 227 244M133 313A3 2 -48 1 0 138 308A3 2 -48 1 0 133 313M64 571A3 2 -61 1 0 66 566A3 2 -61 1 0 64 571M134 131A3 2 -14 1 0 140 129A3 2 -14 1 0 134 131M264 298A5 2 -12 1 0 273 296A5 2 -12 1 0 264 298M165 268A3 2 8 1 0 172 269A3 2 8 1 0 165 268M170 322A5 3 -20 1 0 179 319A5 3 -20 1 0 170 322M227 51A6 3 -35 1 0 237 44A6 3 -35 1 0 227 51M87 249A3 2 19 1 0 93 251A3 2 19 1 0 87 249M163 326A4 2 -7 1 0 170 325A4 2 -7 1 0 163 326M106 326A5 2 -30 1 0 115 321A5 2 -30 1 0 106 326M277 249A3 2 4 1 0 283 249A3 2 4 1 0 277 249M238 237A5 3 -67 1 0 242 228A5 3 -67 1 0 238 237M20 487A4 2 -23 1 0 26 484A4 2 -23 1 0 20 487M225 538A5 3 -29 1 0 234 534A5 3 -29 1 0 225 538M91 314A6 4 -8 1 0 104 312A6 4 -8 1 0 91 314M267 539A4 3 9 1 0 274 540A4 3 9 1 0 267 539M145 496A3 2 9 1 0 151 497A3 2 9 1 0 145 496M51 210A4 2 19 1 0 59 213A4 2 19 1 0 51 210M260 378A4 2 -24 1 0 267 375A4 2 -24 1 0 260 378M67 309A6 4 -22 1 0 78 305A6 4 -22 1 0 67 309M165 561A5 3 4 1 0 175 561A5 3 4 1 0 165 561M165 252A5 4 -24 1 0 174 248A5 4 -24 1 0 165 252M255 145A6 4 -35 1 0 265 138A6 4 -35 1 0 255 145M194 459A4 2 -65 1 0 198 452A4 2 -65 1 0 194 459"/><path fill="#94742a" d="M93 471A5 3 -64 1 0 97 462A5 3 -64 1 0 93 471M276 192A6 3 -0 1 0 288 192A6 3 -0 1 0 276 192M129 208A3 2 -52 1 0 132 203A3 2 -52 1 0 129 208M106 411A4 2 17 1 0 113 413A4 2 17 1 0 106 411M14 438A3 1 -58 1 0 16 434A3 1 -58 1 0 14 438M195 116A6 3 -7 1 0 207 115A6 3 -7 1 0 195 116M258 447A4 2 -59 1 0 263 440A4 2 -59 1 0 258 447M290 484A4 2 13 1 0 298 486A4 2 13 1 0 290 484M38 451A6 4 -15 1 0 49 448A6 4 -15 1 0 38 451M253 57A3 2 -50 1 0 257 52A3 2 -50 1 0 253 57M112 324A4 2 -56 1 0 116 318A4 2 -56 1 0 112 324M46 466A6 3 -68 1 0 50 455A6 3 -68 1 0 46 466M269 250A3 2 -0 1 0 275 250A3 2 -0 1 0 269 250M208 565A5 3 -54 1 0 213 557A5 3 -54 1 0 208 565M133 550A3 2 4 1 0 139 550A3 2 4 1 0 133 550M92 498A5 4 -7 1 0 103 496A5 4 -7 1 0 92 498M242 229A3 2 -6 1 0 249 229A3 2 -6 1 0 242 229M-5 360A5 3 -67 1 0 -1 351A5 3 -67 1 0 -5 360M26 484A3 2 -49 1 0 29 480A3 2 -49 1 0 26 484M227 331A3 1 -8 1 0 233 330A3 1 -8 1 0 227 331M168 170A3 2 -10 1 0 173 169A3 2 -10 1 0 168 170M195 282A5 3 5 1 0 205 283A5 3 5 1 0 195 282M277 234A4 2 -14 1 0 285 233A4 2 -14 1 0 277 234M76 400A3 2 9 1 0 81 401A3 2 9 1 0 76 400M124 265A3 2 14 1 0 131 266A3 2 14 1 0 124 265M221 179A4 3 7 1 0 228 180A4 3 7 1 0 221 179M25 397A5 3 -55 1 0 30 389A5 3 -55 1 0 25 397M229 214A4 3 -40 1 0 236 209A4 3 -40 1 0 229 214M293 402A4 2 -69 1 0 296 395A4 2 -69 1 0 293 402M99 423A6 4 18 1 0 111 427A6 4 18 1 0 99 423M263 26A6 3 -60 1 0 269 15A6 3 -60 1 0 263 26M204 240A5 3 4 1 0 214 241A5 3 4 1 0 204 240M219 376A4 2 -52 1 0 224 370A4 2 -52 1 0 219 376M71 420A4 2 17 1 0 78 422A4 2 17 1 0 71 420M142 287A3 2 -1 1 0 148 287A3 2 -1 1 0 142 287M239 483A3 2 -62 1 0 242 477A3 2 -62 1 0 239 483M186 420A5 3 6 1 0 195 421A5 3 6 1 0 186 420M211 73A5 2 4 1 0 221 73A5 2 4 1 0 211 73M115 485A3 2 -65 1 0 118 479A3 2 -65 1 0 115 485M261 387A4 2 -18 1 0 269 384A4 2 -18 1 0 261 387M62 267A5 2 -11 1 0 72 265A5 2 -11 1 0 62 267M31 270A3 2 -5 1 0 38 269A3 2 -5 1 0 31 270M137 340A3 2 -11 1 0 144 339A3 2 -11 1 0 137 340M106 125A5 3 -20 1 0 116 121A5 3 -20 1 0 106 125M194 439A6 4 4 1 0 206 439A6 4 4 1 0 194 439M242 222A6 4 -42 1 0 251 214A6 4 -42 1 0 242 222M140 417A6 3 15 1 0 151 420A6 3 15 1 0 140 417M133 378A4 2 -11 1 0 140 377A4 2 -11 1 0 133 378M80 450A5 3 -22 1 0 89 446A5 3 -22 1 0 80 450M272 73A5 3 -17 1 0 281 70A5 3 -17 1 0 272 73M200 146A6 4 -8 1 0 213 144A6 4 -8 1 0 200 146M184 179A4 2 12 1 0 191 181A4 2 12 1 0 184 179M266 550A6 3 -1 1 0 279 550A6 3 -1 1 0 266 550M245 164A3 2 -55 1 0 249 158A3 2 -55 1 0 245 164M105 395A3 1 -66 1 0 108 390A3 1 -66 1 0 105 395M52 423A6 3 11 1 0 63 425A6 3 11 1 0 52 423M92 557A6 3 -2 1 0 105 557A6 3 -2 1 0 92 557M265 345A4 3 9 1 0 274 347A4 3 9 1 0 265 345M113 278A4 2 -65 1 0 116 271A4 2 -65 1 0 113 278M86 148A3 2 -59 1 0 89 142A3 2 -59 1 0 86 148M141 174A6 4 -27 1 0 152 168A6 4 -27 1 0 141 174M267 296A5 3 -40 1 0 274 290A5 3 -40 1 0 267 296M63 468A3 2 -18 1 0 69 466A3 2 -18 1 0 63 468M151 205A6 3 -42 1 0 160 197A6 3 -42 1 0 151 205M186 336A5 3 -68 1 0 190 326A5 3 -68 1 0 186 336M220 119A3 1 -47 1 0 224 115A3 1 -47 1 0 220 119M218 283A4 3 1 1 0 226 283A4 3 1 1 0 218 283M108 289A6 3 -39 1 0 118 282A6 3 -39 1 0 108 289M193 389A4 2 -20 1 0 202 386A4 2 -20 1 0 193 389M129 406A4 3 -51 1 0 135 399A4 3 -51 1 0 129 406M105 426A4 2 -0 1 0 114 426A4 2 -0 1 0 105 426M147 336A4 3 -7 1 0 155 335A4 3 -7 1 0 147 336M221 179A3 1 -8 1 0 226 178A3 1 -8 1 0 221 179M114 230A3 1 -32 1 0 119 227A3 1 -32 1 0 114 230M106 269A4 2 13 1 0 113 271A4 2 13 1 0 106 269M239 537A3 2 -3 1 0 244 536A3 2 -3 1 0 239 537M280 554A5 3 -5 1 0 289 553A5 3 -5 1 0 280 554M92 390A5 4 -48 1 0 99 382A5 4 -48 1 0 92 390M160 513A6 4 -11 1 0 172 510A6 4 -11 1 0 160 513M272 300A5 4 -12 1 0 282 298A5 4 -12 1 0 272 300M233 204A5 3 -50 1 0 239 196A5 3 -50 1 0 233 204M282 193A5 2 -55 1 0 287 185A5 2 -55 1 0 282 193M154 241A3 1 3 1 0 160 242A3 1 3 1 0 154 241M58 496A5 2 -70 1 0 62 486A5 2 -70 1 0 58 496M102 302A4 2 -12 1 0 111 300A4 2 -12 1 0 102 302M97 333A3 2 -50 1 0 101 328A3 2 -50 1 0 97 333M62 203A6 3 -36 1 0 72 196A6 3 -36 1 0 62 203M123 210A6 3 -68 1 0 128 199A6 3 -68 1 0 123 210M127 305A3 1 11 1 0 132 306A3 1 11 1 0 127 305M192 163A5 2 -61 1 0 196 155A5 2 -61 1 0 192 163M103 471A5 4 -65 1 0 108 461A5 4 -65 1 0 103 471M215 122A3 1 -35 1 0 219 119A3 1 -35 1 0 215 122M156 256A3 2 -53 1 0 159 251A3 2 -53 1 0 156 256M279 166A6 4 -2 1 0 290 166A6 4 -2 1 0 279 166M130 211A6 3 -51 1 0 137 202A6 3 -51 1 0 130 211M222 537A5 2 2 1 0 231 538A5 2 2 1 0 222 537M169 462A3 2 11 1 0 175 463A3 2 11 1 0 169 462M178 282A6 3 -54 1 0 184 273A6 3 -54 1 0 178 282M130 404A6 4 -24 1 0 140 400A6 4 -24 1 0 130 404M157 448A3 2 -61 1 0 161 442A3 2 -61 1 0 157 448M154 190A3 2 -61 1 0 157 184A3 2 -61 1 0 154 190M178 414A6 4 -66 1 0 183 403A6 4 -66 1 0 178 414M191 208A5 3 -0 1 0 201 208A5 3 -0 1 0 191 208M120 320A6 3 -18 1 0 131 317A6 3 -18 1 0 120 320M22 344A6 4 -13 1 0 34 341A6 4 -13 1 0 22 344M47 432A3 1 11 1 0 53 433A3 1 11 1 0 47 432M137 464A5 3 -30 1 0 145 460A5 3 -30 1 0 137 464M290 397A4 2 -42 1 0 295 392A4 2 -42 1 0 290 397M167 174A5 2 -13 1 0 177 172A5 2 -13 1 0 167 174M215 258A4 2 -44 1 0 221 253A4 2 -44 1 0 215 258M267 367A6 3 -42 1 0 276 359A6 3 -42 1 0 267 367M224 278A6 3 -45 1 0 232 270A6 3 -45 1 0 224 278M126 264A3 2 14 1 0 132 266A3 2 14 1 0 126 264M201 164A5 2 -51 1 0 208 156A5 2 -51 1 0 201 164M141 324A3 2 11 1 0 147 325A3 2 11 1 0 141 324M41 402A4 2 -50 1 0 47 396A4 2 -50 1 0 41 402M224 546A4 3 -39 1 0 231 541A4 3 -39 1 0 224 546M-8 524A4 3 -8 1 0 0 523A4 3 -8 1 0 -8 524M3 417A4 2 -0 1 0 10 417A4 2 -0 1 0 3 417M272 259A4 3 -63 1 0 275 253A4 3 -63 1 0 272 259M94 491A3 1 18 1 0 99 493A3 1 18 1 0 94 491M205 491A3 2 9 1 0 211 492A3 2 9 1 0 205 491M103 285A4 2 -60 1 0 107 278A4 2 -60 1 0 103 285M215 350A3 2 -35 1 0 219 347A3 2 -35 1 0 215 350M165 363A4 3 -56 1 0 169 356A4 3 -56 1 0 165 363M42 418A4 2 -19 1 0 49 416A4 2 -19 1 0 42 418M242 213A5 2 -38 1 0 250 207A5 2 -38 1 0 242 213M83 439A4 2 -35 1 0 89 435A4 2 -35 1 0 83 439M240 482A3 2 12 1 0 246 483A3 2 12 1 0 240 482M200 329A6 3 -66 1 0 205 318A6 3 -66 1 0 200 329M142 450A4 3 -60 1 0 146 443A4 3 -60 1 0 142 450M16 479A4 2 -44 1 0 21 474A4 2 -44 1 0 16 479M165 350A3 2 -70 1 0 167 344A3 2 -70 1 0 165 350M144 544A6 4 -64 1 0 149 533A6 4 -64 1 0 144 544M164 409A5 3 -17 1 0 173 407A5 3 -17 1 0 164 409M27 17A6 4 -14 1 0 40 14A6 4 -14 1 0 27 17M205 162A3 2 -55 1 0 209 156A3 2 -55 1 0 205 162M192 224A3 1 -19 1 0 198 222A3 1 -19 1 0 192 224M76 159A6 3 -54 1 0 84 149A6 3 -54 1 0 76 159M100 473A6 3 10 1 0 113 476A6 3 10 1 0 100 473M155 267A3 2 -26 1 0 161 264A3 2 -26 1 0 155 267M98 265A3 2 -31 1 0 103 262A3 2 -31 1 0 98 265M262 107A3 2 -65 1 0 265 101A3 2 -65 1 0 262 107M289 435A3 2 -43 1 0 293 431A3 2 -43 1 0 289 435M142 191A5 2 -46 1 0 149 184A5 2 -46 1 0 142 191M122 412A5 3 -22 1 0 131 408A5 3 -22 1 0 122 412M65 480A5 4 -33 1 0 74 474A5 4 -33 1 0 65 480M254 185A4 2 -33 1 0 260 181A4 2 -33 1 0 254 185M167 511A4 2 -60 1 0 171 505A4 2 -60 1 0 167 511M86 20A5 3 -39 1 0 93 14A5 3 -39 1 0 86 20M266 290A3 1 -59 1 0 269 286A3 1 -59 1 0 266 290M58 232A5 3 13 1 0 68 234A5 3 13 1 0 58 232M208 534A3 2 -21 1 0 214 532A3 2 -21 1 0 208 534M180 438A4 2 -39 1 0 187 433A4 2 -39 1 0 180 438M172 199A3 1 -54 1 0 175 195A3 1 -54 1 0 172 199M131 382A3 2 -15 1 0 136 381A3 2 -15 1 0 131 382M262 500A6 3 -6 1 0 274 499A6 3 -6 1 0 262 500M69 417A6 3 6 1 0 81 419A6 3 6 1 0 69 417"/><path fill="#a8561a" d="M33 422A5 3 -60 1 0 38 413A5 3 -60 1 0 33 422M109 352A3 2 -70 1 0 111 345A3 2 -70 1 0 109 352M280 524A4 3 -25 1 0 287 521A4 3 -25 1 0 280 524M90 459A5 3 -56 1 0 96 450A5 3 -56 1 0 90 459M202 213A4 3 -7 1 0 209 212A4 3 -7 1 0 202 213M272 376A4 2 14 1 0 280 378A4 2 14 1 0 272 376M9 139A4 2 -47 1 0 15 133A4 2 -47 1 0 9 139M200 448A3 2 -60 1 0 203 444A3 2 -60 1 0 200 448M52 160A6 4 8 1 0 63 162A6 4 8 1 0 52 160M161 274A3 2 1 1 0 167 274A3 2 1 1 0 161 274M220 125A5 3 9 1 0 230 126A5 3 9 1 0 220 125M-5 438A3 1 -29 1 0 -0 436A3 1 -29 1 0 -5 438M209 73A5 2 -1 1 0 220 73A5 2 -1 1 0 209 73M63 411A4 3 -49 1 0 68 406A4 3 -49 1 0 63 411M22 359A5 2 17 1 0 31 362A5 2 17 1 0 22 359M189 380A3 2 -29 1 0 194 377A3 2 -29 1 0 189 380M50 543A4 2 17 1 0 58 545A4 2 17 1 0 50 543M283 401A5 3 -55 1 0 288 393A5 3 -55 1 0 283 401M198 490A6 4 13 1 0 209 493A6 4 13 1 0 198 490M233 260A5 3 -55 1 0 239 252A5 3 -55 1 0 233 260M283 299A6 4 -63 1 0 289 288A6 4 -63 1 0 283 299M272 67A4 2 1 1 0 279 67A4 2 1 1 0 272 67M168 403A6 3 -44 1 0 177 395A6 3 -44 1 0 168 403M175 543A4 3 -64 1 0 178 536A4 3 -64 1 0 175 543M217 538A6 3 -52 1 0 224 528A6 3 -52 1 0 217 538M21 297A5 3 -18 1 0 31 294A5 3 -18 1 0 21 297M139 467A4 3 -9 1 0 146 466A4 3 -9 1 0 139 467M285 210A6 4 -53 1 0 293 199A6 4 -53 1 0 285 210M103 508A4 2 -46 1 0 109 502A4 2 -46 1 0 103 508M186 504A5 3 -32 1 0 195 499A5 3 -32 1 0 186 504M243 286A3 2 4 1 0 249 286A3 2 4 1 0 243 286M154 491A6 3 2 1 0 166 491A6 3 2 1 0 154 491M244 471A5 3 -22 1 0 252 467A5 3 -22 1 0 244 471M277 391A5 4 -13 1 0 287 389A5 4 -13 1 0 277 391M189 208A4 2 19 1 0 196 210A4 2 19 1 0 189 208M185 465A3 2 -22 1 0 190 463A3 2 -22 1 0 185 465M97 460A3 2 -1 1 0 104 460A3 2 -1 1 0 97 460M288 188A3 1 -4 1 0 294 188A3 1 -4 1 0 288 188M81 344A3 2 18 1 0 86 346A3 2 18 1 0 81 344M217 345A3 2 -45 1 0 222 341A3 2 -45 1 0 217 345M63 426A6 3 -41 1 0 72 418A6 3 -41 1 0 63 426M214 214A3 2 -56 1 0 218 209A3 2 -56 1 0 214 214M130 311A5 3 -51 1 0 136 304A5 3 -51 1 0 130 311M87 78A5 2 8 1 0 96 79A5 2 8 1 0 87 78M148 467A5 3 -39 1 0 155 461A5 3 -39 1 0 148 467M40 439A4 3 -2 1 0 49 439A4 3 -2 1 0 40 439M259 525A6 3 -4 1 0 270 524A6 3 -4 1 0 259 525M86 391A3 2 -18 1 0 93 389A3 2 -18 1 0 86 391M275 341A3 1 14 1 0 280 343A3 1 14 1 0 275 341M11 426A4 2 -6 1 0 19 425A4 2 -6 1 0 11 426M24 325A5 3 5 1 0 34 326A5 3 5 1 0 24 325M139 473A3 2 -1 1 0 145 473A3 2 -1 1 0 139 473M65 354A5 4 10 1 0 75 356A5 4 10 1 0 65 354M203 544A6 4 14 1 0 215 547A6 4 14 1 0 203 544M254 213A4 2 -55 1 0 259 206A4 2 -55 1 0 254 213M202 132A6 5 -37 1 0 212 125A6 5 -37 1 0 202 132M244 37A6 3 -11 1 0 255 35A6 3 -11 1 0 244 37M63 308A3 2 4 1 0 69 309A3 2 4 1 0 63 308M218 51A4 3 -12 1 0 226 49A4 3 -12 1 0 218 51M240 163A5 3 -56 1 0 245 155A5 3 -56 1 0 240 163M228 512A5 4 -15 1 0 237 510A5 4 -15 1 0 228 512M265 554A4 3 -15 1 0 273 552A4 3 -15 1 0 265 554M128 496A6 4 -23 1 0 140 491A6 4 -23 1 0 128 496M190 275A5 4 -13 1 0 200 273A5 4 -13 1 0 190 275M281 404A6 3 -44 1 0 289 396A6 3 -44 1 0 281 404M251 264A5 2 -31 1 0 259 258A5 2 -31 1 0 251 264M265 215A3 2 -12 1 0 272 214A3 2 -12 1 0 265 215M165 518A3 2 -61 1 0 167 513A3 2 -61 1 0 165 518M99 192A4 2 -6 1 0 107 191A4 2 -6 1 0 99 192M147 25A6 3 -11 1 0 159 23A6 3 -11 1 0 147 25M264 482A6 3 -56 1 0 270 472A6 3 -56 1 0 264 482M228 289A6 3 17 1 0 239 292A6 3 17 1 0 228 289M84 425A4 3 -37 1 0 90 421A4 3 -37 1 0 84 425M145 321A6 3 19 1 0 157 325A6 3 19 1 0 145 321M89 227A3 2 -13 1 0 96 225A3 2 -13 1 0 89 227M197 63A3 1 -7 1 0 202 62A3 1 -7 1 0 197 63M138 389A6 3 -42 1 0 147 381A6 3 -42 1 0 138 389M233 412A5 2 -4 1 0 243 412A5 2 -4 1 0 233 412M246 168A4 3 -43 1 0 252 163A4 3 -43 1 0 246 168M43 504A5 2 -70 1 0 46 495A5 2 -70 1 0 43 504M167 538A5 3 -38 1 0 176 532A5 3 -38 1 0 167 538M260 536A6 3 -57 1 0 266 527A6 3 -57 1 0 260 536M69 310A4 2 -51 1 0 74 305A4 2 -51 1 0 69 310M238 517A5 2 15 1 0 247 519A5 2 15 1 0 238 517M37 349A3 1 -45 1 0 41 345A3 1 -45 1 0 37 349M232 185A4 2 -54 1 0 236 179A4 2 -54 1 0 232 185M74 248A3 1 -19 1 0 80 246A3 1 -19 1 0 74 248M265 473A6 4 -51 1 0 272 464A6 4 -51 1 0 265 473M145 335A5 3 -12 1 0 154 333A5 3 -12 1 0 145 335M96 387A3 1 -21 1 0 101 385A3 1 -21 1 0 96 387M135 478A5 4 -16 1 0 145 476A5 4 -16 1 0 135 478M-4 419A6 3 -49 1 0 4 410A6 3 -49 1 0 -4 419M229 494A3 1 -33 1 0 233 491A3 1 -33 1 0 229 494M211 371A5 3 -62 1 0 215 363A5 3 -62 1 0 211 371M241 430A6 3 1 1 0 253 430A6 3 1 1 0 241 430M228 278A4 3 -15 1 0 235 276A4 3 -15 1 0 228 278M265 149A4 3 -50 1 0 270 144A4 3 -50 1 0 265 149M148 424A6 3 -33 1 0 158 418A6 3 -33 1 0 148 424M40 281A4 2 19 1 0 48 284A4 2 19 1 0 40 281M265 212A5 3 -29 1 0 274 207A5 3 -29 1 0 265 212M276 490A4 2 -24 1 0 283 487A4 2 -24 1 0 276 490M85 480A3 2 -43 1 0 90 476A3 2 -43 1 0 85 480M244 572A5 3 -48 1 0 252 564A5 3 -48 1 0 244 572M34 390A6 4 17 1 0 45 394A6 4 17 1 0 34 390M212 230A6 3 1 1 0 224 230A6 3 1 1 0 212 230M187 455A4 2 -68 1 0 190 447A4 2 -68 1 0 187 455M32 407A5 3 8 1 0 42 408A5 3 8 1 0 32 407M11 445A4 3 -12 1 0 19 444A4 3 -12 1 0 11 445M236 298A4 3 -70 1 0 239 290A4 3 -70 1 0 236 298M55 396A5 2 -51 1 0 62 388A5 2 -51 1 0 55 396M202 544A3 2 5 1 0 208 544A3 2 5 1 0 202 544M245 537A6 3 -23 1 0 255 532A6 3 -23 1 0 245 537M258 350A6 4 -22 1 0 270 345A6 4 -22 1 0 258 350M216 508A4 2 17 1 0 223 510A4 2 17 1 0 216 508M143 463A3 1 -63 1 0 145 457A3 1 -63 1 0 143 463M267 403A6 4 3 1 0 278 404A6 4 3 1 0 267 403M273 380A6 4 16 1 0 284 383A6 4 16 1 0 273 380M286 397A6 4 -38 1 0 296 389A6 4 -38 1 0 286 397M39 451A4 2 -42 1 0 44 446A4 2 -42 1 0 39 451M117 318A3 2 11 1 0 123 319A3 2 11 1 0 117 318M61 257A3 2 -45 1 0 64 253A3 2 -45 1 0 61 257M37 362A6 3 0 1 0 49 362A6 3 0 1 0 37 362M253 315A5 4 12 1 0 263 318A5 4 12 1 0 253 315M280 256A6 4 -63 1 0 286 244A6 4 -63 1 0 280 256M234 261A5 2 -31 1 0 242 256A5 2 -31 1 0 234 261M251 507A3 2 5 1 0 257 508A3 2 5 1 0 251 507M93 10A3 2 1 1 0 99 10A3 2 1 1 0 93 10M-0 481A5 3 -55 1 0 6 472A5 3 -55 1 0 -0 481M40 519A4 2 0 1 0 48 519A4 2 0 1 0 40 519M248 208A4 2 -10 1 0 255 206A4 2 -10 1 0 248 208M198 288A6 4 -49 1 0 206 279A6 4 -49 1 0 198 288M218 234A5 3 -51 1 0 225 225A5 3 -51 1 0 218 234M191 332A4 3 5 1 0 198 333A4 3 5 1 0 191 332M237 411A3 2 -69 1 0 239 406A3 2 -69 1 0 237 411M189 270A4 2 -38 1 0 195 265A4 2 -38 1 0 189 270M170 446A3 2 -24 1 0 175 444A3 2 -24 1 0 170 446M141 536A5 4 -10 1 0 151 534A5 4 -10 1 0 141 536M127 374A6 3 -7 1 0 139 373A6 3 -7 1 0 127 374M140 311A6 4 -29 1 0 151 305A6 4 -29 1 0 140 311M49 571A5 4 10 1 0 59 573A5 4 10 1 0 49 571M171 62A6 4 -5 1 0 182 61A6 4 -5 1 0 171 62M171 461A6 3 -51 1 0 179 451A6 3 -51 1 0 171 461M259 6A5 3 -66 1 0 263 -4A5 3 -66 1 0 259 6M62 499A5 3 -31 1 0 72 494A5 3 -31 1 0 62 499M273 13A4 2 -62 1 0 276 7A4 2 -62 1 0 273 13M86 472A4 3 -8 1 0 94 471A4 3 -8 1 0 86 472M202 23A4 2 -57 1 0 206 17A4 2 -57 1 0 202 23M233 367A4 2 -6 1 0 240 367A4 2 -6 1 0 233 367M143 529A4 2 -54 1 0 149 522A4 2 -54 1 0 143 529M83 331A6 4 -65 1 0 88 319A6 4 -65 1 0 83 331M223 195A3 2 -31 1 0 228 192A3 2 -31 1 0 223 195M285 544A6 4 -66 1 0 289 534A6 4 -66 1 0 285 544M116 385A3 2 -36 1 0 120 381A3 2 -36 1 0 116 385M252 462A6 3 -53 1 0 259 452A6 3 -53 1 0 252 462M241 459A5 3 -61 1 0 245 451A5 3 -61 1 0 241 459M236 429A3 2 -18 1 0 241 428A3 2 -18 1 0 236 429M231 33A3 1 -54 1 0 234 29A3 1 -54 1 0 231 33M171 218A3 1 -11 1 0 177 217A3 1 -11 1 0 171 218M81 533A5 4 -48 1 0 87 526A5 4 -48 1 0 81 533M163 328A4 2 -19 1 0 170 325A4 2 -19 1 0 163 328M123 373A5 3 -39 1 0 130 367A5 3 -39 1 0 123 373M31 451A4 3 -5 1 0 38 450A4 3 -5 1 0 31 451M207 241A3 2 -4 1 0 214 240A3 2 -4 1 0 207 241M114 482A6 3 -49 1 0 122 472A6 3 -49 1 0 114 482M207 81A6 4 -5 1 0 219 80A6 4 -5 1 0 207 81M202 295A3 2 -61 1 0 205 290A3 2 -61 1 0 202 295M198 422A5 4 -51 1 0 204 414A5 4 -51 1 0 198 422M171 134A6 3 13 1 0 182 137A6 3 13 1 0 171 134"/><path fill="#7a5c20" d="M127 408A6 3 -48 1 0 136 399A6 3 -48 1 0 127 408M285 559A6 3 17 1 0 297 562A6 3 17 1 0 285 559M153 182A5 3 18 1 0 162 185A5 3 18 1 0 153 182M63 152A6 3 -15 1 0 76 148A6 3 -15 1 0 63 152M169 392A5 4 6 1 0 179 393A5 4 6 1 0 169 392M201 250A6 4 -57 1 0 207 241A6 4 -57 1 0 201 250M228 376A5 4 20 1 0 238 380A5 4 20 1 0 228 376M60 475A6 4 8 1 0 73 476A6 4 8 1 0 60 475M88 261A5 2 8 1 0 98 263A5 2 8 1 0 88 261M45 120A5 3 -46 1 0 52 113A5 3 -46 1 0 45 120M163 540A3 2 -62 1 0 167 534A3 2 -62 1 0 163 540M239 415A5 2 -6 1 0 248 414A5 2 -6 1 0 239 415M85 487A6 3 -7 1 0 97 485A6 3 -7 1 0 85 487M280 73A4 2 -3 1 0 288 72A4 2 -3 1 0 280 73M202 51A5 3 -37 1 0 210 45A5 3 -37 1 0 202 51M268 172A6 3 -38 1 0 277 165A6 3 -38 1 0 268 172M197 258A6 3 -46 1 0 206 249A6 3 -46 1 0 197 258M184 410A4 3 2 1 0 192 411A4 3 2 1 0 184 410M270 514A6 4 -62 1 0 276 504A6 4 -62 1 0 270 514M146 492A5 4 -54 1 0 151 484A5 4 -54 1 0 146 492M196 77A3 2 6 1 0 202 77A3 2 6 1 0 196 77M80 463A5 3 11 1 0 90 465A5 3 11 1 0 80 463M287 412A6 3 -42 1 0 296 405A6 3 -42 1 0 287 412M132 324A6 3 -50 1 0 140 314A6 3 -50 1 0 132 324M173 284A5 3 15 1 0 183 287A5 3 15 1 0 173 284M186 166A5 3 -58 1 0 191 157A5 3 -58 1 0 186 166M0 433A6 4 -29 1 0 12 427A6 4 -29 1 0 0 433M111 503A3 2 -69 1 0 113 497A3 2 -69 1 0 111 503M-6 362A6 4 -5 1 0 5 361A6 4 -5 1 0 -6 362M267 371A5 4 0 1 0 277 371A5 4 0 1 0 267 371M206 536A3 2 -31 1 0 211 533A3 2 -31 1 0 206 536M242 292A6 3 15 1 0 254 295A6 3 15 1 0 242 292M289 358A4 3 -15 1 0 297 355A4 3 -15 1 0 289 358M221 167A3 2 -39 1 0 226 163A3 2 -39 1 0 221 167M152 288A4 3 7 1 0 159 289A4 3 7 1 0 152 288M249 188A4 2 -13 1 0 258 186A4 2 -13 1 0 249 188M270 329A4 3 -18 1 0 277 326A4 3 -18 1 0 270 329M134 276A6 4 4 1 0 145 277A6 4 4 1 0 134 276M193 287A5 3 -37 1 0 202 281A5 3 -37 1 0 193 287M133 332A5 3 9 1 0 143 333A5 3 9 1 0 133 332M10 381A6 3 -44 1 0 19 373A6 3 -44 1 0 10 381M231 569A6 3 -60 1 0 237 559A6 3 -60 1 0 231 569M260 538A5 3 -1 1 0 270 537A5 3 -1 1 0 260 538M158 394A5 3 -27 1 0 167 390A5 3 -27 1 0 158 394M211 324A4 3 -63 1 0 215 316A4 3 -63 1 0 211 324M221 456A6 4 -1 1 0 232 456A6 4 -1 1 0 221 456M259 404A3 1 -50 1 0 262 400A3 1 -50 1 0 259 404M15 379A5 3 -67 1 0 19 369A5 3 -67 1 0 15 379M152 295A5 3 -21 1 0 162 291A5 3 -21 1 0 152 295M230 193A6 4 -21 1 0 241 189A6 4 -21 1 0 230 193M-3 407A4 2 -2 1 0 4 407A4 2 -2 1 0 -3 407M160 262A5 3 -19 1 0 170 259A5 3 -19 1 0 160 262M102 212A3 1 -57 1 0 105 207A3 1 -57 1 0 102 212M231 551A5 3 19 1 0 241 555A5 3 19 1 0 231 551M22 354A3 2 4 1 0 28 355A3 2 4 1 0 22 354M166 178A6 3 -15 1 0 178 175A6 3 -15 1 0 166 178M259 76A5 3 -16 1 0 269 73A5 3 -16 1 0 259 76M153 376A5 4 -16 1 0 163 373A5 4 -16 1 0 153 376M84 352A5 2 -59 1 0 89 344A5 2 -59 1 0 84 352M173 412A5 3 3 1 0 183 412A5 3 3 1 0 173 412M164 374A4 2 -38 1 0 171 369A4 2 -38 1 0 164 374M109 288A6 4 -47 1 0 117 280A6 4 -47 1 0 109 288M198 483A3 2 4 1 0 205 484A3 2 4 1 0 198 483M168 320A4 3 -1 1 0 176 320A4 3 -1 1 0 168 320M235 272A5 3 -52 1 0 241 264A5 3 -52 1 0 235 272M254 120A4 2 -40 1 0 260 115A4 2 -40 1 0 254 120M145 252A3 2 8 1 0 151 252A3 2 8 1 0 145 252M132 338A5 3 -4 1 0 143 338A5 3 -4 1 0 132 338M143 263A6 3 18 1 0 154 267A6 3 18 1 0 143 263M195 82A3 2 -9 1 0 201 81A3 2 -9 1 0 195 82M205 192A5 3 11 1 0 214 194A5 3 11 1 0 205 192M83 499A6 4 -68 1 0 87 488A6 4 -68 1 0 83 499M90 236A3 2 -44 1 0 95 231A3 2 -44 1 0 90 236M50 379A6 3 -20 1 0 62 375A6 3 -20 1 0 50 379M53 329A5 3 -43 1 0 60 323A5 3 -43 1 0 53 329M154 319A5 2 -23 1 0 164 315A5 2 -23 1 0 154 319M164 315A5 3 -43 1 0 171 307A5 3 -43 1 0 164 315M145 411A6 3 18 1 0 156 415A6 3 18 1 0 145 411M183 456A4 3 -14 1 0 192 454A4 3 -14 1 0 183 456M267 49A5 3 19 1 0 277 53A5 3 19 1 0 267 49M271 309A3 1 -13 1 0 277 307A3 1 -13 1 0 271 309M177 159A4 3 -68 1 0 180 150A4 3 -68 1 0 177 159M94 323A3 1 -38 1 0 98 320A3 1 -38 1 0 94 323M-2 387A5 3 -39 1 0 6 381A5 3 -39 1 0 -2 387M203 500A6 3 -37 1 0 212 493A6 3 -37 1 0 203 500M280 323A3 1 -2 1 0 286 323A3 1 -2 1 0 280 323M244 488A6 4 -8 1 0 257 486A6 4 -8 1 0 244 488M242 519A3 2 -65 1 0 245 513A3 2 -65 1 0 242 519M133 387A5 3 -23 1 0 142 383A5 3 -23 1 0 133 387M-2 385A5 3 11 1 0 7 386A5 3 11 1 0 -2 385M118 402A6 4 -33 1 0 128 396A6 4 -33 1 0 118 402M166 446A5 3 -13 1 0 175 444A5 3 -13 1 0 166 446M66 311A4 2 -6 1 0 74 310A4 2 -6 1 0 66 311M15 407A4 3 -63 1 0 19 399A4 3 -63 1 0 15 407M-5 506A4 3 -40 1 0 1 501A4 3 -40 1 0 -5 506M268 516A4 2 -47 1 0 273 511A4 2 -47 1 0 268 516M23 334A3 2 -30 1 0 28 331A3 2 -30 1 0 23 334M243 390A4 3 18 1 0 250 393A4 3 18 1 0 243 390M51 573A6 3 -27 1 0 62 567A6 3 -27 1 0 51 573M265 442A5 2 -24 1 0 274 438A5 2 -24 1 0 265 442M126 415A4 2 -24 1 0 135 411A4 2 -24 1 0 126 415M5 352A3 2 -3 1 0 12 351A3 2 -3 1 0 5 352M156 111A5 3 1 1 0 167 111A5 3 1 1 0 156 111M34 257A5 3 -68 1 0 37 248A5 3 -68 1 0 34 257M269 294A5 3 -16 1 0 278 291A5 3 -16 1 0 269 294M175 450A5 4 -63 1 0 180 440A5 4 -63 1 0 175 450M197 498A4 2 -25 1 0 204 494A4 2 -25 1 0 197 498M269 324A3 1 -9 1 0 274 323A3 1 -9 1 0 269 324M219 373A4 3 -3 1 0 227 373A4 3 -3 1 0 219 373M232 164A5 3 -48 1 0 239 156A5 3 -48 1 0 232 164M40 352A3 1 -17 1 0 45 350A3 1 -17 1 0 40 352M163 166A6 3 -42 1 0 172 157A6 3 -42 1 0 163 166M272 136A6 3 -1 1 0 284 136A6 3 -1 1 0 272 136M247 291A4 2 -17 1 0 254 289A4 2 -17 1 0 247 291M167 381A6 4 -41 1 0 177 372A6 4 -41 1 0 167 381M258 430A4 2 -39 1 0 264 425A4 2 -39 1 0 258 430M195 255A6 3 -52 1 0 202 245A6 3 -52 1 0 195 255M153 572A4 3 -25 1 0 161 569A4 3 -25 1 0 153 572M192 341A4 3 -46 1 0 198 335A4 3 -46 1 0 192 341M60 446A5 3 -7 1 0 70 445A5 3 -7 1 0 60 446M1 356A4 3 -69 1 0 4 348A4 3 -69 1 0 1 356M183 277A6 4 12 1 0 195 279A6 4 12 1 0 183 277M220 386A4 2 -51 1 0 225 380A4 2 -51 1 0 220 386M201 409A6 3 -12 1 0 213 407A6 3 -12 1 0 201 409M67 258A5 3 3 1 0 77 258A5 3 3 1 0 67 258M175 291A5 4 -62 1 0 179 282A5 4 -62 1 0 175 291M291 310A5 3 -49 1 0 298 302A5 3 -49 1 0 291 310M21 427A4 2 -7 1 0 29 426A4 2 -7 1 0 21 427M244 57A3 2 20 1 0 250 59A3 2 20 1 0 244 57M55 443A3 2 -30 1 0 61 440A3 2 -30 1 0 55 443M67 532A4 3 -47 1 0 73 526A4 3 -47 1 0 67 532M60 465A4 3 -36 1 0 68 459A4 3 -36 1 0 60 465M247 419A4 3 -17 1 0 256 416A4 3 -17 1 0 247 419M76 326A6 3 -12 1 0 88 324A6 3 -12 1 0 76 326M124 277A3 2 -45 1 0 128 273A3 2 -45 1 0 124 277M210 348A6 4 -14 1 0 223 345A6 4 -14 1 0 210 348M206 263A4 2 -43 1 0 212 258A4 2 -43 1 0 206 263M207 343A3 1 -50 1 0 210 339A3 1 -50 1 0 207 343M126 430A3 2 -43 1 0 131 426A3 2 -43 1 0 126 430M163 327A4 2 -3 1 0 171 327A4 2 -3 1 0 163 327M200 165A4 2 -0 1 0 207 165A4 2 -0 1 0 200 165M272 511A3 2 -31 1 0 277 508A3 2 -31 1 0 272 511M239 324A4 2 17 1 0 247 327A4 2 17 1 0 239 324M284 554A4 3 15 1 0 291 556A4 3 15 1 0 284 554M282 346A3 3 -16 1 0 289 345A3 3 -16 1 0 282 346M103 492A3 2 -3 1 0 109 492A3 2 -3 1 0 103 492M201 302A4 2 -32 1 0 207 298A4 2 -32 1 0 201 302M165 448A6 4 -26 1 0 176 442A6 4 -26 1 0 165 448M289 89A6 4 -55 1 0 296 79A6 4 -55 1 0 289 89M126 495A5 3 -16 1 0 136 492A5 3 -16 1 0 126 495M234 357A5 2 -45 1 0 241 350A5 2 -45 1 0 234 357M162 251A6 3 -44 1 0 171 243A6 3 -44 1 0 162 251M53 416A5 3 -36 1 0 62 410A5 3 -36 1 0 53 416M168 276A3 2 -45 1 0 171 272A3 2 -45 1 0 168 276M257 39A4 2 11 1 0 265 41A4 2 11 1 0 257 39M14 524A5 3 -68 1 0 17 515A5 3 -68 1 0 14 524M157 156A6 4 -38 1 0 166 149A6 4 -38 1 0 157 156M141 327A6 3 -57 1 0 148 316A6 3 -57 1 0 141 327M77 207A3 2 -22 1 0 83 205A3 2 -22 1 0 77 207M107 481A3 2 14 1 0 113 483A3 2 14 1 0 107 481M117 199A6 4 10 1 0 128 200A6 4 10 1 0 117 199M67 386A5 4 -60 1 0 72 377A5 4 -60 1 0 67 386M270 132A3 1 -32 1 0 275 130A3 1 -32 1 0 270 132M67 479A3 1 -38 1 0 71 475A3 1 -38 1 0 67 479M61 278A6 4 -17 1 0 73 274A6 4 -17 1 0 61 278M121 219A4 3 -45 1 0 127 213A4 3 -45 1 0 121 219M272 500A5 2 7 1 0 282 501A5 2 7 1 0 272 500M121 487A3 1 -23 1 0 127 485A3 1 -23 1 0 121 487M234 451A3 2 -25 1 0 238 448A3 2 -25 1 0 234 451M105 461A6 4 -69 1 0 109 450A6 4 -69 1 0 105 461M205 356A4 3 -68 1 0 208 349A4 3 -68 1 0 205 356M239 351A5 3 -45 1 0 246 344A5 3 -45 1 0 239 351M42 550A3 2 -39 1 0 46 546A3 2 -39 1 0 42 550M217 23A3 2 -57 1 0 220 18A3 2 -57 1 0 217 23M245 292A3 2 -27 1 0 250 289A3 2 -27 1 0 245 292M35 471A6 4 -32 1 0 44 465A6 4 -32 1 0 35 471M183 557A5 3 -17 1 0 193 554A5 3 -17 1 0 183 557M71 532A5 3 12 1 0 82 534A5 3 12 1 0 71 532M135 447A5 3 -38 1 0 143 441A5 3 -38 1 0 135 447M14 329A4 3 16 1 0 23 331A4 3 16 1 0 14 329M169 97A3 2 3 1 0 175 98A3 2 3 1 0 169 97M155 127A6 3 -58 1 0 161 118A6 3 -58 1 0 155 127"/><path fill="#8a5a1e" d="M200 183A4 3 -60 1 0 204 175A4 3 -60 1 0 200 183M280 360A4 2 -45 1 0 286 354A4 2 -45 1 0 280 360M276 487A5 3 17 1 0 286 490A5 3 17 1 0 276 487M182 291A5 3 -46 1 0 188 284A5 3 -46 1 0 182 291M12 444A3 2 19 1 0 17 446A3 2 19 1 0 12 444M232 506A3 2 -36 1 0 236 503A3 2 -36 1 0 232 506M106 270A4 3 3 1 0 115 270A4 3 3 1 0 106 270M192 306A4 2 -9 1 0 200 305A4 2 -9 1 0 192 306M221 330A4 3 -54 1 0 226 324A4 3 -54 1 0 221 330M293 234A3 1 -61 1 0 296 229A3 1 -61 1 0 293 234M189 239A5 3 -4 1 0 199 238A5 3 -4 1 0 189 239M92 393A3 2 -11 1 0 97 392A3 2 -11 1 0 92 393M221 59A4 3 -27 1 0 229 55A4 3 -27 1 0 221 59M159 561A4 2 -24 1 0 167 558A4 2 -24 1 0 159 561M60 164A6 3 -39 1 0 69 157A6 3 -39 1 0 60 164M275 543A6 4 -58 1 0 281 533A6 4 -58 1 0 275 543M243 438A3 2 -3 1 0 250 438A3 2 -3 1 0 243 438M175 356A6 3 -26 1 0 185 351A6 3 -26 1 0 175 356M185 290A3 2 -27 1 0 191 287A3 2 -27 1 0 185 290M210 277A3 2 15 1 0 215 279A3 2 15 1 0 210 277M82 145A3 2 -63 1 0 84 140A3 2 -63 1 0 82 145M72 558A3 2 -64 1 0 75 553A3 2 -64 1 0 72 558M198 365A6 4 -60 1 0 204 355A6 4 -60 1 0 198 365M202 223A3 2 12 1 0 208 224A3 2 12 1 0 202 223M203 173A3 2 -1 1 0 209 173A3 2 -1 1 0 203 173M196 327A6 3 -60 1 0 201 318A6 3 -60 1 0 196 327M114 485A5 2 -23 1 0 123 481A5 2 -23 1 0 114 485M225 296A6 5 2 1 0 238 297A6 5 2 1 0 225 296M133 547A5 3 17 1 0 143 550A5 3 17 1 0 133 547M241 573A6 4 -18 1 0 252 570A6 4 -18 1 0 241 573M257 471A6 3 -17 1 0 268 468A6 3 -17 1 0 257 471M267 342A5 3 12 1 0 277 344A5 3 12 1 0 267 342M141 350A5 3 -5 1 0 151 349A5 3 -5 1 0 141 350M251 567A3 2 -60 1 0 254 561A3 2 -60 1 0 251 567M-5 524A6 4 -32 1 0 5 518A6 4 -32 1 0 -5 524M64 483A5 4 -53 1 0 71 474A5 4 -53 1 0 64 483M216 345A5 2 -58 1 0 222 336A5 2 -58 1 0 216 345M113 425A4 2 -20 1 0 120 423A4 2 -20 1 0 113 425M209 455A6 3 -6 1 0 221 454A6 3 -6 1 0 209 455M210 443A4 2 -44 1 0 215 437A4 2 -44 1 0 210 443M42 435A5 3 -34 1 0 50 429A5 3 -34 1 0 42 435M236 262A3 2 -30 1 0 240 260A3 2 -30 1 0 236 262M265 361A6 4 -13 1 0 277 358A6 4 -13 1 0 265 361M140 432A4 3 -13 1 0 148 430A4 3 -13 1 0 140 432M101 210A3 2 -57 1 0 105 205A3 2 -57 1 0 101 210M161 381A4 2 -1 1 0 169 381A4 2 -1 1 0 161 381M55 399A6 3 -33 1 0 65 392A6 3 -33 1 0 55 399M44 488A6 3 -59 1 0 50 478A6 3 -59 1 0 44 488M212 447A6 4 13 1 0 224 450A6 4 13 1 0 212 447M117 252A6 3 -59 1 0 123 242A6 3 -59 1 0 117 252M208 419A3 2 -22 1 0 213 417A3 2 -22 1 0 208 419M281 158A4 2 -27 1 0 288 155A4 2 -27 1 0 281 158M251 69A5 3 -4 1 0 260 69A5 3 -4 1 0 251 69M95 410A6 3 -35 1 0 104 404A6 3 -35 1 0 95 410M241 409A4 3 -30 1 0 249 404A4 3 -30 1 0 241 409M235 288A5 3 -26 1 0 244 283A5 3 -26 1 0 235 288M283 534A5 3 7 1 0 294 536A5 3 7 1 0 283 534M197 433A4 3 12 1 0 204 435A4 3 12 1 0 197 433M226 392A6 4 11 1 0 237 394A6 4 11 1 0 226 392M203 410A3 2 -17 1 0 210 408A3 2 -17 1 0 203 410M146 274A6 4 -57 1 0 153 264A6 4 -57 1 0 146 274M272 54A5 4 15 1 0 283 57A5 4 15 1 0 272 54M264 95A3 2 15 1 0 269 96A3 2 15 1 0 264 95M242 26A3 1 8 1 0 248 27A3 1 8 1 0 242 26M106 458A3 2 -50 1 0 110 453A3 2 -50 1 0 106 458M183 97A6 4 -55 1 0 190 88A6 4 -55 1 0 183 97M33 380A5 4 -15 1 0 44 377A5 4 -15 1 0 33 380M124 424A3 2 -40 1 0 129 419A3 2 -40 1 0 124 424M197 304A3 1 -56 1 0 200 300A3 1 -56 1 0 197 304M142 500A5 3 -16 1 0 151 498A5 3 -16 1 0 142 500M76 499A3 1 -65 1 0 79 494A3 1 -65 1 0 76 499M218 26A3 2 -17 1 0 224 25A3 2 -17 1 0 218 26M201 364A6 4 -12 1 0 213 361A6 4 -12 1 0 201 364M-6 162A5 3 -61 1 0 -1 153A5 3 -61 1 0 -6 162M190 190A3 2 -7 1 0 195 189A3 2 -7 1 0 190 190M205 204A3 2 -63 1 0 208 199A3 2 -63 1 0 205 204M18 372A5 3 -62 1 0 23 363A5 3 -62 1 0 18 372M125 291A5 2 13 1 0 134 293A5 2 13 1 0 125 291M183 313A3 2 -49 1 0 187 308A3 2 -49 1 0 183 313M57 364A3 2 -8 1 0 63 363A3 2 -8 1 0 57 364M239 67A6 3 -67 1 0 244 55A6 3 -67 1 0 239 67M62 475A6 3 -6 1 0 73 474A6 3 -6 1 0 62 475M261 258A4 2 -37 1 0 268 253A4 2 -37 1 0 261 258M101 363A4 2 -25 1 0 107 360A4 2 -25 1 0 101 363M101 407A6 4 14 1 0 113 410A6 4 14 1 0 101 407M94 295A6 4 -57 1 0 101 284A6 4 -57 1 0 94 295M4 436A6 3 -40 1 0 13 428A6 3 -40 1 0 4 436M229 77A4 2 -22 1 0 237 74A4 2 -22 1 0 229 77M85 321A3 1 17 1 0 91 322A3 1 17 1 0 85 321M65 412A3 2 -26 1 0 71 409A3 2 -26 1 0 65 412M131 150A6 3 -51 1 0 138 141A6 3 -51 1 0 131 150M272 153A4 2 -52 1 0 277 146A4 2 -52 1 0 272 153M119 471A3 2 -53 1 0 123 466A3 2 -53 1 0 119 471M247 84A5 3 -5 1 0 256 84A5 3 -5 1 0 247 84M234 472A4 2 -12 1 0 242 470A4 2 -12 1 0 234 472M-3 381A4 3 -9 1 0 5 379A4 3 -9 1 0 -3 381M103 489A3 2 -5 1 0 109 489A3 2 -5 1 0 103 489M162 285A6 3 -20 1 0 173 281A6 3 -20 1 0 162 285M84 232A5 3 -57 1 0 89 224A5 3 -57 1 0 84 232M205 380A4 3 -7 1 0 213 379A4 3 -7 1 0 205 380M290 563A5 2 -55 1 0 295 555A5 2 -55 1 0 290 563M61 292A4 2 -6 1 0 68 291A4 2 -6 1 0 61 292M282 413A6 5 -53 1 0 290 403A6 5 -53 1 0 282 413M276 566A6 4 -42 1 0 284 559A6 4 -42 1 0 276 566M185 222A5 3 7 1 0 194 224A5 3 7 1 0 185 222M239 13A4 3 -24 1 0 246 10A4 3 -24 1 0 239 13M22 335A6 3 3 1 0 35 336A6 3 3 1 0 22 335M143 519A5 3 -15 1 0 152 516A5 3 -15 1 0 143 519M287 415A6 3 11 1 0 299 418A6 3 11 1 0 287 415M188 219A6 3 -4 1 0 200 218A6 3 -4 1 0 188 219M193 422A4 3 -31 1 0 200 417A4 3 -31 1 0 193 422M257 303A4 3 -42 1 0 263 298A4 3 -42 1 0 257 303M95 269A5 4 -48 1 0 102 261A5 4 -48 1 0 95 269M27 529A5 3 -2 1 0 36 529A5 3 -2 1 0 27 529M235 101A6 4 -38 1 0 244 94A6 4 -38 1 0 235 101M145 446A6 3 -39 1 0 154 439A6 3 -39 1 0 145 446M250 40A6 4 -49 1 0 259 31A6 4 -49 1 0 250 40M264 541A6 3 -19 1 0 274 538A6 3 -19 1 0 264 541M141 404A3 2 8 1 0 147 405A3 2 8 1 0 141 404M204 232A4 2 -4 1 0 212 231A4 2 -4 1 0 204 232M114 287A6 4 -69 1 0 119 275A6 4 -69 1 0 114 287M106 341A4 2 -15 1 0 113 339A4 2 -15 1 0 106 341M240 555A4 3 -31 1 0 247 551A4 3 -31 1 0 240 555M151 572A4 2 -60 1 0 155 564A4 2 -60 1 0 151 572M123 232A3 2 17 1 0 128 233A3 2 17 1 0 123 232M261 317A6 4 -68 1 0 266 306A6 4 -68 1 0 261 317M126 453A3 2 4 1 0 131 454A3 2 4 1 0 126 453M63 354A6 5 -13 1 0 75 351A6 5 -13 1 0 63 354M203 51A4 2 -62 1 0 207 45A4 2 -62 1 0 203 51M250 369A4 3 -62 1 0 254 362A4 3 -62 1 0 250 369M243 515A4 3 2 1 0 252 515A4 3 2 1 0 243 515M162 443A4 2 6 1 0 170 444A4 2 6 1 0 162 443M230 218A6 4 7 1 0 242 220A6 4 7 1 0 230 218M57 380A5 3 -63 1 0 62 372A5 3 -63 1 0 57 380M152 461A4 2 -32 1 0 159 457A4 2 -32 1 0 152 461M226 201A6 4 1 1 0 237 201A6 4 1 1 0 226 201M60 485A5 3 -36 1 0 69 478A5 3 -36 1 0 60 485M9 546A4 3 -19 1 0 16 544A4 3 -19 1 0 9 546M141 351A3 2 -2 1 0 147 351A3 2 -2 1 0 141 351M194 248A5 3 -57 1 0 200 240A5 3 -57 1 0 194 248M144 512A6 4 14 1 0 157 515A6 4 14 1 0 144 512M117 328A4 3 2 1 0 126 329A4 3 2 1 0 117 328M287 471A5 4 -15 1 0 297 469A5 4 -15 1 0 287 471M236 88A6 4 6 1 0 248 89A6 4 6 1 0 236 88M130 569A4 2 -29 1 0 136 565A4 2 -29 1 0 130 569M114 485A6 3 20 1 0 126 490A6 3 20 1 0 114 485M150 191A6 4 -2 1 0 161 190A6 4 -2 1 0 150 191M284 342A4 2 -0 1 0 291 342A4 2 -0 1 0 284 342M147 509A6 4 -62 1 0 153 498A6 4 -62 1 0 147 509M234 448A5 3 -25 1 0 243 444A5 3 -25 1 0 234 448M184 482A6 3 -18 1 0 196 478A6 3 -18 1 0 184 482M91 417A6 3 5 1 0 102 418A6 3 5 1 0 91 417M205 284A3 1 20 1 0 210 286A3 1 20 1 0 205 284M197 548A4 3 -13 1 0 206 546A4 3 -13 1 0 197 548M192 269A4 2 17 1 0 200 272A4 2 17 1 0 192 269M40 345A6 3 -15 1 0 53 342A6 3 -15 1 0 40 345M88 453A4 2 7 1 0 96 454A4 2 7 1 0 88 453M157 219A6 3 -45 1 0 165 210A6 3 -45 1 0 157 219M219 341A3 2 17 1 0 225 343A3 2 17 1 0 219 341M-7 552A3 2 9 1 0 -1 554A3 2 9 1 0 -7 552M264 302A6 3 -44 1 0 273 293A6 3 -44 1 0 264 302M16 314A4 2 -18 1 0 24 312A4 2 -18 1 0 16 314M151 209A6 3 -59 1 0 157 199A6 3 -59 1 0 151 209M236 532A6 3 9 1 0 247 534A6 3 9 1 0 236 532M127 347A5 4 -19 1 0 137 344A5 4 -19 1 0 127 347M262 407A3 2 -27 1 0 267 405A3 2 -27 1 0 262 407M149 410A3 2 -25 1 0 155 407A3 2 -25 1 0 149 410M203 237A3 2 -59 1 0 207 231A3 2 -59 1 0 203 237M173 366A5 3 -48 1 0 180 358A5 3 -48 1 0 173 366M283 135A4 3 12 1 0 291 137A4 3 12 1 0 283 135M131 430A3 2 -64 1 0 134 426A3 2 -64 1 0 131 430M40 362A6 4 -35 1 0 50 355A6 4 -35 1 0 40 362"/><path fill="#9a4e1a" d="M230 495A6 3 -39 1 0 239 487A6 3 -39 1 0 230 495M273 275A5 4 -55 1 0 279 267A5 4 -55 1 0 273 275M176 199A3 1 -19 1 0 180 197A3 1 -19 1 0 176 199M152 192A5 3 -38 1 0 159 187A5 3 -38 1 0 152 192M180 25A4 2 -65 1 0 184 17A4 2 -65 1 0 180 25M138 204A6 3 -43 1 0 147 195A6 3 -43 1 0 138 204M62 569A5 3 -11 1 0 73 567A5 3 -11 1 0 62 569M173 491A3 2 -26 1 0 177 488A3 2 -26 1 0 173 491M-1 303A3 2 -55 1 0 3 297A3 2 -55 1 0 -1 303M222 249A4 2 -49 1 0 227 243A4 2 -49 1 0 222 249M120 248A6 4 17 1 0 132 252A6 4 17 1 0 120 248M191 548A5 4 -4 1 0 202 547A5 4 -4 1 0 191 548M116 245A6 3 -45 1 0 125 237A6 3 -45 1 0 116 245M259 188A3 2 -20 1 0 265 185A3 2 -20 1 0 259 188M289 443A6 4 -69 1 0 294 431A6 4 -69 1 0 289 443M266 216A4 3 1 1 0 275 216A4 3 1 1 0 266 216M220 286A6 4 -14 1 0 233 283A6 4 -14 1 0 220 286M170 324A4 2 -29 1 0 177 320A4 2 -29 1 0 170 324M139 498A5 2 -5 1 0 149 497A5 2 -5 1 0 139 498M123 329A5 3 -5 1 0 134 328A5 3 -5 1 0 123 329M108 368A4 2 -11 1 0 115 367A4 2 -11 1 0 108 368M13 440A5 3 -14 1 0 23 438A5 3 -14 1 0 13 440M223 112A6 3 -61 1 0 229 101A6 3 -61 1 0 223 112M238 280A6 4 14 1 0 250 284A6 4 14 1 0 238 280M22 396A6 4 -1 1 0 35 395A6 4 -1 1 0 22 396M169 161A3 2 -59 1 0 172 155A3 2 -59 1 0 169 161M94 272A6 3 -20 1 0 105 268A6 3 -20 1 0 94 272M52 443A5 2 -31 1 0 60 438A5 2 -31 1 0 52 443M193 88A6 4 13 1 0 204 91A6 4 13 1 0 193 88M186 310A6 3 -26 1 0 196 304A6 3 -26 1 0 186 310M284 152A6 3 2 1 0 296 153A6 3 2 1 0 284 152M263 504A4 2 11 1 0 270 505A4 2 11 1 0 263 504M291 453A4 3 -20 1 0 299 450A4 3 -20 1 0 291 453M206 293A5 2 -62 1 0 211 284A5 2 -62 1 0 206 293M179 235A4 2 -43 1 0 184 231A4 2 -43 1 0 179 235M49 183A6 3 -49 1 0 57 174A6 3 -49 1 0 49 183M61 573A6 5 -29 1 0 72 567A6 5 -29 1 0 61 573M205 312A3 1 -16 1 0 210 311A3 1 -16 1 0 205 312M105 482A4 2 -69 1 0 108 476A4 2 -69 1 0 105 482M224 278A5 3 -66 1 0 228 269A5 3 -66 1 0 224 278M52 63A6 5 -66 1 0 57 52A6 5 -66 1 0 52 63M272 263A3 2 -62 1 0 274 258A3 2 -62 1 0 272 263M226 382A6 3 10 1 0 237 384A6 3 10 1 0 226 382M280 446A3 2 -11 1 0 286 445A3 2 -11 1 0 280 446M239 533A5 4 -40 1 0 247 526A5 4 -40 1 0 239 533M30 304A6 4 -14 1 0 41 301A6 4 -14 1 0 30 304M186 196A3 2 -65 1 0 188 190A3 2 -65 1 0 186 196M264 271A3 2 -64 1 0 267 266A3 2 -64 1 0 264 271M226 321A6 3 15 1 0 237 323A6 3 15 1 0 226 321M26 225A5 3 -53 1 0 32 217A5 3 -53 1 0 26 225M30 470A4 2 -12 1 0 37 468A4 2 -12 1 0 30 470M180 198A6 3 -38 1 0 190 191A6 3 -38 1 0 180 198M33 280A6 4 -40 1 0 42 273A6 4 -40 1 0 33 280M186 572A6 4 -25 1 0 196 568A6 4 -25 1 0 186 572M262 200A4 2 3 1 0 269 200A4 2 3 1 0 262 200M223 341A3 1 -20 1 0 228 339A3 1 -20 1 0 223 341M214 295A5 3 -38 1 0 222 289A5 3 -38 1 0 214 295M81 389A4 3 14 1 0 90 391A4 3 14 1 0 81 389M41 403A6 4 8 1 0 52 405A6 4 8 1 0 41 403M103 313A4 3 -16 1 0 111 311A4 3 -16 1 0 103 313M65 303A6 4 -37 1 0 74 296A6 4 -37 1 0 65 303M235 1A5 3 -8 1 0 245 -1A5 3 -8 1 0 235 1M216 62A3 2 -19 1 0 222 60A3 2 -19 1 0 216 62M185 449A3 2 -70 1 0 187 443A3 2 -70 1 0 185 449M275 433A5 3 -65 1 0 279 424A5 3 -65 1 0 275 433M269 486A3 2 -69 1 0 271 481A3 2 -69 1 0 269 486M47 484A6 4 -22 1 0 59 479A6 4 -22 1 0 47 484M132 302A5 2 -12 1 0 141 300A5 2 -12 1 0 132 302M256 385A3 2 14 1 0 262 387A3 2 14 1 0 256 385M123 294A3 2 -22 1 0 128 292A3 2 -22 1 0 123 294M69 56A5 4 -8 1 0 79 55A5 4 -8 1 0 69 56M156 290A5 2 -7 1 0 165 289A5 2 -7 1 0 156 290M219 177A4 2 -60 1 0 223 170A4 2 -60 1 0 219 177M205 73A6 4 17 1 0 216 76A6 4 17 1 0 205 73M247 356A5 3 -52 1 0 253 348A5 3 -52 1 0 247 356M227 461A4 2 8 1 0 235 462A4 2 8 1 0 227 461M126 404A5 4 7 1 0 136 406A5 4 7 1 0 126 404M290 459A5 3 -34 1 0 298 453A5 3 -34 1 0 290 459M181 418A4 2 -6 1 0 188 417A4 2 -6 1 0 181 418M268 425A5 3 -54 1 0 275 416A5 3 -54 1 0 268 425M150 234A5 3 10 1 0 160 235A5 3 10 1 0 150 234M2 382A3 2 -16 1 0 9 380A3 2 -16 1 0 2 382M230 288A4 3 10 1 0 239 290A4 3 10 1 0 230 288M149 203A6 3 -37 1 0 158 196A6 3 -37 1 0 149 203M172 472A3 2 -10 1 0 178 471A3 2 -10 1 0 172 472M281 451A4 3 -63 1 0 285 443A4 3 -63 1 0 281 451M-2 487A6 4 -16 1 0 9 484A6 4 -16 1 0 -2 487M251 349A6 4 -38 1 0 259 342A6 4 -38 1 0 251 349M82 475A3 2 -16 1 0 89 474A3 2 -16 1 0 82 475M86 567A4 2 -8 1 0 94 566A4 2 -8 1 0 86 567M158 484A6 3 -26 1 0 168 479A6 3 -26 1 0 158 484M216 484A5 3 -38 1 0 223 478A5 3 -38 1 0 216 484M72 293A4 2 9 1 0 79 294A4 2 9 1 0 72 293M288 284A5 3 -68 1 0 292 276A5 3 -68 1 0 288 284M213 224A6 3 -4 1 0 224 224A6 3 -4 1 0 213 224M191 507A5 3 -40 1 0 199 501A5 3 -40 1 0 191 507M276 247A3 2 -11 1 0 283 246A3 2 -11 1 0 276 247M277 415A3 2 -47 1 0 282 410A3 2 -47 1 0 277 415M247 323A6 4 4 1 0 260 324A6 4 4 1 0 247 323M100 425A3 2 -47 1 0 105 420A3 2 -47 1 0 100 425M167 290A3 2 14 1 0 173 291A3 2 14 1 0 167 290M166 401A4 3 -51 1 0 171 395A4 3 -51 1 0 166 401M166 398A4 3 -29 1 0 174 393A4 3 -29 1 0 166 398M162 106A6 4 -59 1 0 168 96A6 4 -59 1 0 162 106M87 272A3 2 -69 1 0 89 266A3 2 -69 1 0 87 272M95 439A5 3 -27 1 0 104 434A5 3 -27 1 0 95 439M267 192A3 2 -46 1 0 271 188A3 2 -46 1 0 267 192M22 344A3 1 12 1 0 27 346A3 1 12 1 0 22 344M75 290A6 3 -37 1 0 84 283A6 3 -37 1 0 75 290M62 286A3 1 -59 1 0 65 281A3 1 -59 1 0 62 286M206 101A5 3 14 1 0 216 103A5 3 14 1 0 206 101M23 333A3 2 -50 1 0 27 328A3 2 -50 1 0 23 333M221 338A5 3 -5 1 0 230 337A5 3 -5 1 0 221 338M108 390A5 2 -32 1 0 116 385A5 2 -32 1 0 108 390M264 6A6 4 8 1 0 277 7A6 4 8 1 0 264 6M120 216A6 4 9 1 0 131 217A6 4 9 1 0 120 216M194 425A5 3 -63 1 0 199 416A5 3 -63 1 0 194 425M290 518A5 3 -44 1 0 297 511A5 3 -44 1 0 290 518M244 508A6 4 -37 1 0 253 500A6 4 -37 1 0 244 508M206 368A4 3 -17 1 0 214 365A4 3 -17 1 0 206 368M192 260A5 3 -30 1 0 201 255A5 3 -30 1 0 192 260M205 129A5 3 7 1 0 216 130A5 3 7 1 0 205 129M222 203A4 2 -55 1 0 227 196A4 2 -55 1 0 222 203M165 385A6 5 -23 1 0 177 379A6 5 -23 1 0 165 385M206 427A3 2 -1 1 0 213 427A3 2 -1 1 0 206 427M249 465A6 4 -25 1 0 260 459A6 4 -25 1 0 249 465M179 489A6 3 -62 1 0 184 479A6 3 -62 1 0 179 489M100 459A3 2 18 1 0 107 461A3 2 18 1 0 100 459M107 476A4 2 -68 1 0 110 469A4 2 -68 1 0 107 476M191 281A4 3 -63 1 0 194 274A4 3 -63 1 0 191 281M123 463A5 3 -67 1 0 127 454A5 3 -67 1 0 123 463M205 59A5 3 4 1 0 216 60A5 3 4 1 0 205 59M215 285A5 2 -56 1 0 220 277A5 2 -56 1 0 215 285M262 165A3 1 -28 1 0 267 162A3 1 -28 1 0 262 165M47 490A6 3 -9 1 0 58 488A6 3 -9 1 0 47 490M25 242A3 1 10 1 0 31 243A3 1 10 1 0 25 242M-2 499A3 2 -52 1 0 1 495A3 2 -52 1 0 -2 499M271 313A5 3 1 1 0 280 314A5 3 1 1 0 271 313M217 476A4 2 -54 1 0 222 470A4 2 -54 1 0 217 476M48 409A6 3 15 1 0 59 413A6 3 15 1 0 48 409M178 467A4 3 -10 1 0 187 466A4 3 -10 1 0 178 467M47 314A3 2 3 1 0 53 314A3 2 3 1 0 47 314M192 277A4 2 1 1 0 200 277A4 2 1 1 0 192 277M141 482A4 3 -50 1 0 146 477A4 3 -50 1 0 141 482M174 453A4 2 10 1 0 181 455A4 2 10 1 0 174 453M153 156A3 2 -53 1 0 157 151A3 2 -53 1 0 153 156M219 85A3 2 -67 1 0 221 79A3 2 -67 1 0 219 85M220 410A5 3 -46 1 0 226 403A5 3 -46 1 0 220 410M285 212A6 3 -67 1 0 289 202A6 3 -67 1 0 285 212M261 486A4 2 -59 1 0 265 479A4 2 -59 1 0 261 486M226 268A3 2 -6 1 0 232 267A3 2 -6 1 0 226 268M115 450A6 3 -56 1 0 122 440A6 3 -56 1 0 115 450M100 439A5 3 11 1 0 110 441A5 3 11 1 0 100 439M243 562A6 3 -63 1 0 249 551A6 3 -63 1 0 243 562M164 371A6 4 -30 1 0 176 365A6 4 -30 1 0 164 371M266 512A3 2 -23 1 0 271 509A3 2 -23 1 0 266 512M193 360A3 1 -31 1 0 198 357A3 1 -31 1 0 193 360M142 403A4 3 -9 1 0 150 402A4 3 -9 1 0 142 403M261 242A6 3 -39 1 0 270 235A6 3 -39 1 0 261 242M10 486A6 4 -57 1 0 17 476A6 4 -57 1 0 10 486M9 486A4 2 -69 1 0 11 479A4 2 -69 1 0 9 486M84 378A6 3 -14 1 0 95 375A6 3 -14 1 0 84 378M243 403A5 3 15 1 0 254 406A5 3 15 1 0 243 403M34 432A6 4 -42 1 0 43 424A6 4 -42 1 0 34 432M150 274A5 4 -65 1 0 155 264A5 4 -65 1 0 150 274M-2 464A3 1 13 1 0 4 465A3 1 13 1 0 -2 464M229 546A6 3 -58 1 0 235 537A6 3 -58 1 0 229 546M127 400A4 3 -18 1 0 135 397A4 3 -18 1 0 127 400M239 65A6 4 -8 1 0 252 63A6 4 -8 1 0 239 65M257 328A6 3 -55 1 0 265 318A6 3 -55 1 0 257 328M37 511A3 2 9 1 0 44 512A3 2 9 1 0 37 511M269 492A6 3 5 1 0 280 493A6 3 5 1 0 269 492M269 132A3 2 -19 1 0 275 130A3 2 -19 1 0 269 132"/><path fill="#c09a32" d="M279 91A4 2 9 1 0 287 92A4 2 9 1 0 279 91M4 425A4 2 -57 1 0 7 420A4 2 -57 1 0 4 425M193 266A5 4 -39 1 0 201 259A5 4 -39 1 0 193 266M92 330A6 3 3 1 0 103 331A6 3 3 1 0 92 330M195 270A3 2 -44 1 0 200 266A3 2 -44 1 0 195 270M123 366A6 3 -7 1 0 136 364A6 3 -7 1 0 123 366M50 460A5 3 -16 1 0 58 458A5 3 -16 1 0 50 460M114 174A4 3 -41 1 0 120 169A4 3 -41 1 0 114 174M114 264A4 3 -21 1 0 121 260A4 3 -21 1 0 114 264M132 255A5 3 -44 1 0 139 248A5 3 -44 1 0 132 255M256 76A4 3 -58 1 0 260 69A4 3 -58 1 0 256 76M165 124A5 3 2 1 0 175 125A5 3 2 1 0 165 124M243 427A4 2 -41 1 0 249 422A4 2 -41 1 0 243 427M266 542A4 3 -22 1 0 273 539A4 3 -22 1 0 266 542M148 433A3 2 -24 1 0 155 430A3 2 -24 1 0 148 433M87 441A4 2 -44 1 0 93 436A4 2 -44 1 0 87 441M105 84A3 2 -69 1 0 107 78A3 2 -69 1 0 105 84M1 395A4 2 -68 1 0 4 389A4 2 -68 1 0 1 395M158 541A6 3 -23 1 0 169 537A6 3 -23 1 0 158 541M218 438A3 2 -51 1 0 222 434A3 2 -51 1 0 218 438M144 284A3 2 -37 1 0 149 280A3 2 -37 1 0 144 284M173 287A5 3 -46 1 0 180 280A5 3 -46 1 0 173 287M30 417A5 4 -68 1 0 34 407A5 4 -68 1 0 30 417M284 100A5 3 -27 1 0 293 95A5 3 -27 1 0 284 100M191 498A3 2 -55 1 0 195 492A3 2 -55 1 0 191 498M271 487A5 4 -15 1 0 281 484A5 4 -15 1 0 271 487M247 524A5 2 15 1 0 256 527A5 2 15 1 0 247 524M247 463A3 2 -58 1 0 250 458A3 2 -58 1 0 247 463M15 362A4 3 5 1 0 22 363A4 3 5 1 0 15 362M252 53A3 2 -23 1 0 258 51A3 2 -23 1 0 252 53M49 418A4 2 -8 1 0 56 417A4 2 -8 1 0 49 418M218 519A4 2 -65 1 0 221 512A4 2 -65 1 0 218 519M228 507A6 3 12 1 0 240 509A6 3 12 1 0 228 507M19 381A4 2 -9 1 0 26 380A4 2 -9 1 0 19 381M162 240A4 2 -38 1 0 169 235A4 2 -38 1 0 162 240M21 14A5 3 -14 1 0 32 11A5 3 -14 1 0 21 14M282 198A6 3 -63 1 0 287 187A6 3 -63 1 0 282 198M240 152A5 3 -52 1 0 246 144A5 3 -52 1 0 240 152M80 410A5 3 -19 1 0 89 407A5 3 -19 1 0 80 410M145 230A6 3 -14 1 0 156 227A6 3 -14 1 0 145 230M271 543A3 2 -70 1 0 272 538A3 2 -70 1 0 271 543M25 565A4 2 -55 1 0 29 559A4 2 -55 1 0 25 565M190 69A4 2 -7 1 0 198 68A4 2 -7 1 0 190 69M163 369A3 2 -68 1 0 165 363A3 2 -68 1 0 163 369M257 247A5 3 -31 1 0 265 242A5 3 -31 1 0 257 247M222 119A3 2 -63 1 0 225 115A3 2 -63 1 0 222 119M34 420A4 3 11 1 0 42 421A4 3 11 1 0 34 420M125 563A5 3 -25 1 0 134 558A5 3 -25 1 0 125 563M287 259A5 3 -10 1 0 296 257A5 3 -10 1 0 287 259M282 488A3 2 -34 1 0 287 484A3 2 -34 1 0 282 488M216 257A4 2 -10 1 0 224 255A4 2 -10 1 0 216 257M102 424A5 3 19 1 0 112 427A5 3 19 1 0 102 424M270 571A3 2 -31 1 0 274 568A3 2 -31 1 0 270 571M286 516A5 3 -37 1 0 293 510A5 3 -37 1 0 286 516M184 281A4 2 -43 1 0 189 276A4 2 -43 1 0 184 281M269 525A3 1 17 1 0 274 527A3 1 17 1 0 269 525M170 333A3 1 -22 1 0 175 331A3 1 -22 1 0 170 333M100 420A4 2 17 1 0 108 422A4 2 17 1 0 100 420M285 46A3 2 -12 1 0 291 45A3 2 -12 1 0 285 46M168 178A3 2 -36 1 0 172 176A3 2 -36 1 0 168 178M183 548A3 2 -9 1 0 189 547A3 2 -9 1 0 183 548M155 293A5 2 -33 1 0 162 288A5 2 -33 1 0 155 293M169 526A4 2 -11 1 0 176 524A4 2 -11 1 0 169 526M94 234A6 3 -48 1 0 101 226A6 3 -48 1 0 94 234M187 173A6 3 -29 1 0 197 168A6 3 -29 1 0 187 173M189 292A6 3 -60 1 0 195 282A6 3 -60 1 0 189 292M143 571A5 2 -11 1 0 153 570A5 2 -11 1 0 143 571M97 260A6 4 16 1 0 109 263A6 4 16 1 0 97 260M77 374A5 4 -41 1 0 85 367A5 4 -41 1 0 77 374M61 441A5 4 -28 1 0 70 436A5 4 -28 1 0 61 441M218 67A5 2 -68 1 0 221 58A5 2 -68 1 0 218 67M156 293A5 4 -45 1 0 163 286A5 4 -45 1 0 156 293M250 271A3 2 -14 1 0 256 270A3 2 -14 1 0 250 271M176 164A6 3 -52 1 0 184 153A6 3 -52 1 0 176 164M197 432A3 2 -8 1 0 203 431A3 2 -8 1 0 197 432M187 201A6 4 -15 1 0 199 198A6 4 -15 1 0 187 201M124 286A4 2 13 1 0 133 288A4 2 13 1 0 124 286M28 218A6 5 -34 1 0 39 210A6 5 -34 1 0 28 218M270 372A4 3 -23 1 0 278 368A4 3 -23 1 0 270 372M149 457A3 1 -23 1 0 154 455A3 1 -23 1 0 149 457M50 142A3 2 13 1 0 56 143A3 2 13 1 0 50 142M252 211A3 2 -68 1 0 254 205A3 2 -68 1 0 252 211M62 483A5 4 -31 1 0 71 477A5 4 -31 1 0 62 483M241 286A6 3 -7 1 0 253 285A6 3 -7 1 0 241 286M255 327A3 2 9 1 0 262 328A3 2 9 1 0 255 327M168 515A3 1 7 1 0 173 516A3 1 7 1 0 168 515M17 479A3 1 -51 1 0 21 474A3 1 -51 1 0 17 479M249 399A4 3 16 1 0 256 401A4 3 16 1 0 249 399M285 380A3 2 -57 1 0 288 375A3 2 -57 1 0 285 380M61 524A4 2 14 1 0 68 525A4 2 14 1 0 61 524M178 212A4 2 -37 1 0 184 207A4 2 -37 1 0 178 212M56 428A4 2 -17 1 0 64 426A4 2 -17 1 0 56 428M47 293A6 4 -12 1 0 59 291A6 4 -12 1 0 47 293M264 151A4 3 -68 1 0 268 143A4 3 -68 1 0 264 151M62 381A5 3 -58 1 0 67 372A5 3 -58 1 0 62 381M192 294A3 2 17 1 0 198 296A3 2 17 1 0 192 294M162 532A6 3 1 1 0 174 532A6 3 1 1 0 162 532M284 481A5 3 -9 1 0 294 479A5 3 -9 1 0 284 481M207 506A4 2 -15 1 0 215 504A4 2 -15 1 0 207 506M62 418A4 2 -61 1 0 66 411A4 2 -61 1 0 62 418M83 547A5 3 -52 1 0 89 539A5 3 -52 1 0 83 547M51 483A6 5 -45 1 0 60 474A6 5 -45 1 0 51 483M179 564A5 3 -16 1 0 188 562A5 3 -16 1 0 179 564M208 71A5 2 -11 1 0 217 70A5 2 -11 1 0 208 71M170 246A3 2 -0 1 0 176 246A3 2 -0 1 0 170 246M257 343A5 3 3 1 0 267 344A5 3 3 1 0 257 343M245 149A4 3 -70 1 0 248 141A4 3 -70 1 0 245 149M258 36A6 4 0 1 0 270 36A6 4 0 1 0 258 36M95 199A6 4 -5 1 0 107 197A6 4 -5 1 0 95 199M249 241A5 2 -23 1 0 257 238A5 2 -23 1 0 249 241M158 473A6 3 -62 1 0 163 463A6 3 -62 1 0 158 473M180 3A6 3 14 1 0 192 6A6 3 14 1 0 180 3M150 197A6 3 -50 1 0 158 187A6 3 -50 1 0 150 197M207 431A5 3 -65 1 0 211 422A5 3 -65 1 0 207 431M171 406A6 4 -54 1 0 178 397A6 4 -54 1 0 171 406M161 170A3 2 -29 1 0 165 168A3 2 -29 1 0 161 170M291 430A3 2 -32 1 0 295 427A3 2 -32 1 0 291 430M94 248A5 2 3 1 0 104 249A5 2 3 1 0 94 248M59 385A6 3 -2 1 0 71 384A6 3 -2 1 0 59 385M84 399A3 2 -43 1 0 89 394A3 2 -43 1 0 84 399M218 123A6 4 -10 1 0 230 121A6 4 -10 1 0 218 123M26 360A6 4 -56 1 0 34 349A6 4 -56 1 0 26 360M70 137A3 2 -7 1 0 76 136A3 2 -7 1 0 70 137M231 368A3 2 -19 1 0 237 366A3 2 -19 1 0 231 368M95 25A3 2 -34 1 0 100 21A3 2 -34 1 0 95 25M209 527A5 3 8 1 0 219 528A5 3 8 1 0 209 527M259 508A6 4 -16 1 0 270 504A6 4 -16 1 0 259 508M261 388A5 2 -36 1 0 268 383A5 2 -36 1 0 261 388M168 486A6 3 -18 1 0 180 483A6 3 -18 1 0 168 486M279 409A3 2 -48 1 0 284 404A3 2 -48 1 0 279 409M184 205A5 3 -12 1 0 194 203A5 3 -12 1 0 184 205M46 359A6 3 -59 1 0 52 349A6 3 -59 1 0 46 359M202 192A4 2 13 1 0 209 194A4 2 13 1 0 202 192M75 111A6 3 -5 1 0 87 110A6 3 -5 1 0 75 111M287 238A4 2 -16 1 0 295 236A4 2 -16 1 0 287 238M127 315A3 2 -26 1 0 132 313A3 2 -26 1 0 127 315M189 510A5 3 -30 1 0 198 505A5 3 -30 1 0 189 510M237 542A3 2 -25 1 0 243 539A3 2 -25 1 0 237 542M271 346A5 2 -27 1 0 279 342A5 2 -27 1 0 271 346M170 495A3 2 -19 1 0 175 494A3 2 -19 1 0 170 495M105 222A5 2 -11 1 0 116 220A5 2 -11 1 0 105 222M65 292A3 2 -63 1 0 67 288A3 2 -63 1 0 65 292M110 490A4 2 2 1 0 118 490A4 2 2 1 0 110 490M260 412A5 3 -30 1 0 268 407A5 3 -30 1 0 260 412M97 233A4 3 -4 1 0 105 232A4 3 -4 1 0 97 233M264 12A6 3 -58 1 0 271 2A6 3 -58 1 0 264 12M89 374A6 4 -0 1 0 101 374A6 4 -0 1 0 89 374M49 196A6 5 -69 1 0 54 184A6 5 -69 1 0 49 196M12 148A6 4 8 1 0 24 150A6 4 8 1 0 12 148M183 531A5 4 7 1 0 193 532A5 4 7 1 0 183 531M238 568A4 3 -43 1 0 243 564A4 3 -43 1 0 238 568M287 148A5 2 -56 1 0 292 139A5 2 -56 1 0 287 148M189 340A4 3 3 1 0 197 341A4 3 3 1 0 189 340M162 351A6 4 -33 1 0 173 344A6 4 -33 1 0 162 351M165 510A3 2 -52 1 0 168 506A3 2 -52 1 0 165 510M149 469A3 2 -22 1 0 154 467A3 2 -22 1 0 149 469M283 224A3 2 -19 1 0 289 222A3 2 -19 1 0 283 224M115 506A5 3 -38 1 0 123 500A5 3 -38 1 0 115 506M170 568A3 1 -10 1 0 175 567A3 1 -10 1 0 170 568M25 457A6 3 -2 1 0 37 457A6 3 -2 1 0 25 457M165 166A5 2 2 1 0 175 166A5 2 2 1 0 165 166M248 369A6 3 -34 1 0 258 362A6 3 -34 1 0 248 369M209 303A6 3 -55 1 0 215 293A6 3 -55 1 0 209 303M252 162A4 2 -51 1 0 257 155A4 2 -51 1 0 252 162M234 433A6 3 -26 1 0 244 428A6 3 -26 1 0 234 433M169 464A3 2 -52 1 0 173 460A3 2 -52 1 0 169 464M45 464A5 3 -63 1 0 49 455A5 3 -63 1 0 45 464M118 246A3 2 -50 1 0 122 242A3 2 -50 1 0 118 246M13 459A5 3 -49 1 0 19 452A5 3 -49 1 0 13 459M180 319A6 4 -11 1 0 191 317A6 4 -11 1 0 180 319M249 441A6 4 19 1 0 261 445A6 4 19 1 0 249 441M286 194A4 2 -32 1 0 292 190A4 2 -32 1 0 286 194M192 31A3 2 -20 1 0 198 29A3 2 -20 1 0 192 31M198 370A4 3 -1 1 0 207 370A4 3 -1 1 0 198 370M242 381A6 4 -65 1 0 248 370A6 4 -65 1 0 242 381M196 310A3 2 -34 1 0 202 306A3 2 -34 1 0 196 310M235 45A6 4 -68 1 0 240 33A6 4 -68 1 0 235 45M153 554A5 3 -63 1 0 158 545A5 3 -63 1 0 153 554M33 470A6 3 17 1 0 46 474A6 3 17 1 0 33 470M105 304A6 3 -41 1 0 115 295A6 3 -41 1 0 105 304M231 22A3 2 -45 1 0 235 18A3 2 -45 1 0 231 22M241 170A5 4 -43 1 0 248 163A5 4 -43 1 0 241 170M82 409A5 3 9 1 0 92 411A5 3 9 1 0 82 409M199 445A5 3 -65 1 0 203 437A5 3 -65 1 0 199 445M258 79A6 4 -58 1 0 264 70A6 4 -58 1 0 258 79M256 126A5 3 -7 1 0 267 125A5 3 -7 1 0 256 126M99 512A4 3 -57 1 0 104 505A4 3 -57 1 0 99 512M151 498A4 2 -4 1 0 158 497A4 2 -4 1 0 151 498M127 292A6 3 -53 1 0 135 282A6 3 -53 1 0 127 292M-6 301A6 3 -65 1 0 -2 291A6 3 -65 1 0 -6 301M30 361A5 3 -27 1 0 39 356A5 3 -27 1 0 30 361M190 458A3 1 -43 1 0 194 454A3 1 -43 1 0 190 458"/><path d="M277 184L249 137M171 365L145 335M244 186L227 163M116 418L95 386M241 367L206 354M103 228L59 190M154 344L115 314M65 387L32 374M128 340L113 301M86 563L69 537M235 327L205 307M117 508L92 487M171 514L140 485M262 207L246 181M291 335L274 305M280 204L243 168M100 329L80 299M96 485L45 464M134 399L118 373M132 408L114 397M177 395L150 382M270 543L255 525M199 225L182 210M122 251L75 225M245 247L224 206M250 562L239 543M134 460L111 446M80 271L48 229M227 383L192 362M262 270L238 252M84 364L46 334M92 281L74 253M216 347L196 313M262 529L241 497M251 439L231 430M243 230L224 213M189 411L164 363M243 525L216 511M121 437L84 404M259 358L210 324" stroke="#6e5a48" stroke-width="1.5" opacity="0.7"/><path d="M0 492L160 494M20 500L280 506M60 516L230 521" stroke="#9a6a2a" stroke-width="3" opacity="0.6"/><filter id="nz" x="0" y="0" width="100%" height="100%"><feTurbulence type="fractalNoise" baseFrequency="0.45" numOctaves="2" seed="3"/><feColorMatrix type="matrix" values="0 0 0 0 0  0 0 0 0 0  0 0 0 0 0  0 0 0 -1.6 1.05"/></filter><rect width="291" height="568" filter="url(#nz)" opacity="0.35"/></svg></div>
<div style="left:1516px;top:689px;width:402px;height:1px;background:#808080;"></div>
<div style="left:1516px;top:690px;width:402px;height:1px;background:#404040;"></div>
<div style="left:1624px;top:692px;width:291px;height:27px;background:linear-gradient(90deg,#b0b0b0,#c0c0c0);"></div>
<span class="t" style="left:1626px;top:733px;font-size:16px;line-height:16px;color:#000;">bjects</span>
<div style="left:1624px;top:755px;width:266px;height:1px;background:#808080;"></div>
<div style="left:1624px;top:756px;width:265px;height:1px;background:#404040;"></div>
<div style="left:1624px;top:757px;width:265px;height:20px;background:#fff;"></div>
<div style="left:1891px;top:755px;width:1px;height:20px;background:#ffffff;"></div>
<div style="left:1889px;top:757px;width:1px;height:18px;background:#d4d0c8;"></div>
<div style="left:1600px;top:843px;width:291px;height:180px;background:#fff;"></div>
<div style="left:1600px;top:843px;width:290px;height:1px;background:#808080;"></div>
<div style="left:1600px;top:843px;width:1px;height:179px;background:#808080;"></div>
<div style="left:1600px;top:1022px;width:291px;height:1px;background:#ffffff;"></div>
<div style="left:1890px;top:843px;width:1px;height:180px;background:#ffffff;"></div>
<div style="left:1601px;top:844px;width:288px;height:1px;background:#404040;"></div>
<div style="left:1601px;top:844px;width:1px;height:177px;background:#404040;"></div>
<div style="left:1601px;top:1021px;width:289px;height:1px;background:#d4d0c8;"></div>
<div style="left:1889px;top:844px;width:1px;height:178px;background:#d4d0c8;"></div>
<div style="left:1590px;top:845px;width:128px;height:24px;background:#d4d0c8;"></div>
<div style="left:1590px;top:845px;width:127px;height:1px;background:#ffffff;"></div>
<div style="left:1590px;top:845px;width:1px;height:23px;background:#ffffff;"></div>
<div style="left:1590px;top:868px;width:128px;height:1px;background:#404040;"></div>
<div style="left:1717px;top:845px;width:1px;height:24px;background:#404040;"></div>
<div style="left:1591px;top:846px;width:125px;height:1px;background:#d4d0c8;"></div>
<div style="left:1591px;top:846px;width:1px;height:21px;background:#d4d0c8;"></div>
<div style="left:1591px;top:867px;width:126px;height:1px;background:#808080;"></div>
<div style="left:1716px;top:846px;width:1px;height:22px;background:#808080;"></div>
<span class="t" style="left:1643px;top:850px;font-size:16px;line-height:16px;color:#000;">Type</span>
<div style="left:1718px;top:845px;width:28px;height:24px;background:#d4d0c8;"></div>
<div style="left:1718px;top:845px;width:27px;height:1px;background:#ffffff;"></div>
<div style="left:1718px;top:845px;width:1px;height:23px;background:#ffffff;"></div>
<div style="left:1718px;top:868px;width:28px;height:1px;background:#404040;"></div>
<div style="left:1745px;top:845px;width:1px;height:24px;background:#404040;"></div>
<div style="left:1719px;top:846px;width:25px;height:1px;background:#d4d0c8;"></div>
<div style="left:1719px;top:846px;width:1px;height:21px;background:#d4d0c8;"></div>
<div style="left:1719px;top:867px;width:26px;height:1px;background:#808080;"></div>
<div style="left:1744px;top:846px;width:1px;height:22px;background:#808080;"></div>
<span class="t" style="left:1723px;top:850px;font-size:16px;line-height:16px;color:#000;">O..</span>
<div style="left:1746px;top:845px;width:43px;height:24px;background:#d4d0c8;"></div>
<div style="left:1746px;top:845px;width:42px;height:1px;background:#ffffff;"></div>
<div style="left:1746px;top:845px;width:1px;height:23px;background:#ffffff;"></div>
<div style="left:1746px;top:868px;width:43px;height:1px;background:#404040;"></div>
<div style="left:1788px;top:845px;width:1px;height:24px;background:#404040;"></div>
<div style="left:1747px;top:846px;width:40px;height:1px;background:#d4d0c8;"></div>
<div style="left:1747px;top:846px;width:1px;height:21px;background:#d4d0c8;"></div>
<div style="left:1747px;top:867px;width:41px;height:1px;background:#808080;"></div>
<div style="left:1787px;top:846px;width:1px;height:22px;background:#808080;"></div>
<span class="t" style="left:1751px;top:850px;font-size:16px;line-height:16px;color:#000;">Lo...</span>
<div style="left:1789px;top:845px;width:28px;height:24px;background:#d4d0c8;"></div>
<div style="left:1789px;top:845px;width:27px;height:1px;background:#ffffff;"></div>
<div style="left:1789px;top:845px;width:1px;height:23px;background:#ffffff;"></div>
<div style="left:1789px;top:868px;width:28px;height:1px;background:#404040;"></div>
<div style="left:1816px;top:845px;width:1px;height:24px;background:#404040;"></div>
<div style="left:1790px;top:846px;width:25px;height:1px;background:#d4d0c8;"></div>
<div style="left:1790px;top:846px;width:1px;height:21px;background:#d4d0c8;"></div>
<div style="left:1790px;top:867px;width:26px;height:1px;background:#808080;"></div>
<div style="left:1815px;top:846px;width:1px;height:22px;background:#808080;"></div>
<span class="t" style="left:1795px;top:850px;font-size:16px;line-height:16px;color:#000;">L...</span>
<div style="left:1817px;top:845px;width:28px;height:24px;background:#d4d0c8;"></div>
<div style="left:1817px;top:845px;width:27px;height:1px;background:#ffffff;"></div>
<div style="left:1817px;top:845px;width:1px;height:23px;background:#ffffff;"></div>
<div style="left:1817px;top:868px;width:28px;height:1px;background:#404040;"></div>
<div style="left:1844px;top:845px;width:1px;height:24px;background:#404040;"></div>
<div style="left:1818px;top:846px;width:25px;height:1px;background:#d4d0c8;"></div>
<div style="left:1818px;top:846px;width:1px;height:21px;background:#d4d0c8;"></div>
<div style="left:1818px;top:867px;width:26px;height:1px;background:#808080;"></div>
<div style="left:1843px;top:846px;width:1px;height:22px;background:#808080;"></div>
<span class="t" style="left:1823px;top:850px;font-size:16px;line-height:16px;color:#000;">P..</span>
<div style="left:1845px;top:845px;width:22px;height:24px;background:#d4d0c8;"></div>
<div style="left:1845px;top:845px;width:21px;height:1px;background:#ffffff;"></div>
<div style="left:1845px;top:845px;width:1px;height:23px;background:#ffffff;"></div>
<div style="left:1845px;top:868px;width:22px;height:1px;background:#404040;"></div>
<div style="left:1866px;top:845px;width:1px;height:24px;background:#404040;"></div>
<div style="left:1846px;top:846px;width:19px;height:1px;background:#d4d0c8;"></div>
<div style="left:1846px;top:846px;width:1px;height:21px;background:#d4d0c8;"></div>
<div style="left:1846px;top:867px;width:20px;height:1px;background:#808080;"></div>
<div style="left:1865px;top:846px;width:1px;height:22px;background:#808080;"></div>
<span class="t" style="left:1851px;top:850px;font-size:16px;line-height:16px;color:#000;">I..</span>
<div style="left:1600px;top:890px;width:266px;height:1px;background:#d4d0c8;"></div>
<span class="t" style="left:1640px;top:874px;font-size:16px;line-height:16px;color:#000;">Static</span>
<div style="left:1797px;top:881px;width:11px;height:1px;background:#000;"></div>
<div style="left:1826px;top:881px;width:11px;height:1px;background:#000;"></div>
<div style="left:1600px;top:911px;width:266px;height:1px;background:#d4d0c8;"></div>
<span class="t" style="left:1629px;top:895px;font-size:16px;line-height:16px;color:#000;">Activator</span>
<div style="left:1797px;top:902px;width:11px;height:1px;background:#000;"></div>
<span class="t" style="left:1825px;top:895px;font-size:16px;line-height:16px;color:#000;">(...</span>
<div style="left:1600px;top:932px;width:266px;height:1px;background:#d4d0c8;"></div>
<span class="t" style="left:1640px;top:916px;font-size:16px;line-height:16px;color:#000;">Static</span>
<div style="left:1797px;top:923px;width:11px;height:1px;background:#000;"></div>
<div style="left:1826px;top:923px;width:11px;height:1px;background:#000;"></div>
<div style="left:1600px;top:953px;width:266px;height:1px;background:#d4d0c8;"></div>
<span class="t" style="left:1629px;top:937px;font-size:16px;line-height:16px;color:#000;">Furniture</span>
<div style="left:1797px;top:944px;width:11px;height:1px;background:#000;"></div>
<div style="left:1826px;top:944px;width:11px;height:1px;background:#000;"></div>
<div style="left:1600px;top:974px;width:266px;height:1px;background:#d4d0c8;"></div>
<span class="t" style="left:1640px;top:958px;font-size:16px;line-height:16px;color:#000;">Static</span>
<div style="left:1797px;top:965px;width:11px;height:1px;background:#000;"></div>
<div style="left:1826px;top:965px;width:11px;height:1px;background:#000;"></div>
<div style="left:1600px;top:995px;width:266px;height:1px;background:#d4d0c8;"></div>
<span class="t" style="left:1640px;top:979px;font-size:16px;line-height:16px;color:#000;">Static</span>
<div style="left:1797px;top:986px;width:11px;height:1px;background:#000;"></div>
<div style="left:1826px;top:986px;width:11px;height:1px;background:#000;"></div>
<div style="left:1718px;top:869px;width:1px;height:127px;background:#d4d0c8;"></div>
<div style="left:1746px;top:869px;width:1px;height:127px;background:#d4d0c8;"></div>
<div style="left:1789px;top:869px;width:1px;height:127px;background:#d4d0c8;"></div>
<div style="left:1817px;top:869px;width:1px;height:127px;background:#d4d0c8;"></div>
<div style="left:1845px;top:869px;width:1px;height:127px;background:#d4d0c8;"></div>
<div style="left:1867px;top:869px;width:23px;height:127px;background:repeating-conic-gradient(#fff 0 25%,#d4d0c8 0 50%) 0 0/2px 2px"></div>
<div style="left:1867px;top:845px;width:23px;height:24px;background:#d4d0c8;"></div>
<div style="left:1867px;top:845px;width:22px;height:1px;background:#d4d0c8;"></div>
<div style="left:1867px;top:845px;width:1px;height:23px;background:#d4d0c8;"></div>
<div style="left:1867px;top:868px;width:23px;height:1px;background:#404040;"></div>
<div style="left:1889px;top:845px;width:1px;height:24px;background:#404040;"></div>
<div style="left:1868px;top:846px;width:20px;height:1px;background:#ffffff;"></div>
<div style="left:1868px;top:846px;width:1px;height:21px;background:#ffffff;"></div>
<div style="left:1868px;top:867px;width:21px;height:1px;background:#808080;"></div>
<div style="left:1888px;top:846px;width:1px;height:22px;background:#808080;"></div>
<div style="left:1872.5px;top:854px;width:0;height:0;border-left:5.5px solid transparent;border-right:5.5px solid transparent;border-bottom:6px solid #000"></div>
<div style="left:1867px;top:960px;width:23px;height:11px;background:#d4d0c8;"></div>
<div style="left:1867px;top:960px;width:22px;height:1px;background:#d4d0c8;"></div>
<div style="left:1867px;top:960px;width:1px;height:10px;background:#d4d0c8;"></div>
<div style="left:1867px;top:970px;width:23px;height:1px;background:#404040;"></div>
<div style="left:1889px;top:960px;width:1px;height:11px;background:#404040;"></div>
<div style="left:1868px;top:961px;width:20px;height:1px;background:#ffffff;"></div>
<div style="left:1868px;top:961px;width:1px;height:8px;background:#ffffff;"></div>
<div style="left:1868px;top:969px;width:21px;height:1px;background:#808080;"></div>
<div style="left:1888px;top:961px;width:1px;height:9px;background:#808080;"></div>
<div style="left:1867px;top:973px;width:23px;height:23px;background:#d4d0c8;"></div>
<div style="left:1867px;top:973px;width:22px;height:1px;background:#d4d0c8;"></div>
<div style="left:1867px;top:973px;width:1px;height:22px;background:#d4d0c8;"></div>
<div style="left:1867px;top:995px;width:23px;height:1px;background:#404040;"></div>
<div style="left:1889px;top:973px;width:1px;height:23px;background:#404040;"></div>
<div style="left:1868px;top:974px;width:20px;height:1px;background:#ffffff;"></div>
<div style="left:1868px;top:974px;width:1px;height:20px;background:#ffffff;"></div>
<div style="left:1868px;top:994px;width:21px;height:1px;background:#808080;"></div>
<div style="left:1888px;top:974px;width:1px;height:21px;background:#808080;"></div>
<div style="left:1872.5px;top:981px;width:0;height:0;border-left:5.5px solid transparent;border-right:5.5px solid transparent;border-top:6px solid #000"></div>
<div style="left:1516px;top:996px;width:350px;height:23px;background:repeating-conic-gradient(#fff 0 25%,#d4d0c8 0 50%) 0 0/2px 2px"></div>
<div style="left:1516px;top:996px;width:295px;height:23px;background:#d4d0c8;"></div>
<div style="left:1516px;top:996px;width:294px;height:1px;background:#d4d0c8;"></div>
<div style="left:1516px;top:996px;width:1px;height:22px;background:#d4d0c8;"></div>
<div style="left:1516px;top:1018px;width:295px;height:1px;background:#404040;"></div>
<div style="left:1810px;top:996px;width:1px;height:23px;background:#404040;"></div>
<div style="left:1517px;top:997px;width:292px;height:1px;background:#ffffff;"></div>
<div style="left:1517px;top:997px;width:1px;height:20px;background:#ffffff;"></div>
<div style="left:1517px;top:1017px;width:293px;height:1px;background:#808080;"></div>
<div style="left:1809px;top:997px;width:1px;height:21px;background:#808080;"></div>
<div style="left:1843px;top:996px;width:23px;height:23px;background:#d4d0c8;"></div>
<div style="left:1843px;top:996px;width:22px;height:1px;background:#d4d0c8;"></div>
<div style="left:1843px;top:996px;width:1px;height:22px;background:#d4d0c8;"></div>
<div style="left:1843px;top:1018px;width:23px;height:1px;background:#404040;"></div>
<div style="left:1865px;top:996px;width:1px;height:23px;background:#404040;"></div>
<div style="left:1844px;top:997px;width:20px;height:1px;background:#ffffff;"></div>
<div style="left:1844px;top:997px;width:1px;height:20px;background:#ffffff;"></div>
<div style="left:1844px;top:1017px;width:21px;height:1px;background:#808080;"></div>
<div style="left:1864px;top:997px;width:1px;height:21px;background:#808080;"></div>
<div style="left:1852px;top:1001.5px;width:0;height:0;border-top:5.5px solid transparent;border-bottom:5.5px solid transparent;border-left:6px solid #000"></div>
<div style="left:1866px;top:996px;width:24px;height:24px;background:#d4d0c8;"></div>
<div style="left:1516px;top:1019px;width:404px;height:1px;background:#404040;"></div>
<div style="left:1516px;top:1020px;width:402px;height:1px;background:#ffffff;"></div>
<div style="left:1516px;top:1021px;width:402px;height:1px;background:#ffffff;"></div>
<div style="left:1516px;top:1051px;width:404px;height:1px;background:#404040;"></div>
<div style="left:1516px;top:1052px;width:404px;height:1px;background:#808080;"></div>
<div style="left:1516px;top:1079px;width:404px;height:1px;background:#ffffff;"></div>
<span class="t" style="left:33px;top:57px;font-size:16px;line-height:16px;color:#000;">ID</span>
<div style="left:64px;top:49px;width:684px;height:30px;background:#fff;"></div>
<div style="left:64px;top:49px;width:683px;height:1px;background:#808080;"></div>
<div style="left:64px;top:49px;width:1px;height:29px;background:#808080;"></div>
<div style="left:64px;top:78px;width:684px;height:1px;background:#ffffff;"></div>
<div style="left:747px;top:49px;width:1px;height:30px;background:#ffffff;"></div>
<div style="left:65px;top:50px;width:681px;height:1px;background:#404040;"></div>
<div style="left:65px;top:50px;width:1px;height:27px;background:#404040;"></div>
<div style="left:65px;top:77px;width:682px;height:1px;background:#d4d0c8;"></div>
<div style="left:746px;top:50px;width:1px;height:28px;background:#d4d0c8;"></div>
<span class="t" style="left:68px;top:55px;font-size:16px;line-height:16px;color:#000;">LBTH_DBTortureVictim2PackageDUPLICATE01</span>
<span class="t" style="left:30px;top:99px;font-size:16px;line-height:16px;color:#000;">Owner quest</span>
<div style="left:136px;top:89px;width:241px;height:28px;background:#fff;"></div>
<div style="left:136px;top:89px;width:240px;height:1px;background:#808080;"></div>
<div style="left:136px;top:89px;width:1px;height:27px;background:#808080;"></div>
<div style="left:136px;top:116px;width:241px;height:1px;background:#ffffff;"></div>
<div style="left:376px;top:89px;width:1px;height:28px;background:#ffffff;"></div>
<div style="left:137px;top:90px;width:238px;height:1px;background:#404040;"></div>
<div style="left:137px;top:90px;width:1px;height:25px;background:#404040;"></div>
<div style="left:137px;top:115px;width:239px;height:1px;background:#d4d0c8;"></div>
<div style="left:375px;top:90px;width:1px;height:26px;background:#d4d0c8;"></div>
<div style="left:351px;top:91px;width:24px;height:24px;background:#d4d0c8;"></div>
<div style="left:351px;top:91px;width:23px;height:1px;background:#d4d0c8;"></div>
<div style="left:351px;top:91px;width:1px;height:23px;background:#d4d0c8;"></div>
<div style="left:351px;top:114px;width:24px;height:1px;background:#404040;"></div>
<div style="left:374px;top:91px;width:1px;height:24px;background:#404040;"></div>
<div style="left:352px;top:92px;width:21px;height:1px;background:#ffffff;"></div>
<div style="left:352px;top:92px;width:1px;height:21px;background:#ffffff;"></div>
<div style="left:352px;top:113px;width:22px;height:1px;background:#808080;"></div>
<div style="left:373px;top:92px;width:1px;height:22px;background:#808080;"></div>
<div style="left:356.5px;top:101.0px;width:0;height:0;border-left:6.0px solid transparent;border-right:6.0px solid transparent;border-top:6px solid #000"></div>
<span class="t" style="left:145px;top:96px;font-size:16px;line-height:16px;color:#000;">NONE</span>
<span class="t" style="left:404px;top:99px;font-size:16px;line-height:16px;color:#000;">Combat Style</span>
<div style="left:509px;top:89px;width:240px;height:28px;background:#fff;"></div>
<div style="left:509px;top:89px;width:239px;height:1px;background:#808080;"></div>
<div style="left:509px;top:89px;width:1px;height:27px;background:#808080;"></div>
<div style="left:509px;top:116px;width:240px;height:1px;background:#ffffff;"></div>
<div style="left:748px;top:89px;width:1px;height:28px;background:#ffffff;"></div>
<div style="left:510px;top:90px;width:237px;height:1px;background:#404040;"></div>
<div style="left:510px;top:90px;width:1px;height:25px;background:#404040;"></div>
<div style="left:510px;top:115px;width:238px;height:1px;background:#d4d0c8;"></div>
<div style="left:747px;top:90px;width:1px;height:26px;background:#d4d0c8;"></div>
<div style="left:723px;top:91px;width:24px;height:24px;background:#d4d0c8;"></div>
<div style="left:723px;top:91px;width:23px;height:1px;background:#d4d0c8;"></div>
<div style="left:723px;top:91px;width:1px;height:23px;background:#d4d0c8;"></div>
<div style="left:723px;top:114px;width:24px;height:1px;background:#404040;"></div>
<div style="left:746px;top:91px;width:1px;height:24px;background:#404040;"></div>
<div style="left:724px;top:92px;width:21px;height:1px;background:#ffffff;"></div>
<div style="left:724px;top:92px;width:1px;height:21px;background:#ffffff;"></div>
<div style="left:724px;top:113px;width:22px;height:1px;background:#808080;"></div>
<div style="left:745px;top:92px;width:1px;height:22px;background:#808080;"></div>
<div style="left:728.5px;top:101.0px;width:0;height:0;border-left:6.0px solid transparent;border-right:6.0px solid transparent;border-top:6px solid #000"></div>
<span class="t" style="left:517px;top:96px;font-size:16px;line-height:16px;color:#000;">DEFAULT</span>
<span class="t" style="left:805px;top:57px;font-size:16px;line-height:16px;color:#000;">Package Type</span>
<div style="left:917px;top:46px;width:315px;height:28px;background:#fff;"></div>
<div style="left:917px;top:46px;width:314px;height:1px;background:#808080;"></div>
<div style="left:917px;top:46px;width:1px;height:27px;background:#808080;"></div>
<div style="left:917px;top:73px;width:315px;height:1px;background:#ffffff;"></div>
<div style="left:1231px;top:46px;width:1px;height:28px;background:#ffffff;"></div>
<div style="left:918px;top:47px;width:312px;height:1px;background:#404040;"></div>
<div style="left:918px;top:47px;width:1px;height:25px;background:#404040;"></div>
<div style="left:918px;top:72px;width:313px;height:1px;background:#d4d0c8;"></div>
<div style="left:1230px;top:47px;width:1px;height:26px;background:#d4d0c8;"></div>
<div style="left:1206px;top:48px;width:24px;height:24px;background:#d4d0c8;"></div>
<div style="left:1206px;top:48px;width:23px;height:1px;background:#d4d0c8;"></div>
<div style="left:1206px;top:48px;width:1px;height:23px;background:#d4d0c8;"></div>
<div style="left:1206px;top:71px;width:24px;height:1px;background:#404040;"></div>
<div style="left:1229px;top:48px;width:1px;height:24px;background:#404040;"></div>
<div style="left:1207px;top:49px;width:21px;height:1px;background:#ffffff;"></div>
<div style="left:1207px;top:49px;width:1px;height:21px;background:#ffffff;"></div>
<div style="left:1207px;top:70px;width:22px;height:1px;background:#808080;"></div>
<div style="left:1228px;top:49px;width:1px;height:22px;background:#808080;"></div>
<div style="left:1211.5px;top:58.0px;width:0;height:0;border-left:6.0px solid transparent;border-right:6.0px solid transparent;border-top:6px solid #000"></div>
<span class="t" style="left:922px;top:53px;font-size:16px;line-height:16px;color:#000;">Package</span>
<span class="t" style="left:782px;top:99px;font-size:16px;line-height:16px;color:#000;">Interrupt Override</span>
<div style="left:917px;top:89px;width:315px;height:28px;background:#fff;"></div>
<div style="left:917px;top:89px;width:314px;height:1px;background:#808080;"></div>
<div style="left:917px;top:89px;width:1px;height:27px;background:#808080;"></div>
<div style="left:917px;top:116px;width:315px;height:1px;background:#ffffff;"></div>
<div style="left:1231px;top:89px;width:1px;height:28px;background:#ffffff;"></div>
<div style="left:918px;top:90px;width:312px;height:1px;background:#404040;"></div>
<div style="left:918px;top:90px;width:1px;height:25px;background:#404040;"></div>
<div style="left:918px;top:115px;width:313px;height:1px;background:#d4d0c8;"></div>
<div style="left:1230px;top:90px;width:1px;height:26px;background:#d4d0c8;"></div>
<div style="left:1206px;top:91px;width:24px;height:24px;background:#d4d0c8;"></div>
<div style="left:1206px;top:91px;width:23px;height:1px;background:#d4d0c8;"></div>
<div style="left:1206px;top:91px;width:1px;height:23px;background:#d4d0c8;"></div>
<div style="left:1206px;top:114px;width:24px;height:1px;background:#404040;"></div>
<div style="left:1229px;top:91px;width:1px;height:24px;background:#404040;"></div>
<div style="left:1207px;top:92px;width:21px;height:1px;background:#ffffff;"></div>
<div style="left:1207px;top:92px;width:1px;height:21px;background:#ffffff;"></div>
<div style="left:1207px;top:113px;width:22px;height:1px;background:#808080;"></div>
<div style="left:1228px;top:92px;width:1px;height:22px;background:#808080;"></div>
<div style="left:1211.5px;top:101.0px;width:0;height:0;border-left:6.0px solid transparent;border-right:6.0px solid transparent;border-top:6px solid #000"></div>
<span class="t" style="left:921px;top:96px;font-size:16px;line-height:16px;color:#000;">&lt;NONE&gt;</span>
<div style="left:32px;top:176px;width:1169px;height:1px;background:#ffffff;"></div>
<div style="left:32px;top:176px;width:1px;height:904px;background:#ffffff;"></div>
<div style="left:1490px;top:176px;width:1px;height:904px;background:#808080;"></div>
<div style="left:1491px;top:176px;width:1px;height:904px;background:#404040;"></div>
<div style="left:110px;top:152px;width:58px;height:24px;background:#d4d0c8;"></div>
<div style="left:112px;top:151px;width:54px;height:1px;background:#ffffff;"></div>
<div style="left:110px;top:153px;width:1px;height:23px;background:#ffffff;"></div>
<div style="left:111px;top:152px;width:1px;height:1px;background:#ffffff;"></div>
<div style="left:166px;top:152px;width:1px;height:24px;background:#808080;"></div>
<div style="left:167px;top:153px;width:1px;height:23px;background:#404040;"></div>
<div style="left:166px;top:152px;width:1px;height:1px;background:#404040;"></div>
<span class="t" style="left:115px;top:157px;font-size:16px;line-height:16px;color:#000;">Flags</span>
<div style="left:168px;top:152px;width:87px;height:24px;background:#d4d0c8;"></div>
<div style="left:170px;top:151px;width:83px;height:1px;background:#ffffff;"></div>
<div style="left:168px;top:153px;width:1px;height:23px;background:#ffffff;"></div>
<div style="left:169px;top:152px;width:1px;height:1px;background:#ffffff;"></div>
<div style="left:253px;top:152px;width:1px;height:24px;background:#808080;"></div>
<div style="left:254px;top:153px;width:1px;height:23px;background:#404040;"></div>
<div style="left:253px;top:152px;width:1px;height:1px;background:#404040;"></div>
<span class="t" style="left:174px;top:157px;font-size:16px;line-height:16px;color:#000;">Conditions</span>
<div style="left:255px;top:152px;width:79px;height:24px;background:#d4d0c8;"></div>
<div style="left:257px;top:151px;width:75px;height:1px;background:#ffffff;"></div>
<div style="left:255px;top:153px;width:1px;height:23px;background:#ffffff;"></div>
<div style="left:256px;top:152px;width:1px;height:1px;background:#ffffff;"></div>
<div style="left:332px;top:152px;width:1px;height:24px;background:#808080;"></div>
<div style="left:333px;top:153px;width:1px;height:23px;background:#404040;"></div>
<div style="left:332px;top:152px;width:1px;height:1px;background:#404040;"></div>
<span class="t" style="left:260px;top:157px;font-size:16px;line-height:16px;color:#000;">Schedule</span>
<div style="left:334px;top:152px;width:146px;height:24px;background:#d4d0c8;"></div>
<div style="left:336px;top:151px;width:142px;height:1px;background:#ffffff;"></div>
<div style="left:334px;top:153px;width:1px;height:23px;background:#ffffff;"></div>
<div style="left:335px;top:152px;width:1px;height:1px;background:#ffffff;"></div>
<div style="left:478px;top:152px;width:1px;height:24px;background:#808080;"></div>
<div style="left:479px;top:153px;width:1px;height:23px;background:#404040;"></div>
<div style="left:478px;top:152px;width:1px;height:1px;background:#404040;"></div>
<span class="t" style="left:340px;top:157px;font-size:16px;line-height:16px;color:#000;">Begin/End/Change</span>
<div style="left:480px;top:152px;width:60px;height:24px;background:#d4d0c8;"></div>
<div style="left:482px;top:151px;width:56px;height:1px;background:#ffffff;"></div>
<div style="left:480px;top:153px;width:1px;height:23px;background:#ffffff;"></div>
<div style="left:481px;top:152px;width:1px;height:1px;background:#ffffff;"></div>
<div style="left:538px;top:152px;width:1px;height:24px;background:#808080;"></div>
<div style="left:539px;top:153px;width:1px;height:23px;background:#404040;"></div>
<div style="left:538px;top:152px;width:1px;height:1px;background:#404040;"></div>
<span class="t" style="left:486px;top:157px;font-size:16px;line-height:16px;color:#000;">Idles</span>
<div style="left:32px;top:149px;width:78px;height:28px;background:#d4d0c8;"></div>
<div style="left:34px;top:149px;width:73px;height:1px;background:#ffffff;"></div>
<div style="left:32px;top:151px;width:1px;height:26px;background:#ffffff;"></div>
<div style="left:33px;top:150px;width:1px;height:1px;background:#ffffff;"></div>
<div style="left:108px;top:150px;width:1px;height:27px;background:#808080;"></div>
<div style="left:109px;top:151px;width:1px;height:26px;background:#404040;"></div>
<div style="left:108px;top:150px;width:1px;height:1px;background:#404040;"></div>
<span class="t" style="left:41px;top:155px;font-size:16px;line-height:16px;color:#000;">Package</span>
<span class="t" style="left:56px;top:221px;font-size:16px;line-height:16px;color:#000;">Public Package Data</span>
<div style="left:574px;top:201px;width:34px;height:38px;background:#d4d0c8;"></div>
<div style="left:574px;top:201px;width:33px;height:1px;background:#ffffff;"></div>
<div style="left:574px;top:201px;width:1px;height:37px;background:#ffffff;"></div>
<div style="left:574px;top:238px;width:34px;height:1px;background:#404040;"></div>
<div style="left:607px;top:201px;width:1px;height:38px;background:#404040;"></div>
<div style="left:575px;top:202px;width:31px;height:1px;background:#d4d0c8;"></div>
<div style="left:575px;top:202px;width:1px;height:35px;background:#d4d0c8;"></div>
<div style="left:575px;top:237px;width:32px;height:1px;background:#808080;"></div>
<div style="left:606px;top:202px;width:1px;height:36px;background:#808080;"></div>
<span class="t" style="left:583px;top:214px;font-size:14px;line-height:14px;color:#ffffff;letter-spacing:0.7px;">&lt;&lt;</span>
<span class="t" style="left:582px;top:213px;font-size:14px;line-height:14px;color:#808080;letter-spacing:0.7px;">&lt;&lt;</span>
<div style="left:614px;top:201px;width:34px;height:38px;background:#d4d0c8;"></div>
<div style="left:614px;top:201px;width:33px;height:1px;background:#ffffff;"></div>
<div style="left:614px;top:201px;width:1px;height:37px;background:#ffffff;"></div>
<div style="left:614px;top:238px;width:34px;height:1px;background:#404040;"></div>
<div style="left:647px;top:201px;width:1px;height:38px;background:#404040;"></div>
<div style="left:615px;top:202px;width:31px;height:1px;background:#d4d0c8;"></div>
<div style="left:615px;top:202px;width:1px;height:35px;background:#d4d0c8;"></div>
<div style="left:615px;top:237px;width:32px;height:1px;background:#808080;"></div>
<div style="left:646px;top:202px;width:1px;height:36px;background:#808080;"></div>
<span class="t" style="left:623px;top:214px;font-size:14px;line-height:14px;color:#ffffff;letter-spacing:0.7px;">&gt;&gt;</span>
<span class="t" style="left:622px;top:213px;font-size:14px;line-height:14px;color:#808080;letter-spacing:0.7px;">&gt;&gt;</span>
<div style="left:50px;top:243px;width:596px;height:243px;background:#fff;"></div>
<div style="left:50px;top:243px;width:595px;height:1px;background:#808080;"></div>
<div style="left:50px;top:243px;width:1px;height:242px;background:#808080;"></div>
<div style="left:50px;top:485px;width:596px;height:1px;background:#ffffff;"></div>
<div style="left:645px;top:243px;width:1px;height:243px;background:#ffffff;"></div>
<div style="left:51px;top:244px;width:593px;height:1px;background:#404040;"></div>
<div style="left:51px;top:244px;width:1px;height:240px;background:#404040;"></div>
<div style="left:51px;top:484px;width:594px;height:1px;background:#d4d0c8;"></div>
<div style="left:644px;top:244px;width:1px;height:241px;background:#d4d0c8;"></div>
<div style="left:52px;top:245px;width:142px;height:23px;background:#d4d0c8;"></div>
<div style="left:52px;top:245px;width:142px;height:1px;background:#ffffff;"></div>
<div style="left:52px;top:245px;width:1px;height:23px;background:#ffffff;"></div>
<div style="left:193px;top:245px;width:1px;height:23px;background:#404040;"></div>
<div style="left:192px;top:246px;width:1px;height:21px;background:#808080;"></div>
<div style="left:52px;top:267px;width:142px;height:1px;background:#404040;"></div>
<div style="left:53px;top:266px;width:140px;height:1px;background:#808080;"></div>
<span class="t" style="left:59px;top:250px;font-size:16px;line-height:16px;color:#000;">Name</span>
<div style="left:194px;top:245px;width:113px;height:23px;background:#d4d0c8;"></div>
<div style="left:194px;top:245px;width:113px;height:1px;background:#ffffff;"></div>
<div style="left:194px;top:245px;width:1px;height:23px;background:#ffffff;"></div>
<div style="left:306px;top:245px;width:1px;height:23px;background:#404040;"></div>
<div style="left:305px;top:246px;width:1px;height:21px;background:#808080;"></div>
<div style="left:194px;top:267px;width:113px;height:1px;background:#404040;"></div>
<div style="left:195px;top:266px;width:111px;height:1px;background:#808080;"></div>
<span class="t" style="left:199px;top:250px;font-size:16px;line-height:16px;color:#000;">Type</span>
<div style="left:307px;top:245px;width:198px;height:23px;background:#d4d0c8;"></div>
<div style="left:307px;top:245px;width:198px;height:1px;background:#ffffff;"></div>
<div style="left:307px;top:245px;width:1px;height:23px;background:#ffffff;"></div>
<div style="left:504px;top:245px;width:1px;height:23px;background:#404040;"></div>
<div style="left:503px;top:246px;width:1px;height:21px;background:#808080;"></div>
<div style="left:307px;top:267px;width:198px;height:1px;background:#404040;"></div>
<div style="left:308px;top:266px;width:196px;height:1px;background:#808080;"></div>
<span class="t" style="left:312px;top:250px;font-size:16px;line-height:16px;color:#000;">Value</span>
<div style="left:505px;top:245px;width:113px;height:23px;background:#d4d0c8;"></div>
<div style="left:505px;top:245px;width:113px;height:1px;background:#ffffff;"></div>
<div style="left:505px;top:245px;width:1px;height:23px;background:#ffffff;"></div>
<div style="left:617px;top:245px;width:1px;height:23px;background:#404040;"></div>
<div style="left:616px;top:246px;width:1px;height:21px;background:#808080;"></div>
<div style="left:505px;top:267px;width:113px;height:1px;background:#404040;"></div>
<div style="left:506px;top:266px;width:111px;height:1px;background:#808080;"></div>
<span class="t" style="left:512px;top:250px;font-size:16px;line-height:16px;color:#000;">Public</span>
<div style="left:618px;top:245px;width:26px;height:23px;background:#d4d0c8;"></div>
<div style="left:618px;top:245px;width:26px;height:1px;background:#ffffff;"></div>
<div style="left:618px;top:245px;width:1px;height:23px;background:#ffffff;"></div>
<div style="left:643px;top:245px;width:1px;height:23px;background:#404040;"></div>
<div style="left:642px;top:246px;width:1px;height:21px;background:#808080;"></div>
<div style="left:618px;top:267px;width:26px;height:1px;background:#404040;"></div>
<div style="left:619px;top:266px;width:24px;height:1px;background:#808080;"></div>
<div style="left:52px;top:270px;width:566px;height:21px;background:#d4d0c8;"></div>
<div style="left:52px;top:270px;width:1px;height:21px;background:#ffffff;"></div>
<div style="left:52px;top:291px;width:592px;height:1px;background:#d4d0c8;"></div>
<div style="left:52px;top:312px;width:592px;height:1px;background:#d4d0c8;"></div>
<div style="left:52px;top:333px;width:592px;height:1px;background:#d4d0c8;"></div>
<div style="left:52px;top:354px;width:592px;height:1px;background:#d4d0c8;"></div>
<div style="left:52px;top:375px;width:592px;height:1px;background:#d4d0c8;"></div>
<div style="left:52px;top:396px;width:592px;height:1px;background:#d4d0c8;"></div>
<div style="left:52px;top:417px;width:592px;height:1px;background:#d4d0c8;"></div>
<div style="left:52px;top:438px;width:592px;height:1px;background:#d4d0c8;"></div>
<div style="left:52px;top:459px;width:592px;height:1px;background:#d4d0c8;"></div>
<div style="left:52px;top:480px;width:592px;height:1px;background:#d4d0c8;"></div>
<div style="left:194px;top:291px;width:1px;height:193px;background:#d4d0c8;"></div>
<div style="left:307px;top:291px;width:1px;height:193px;background:#d4d0c8;"></div>
<div style="left:505px;top:291px;width:1px;height:193px;background:#d4d0c8;"></div>
<div style="left:618px;top:291px;width:1px;height:193px;background:#d4d0c8;"></div>
<span class="t" style="left:56px;top:274px;font-size:16px;line-height:16px;color:#000;">target</span>
<span class="t" style="left:199px;top:274px;font-size:16px;line-height:16px;color:#000;">SingleRef</span>
<span class="t" style="left:312px;top:274px;font-size:16px;line-height:16px;color:#000;">'LBT_ShackleWallMarke...</span>
<span class="t" style="left:510px;top:274px;font-size:16px;line-height:16px;color:#000;">Y</span>
<span class="t" style="left:702px;top:191px;font-size:16px;line-height:16px;color:#000;">Package Template</span>
<div style="left:848px;top:186px;width:251px;height:28px;background:#fff;"></div>
<div style="left:848px;top:186px;width:250px;height:1px;background:#808080;"></div>
<div style="left:848px;top:186px;width:1px;height:27px;background:#808080;"></div>
<div style="left:848px;top:213px;width:251px;height:1px;background:#ffffff;"></div>
<div style="left:1098px;top:186px;width:1px;height:28px;background:#ffffff;"></div>
<div style="left:849px;top:187px;width:248px;height:1px;background:#404040;"></div>
<div style="left:849px;top:187px;width:1px;height:25px;background:#404040;"></div>
<div style="left:849px;top:212px;width:249px;height:1px;background:#d4d0c8;"></div>
<div style="left:1097px;top:187px;width:1px;height:26px;background:#d4d0c8;"></div>
<div style="left:1073px;top:188px;width:24px;height:24px;background:#d4d0c8;"></div>
<div style="left:1073px;top:188px;width:23px;height:1px;background:#d4d0c8;"></div>
<div style="left:1073px;top:188px;width:1px;height:23px;background:#d4d0c8;"></div>
<div style="left:1073px;top:211px;width:24px;height:1px;background:#404040;"></div>
<div style="left:1096px;top:188px;width:1px;height:24px;background:#404040;"></div>
<div style="left:1074px;top:189px;width:21px;height:1px;background:#ffffff;"></div>
<div style="left:1074px;top:189px;width:1px;height:21px;background:#ffffff;"></div>
<div style="left:1074px;top:210px;width:22px;height:1px;background:#808080;"></div>
<div style="left:1095px;top:189px;width:1px;height:22px;background:#808080;"></div>
<div style="left:1078.5px;top:198.0px;width:0;height:0;border-left:6.0px solid transparent;border-right:6.0px solid transparent;border-top:6px solid #000"></div>
<span class="t" style="left:851px;top:193px;font-size:16px;line-height:16px;color:#000;">SitTarget</span>
<div style="left:1116px;top:183px;width:38px;height:38px;background:#d4d0c8;"></div>
<div style="left:1116px;top:183px;width:37px;height:1px;background:#ffffff;"></div>
<div style="left:1116px;top:183px;width:1px;height:37px;background:#ffffff;"></div>
<div style="left:1116px;top:220px;width:38px;height:1px;background:#404040;"></div>
<div style="left:1153px;top:183px;width:1px;height:38px;background:#404040;"></div>
<div style="left:1117px;top:184px;width:35px;height:1px;background:#d4d0c8;"></div>
<div style="left:1117px;top:184px;width:1px;height:35px;background:#d4d0c8;"></div>
<div style="left:1117px;top:219px;width:36px;height:1px;background:#808080;"></div>
<div style="left:1152px;top:184px;width:1px;height:36px;background:#808080;"></div>
<span class="t" style="left:1121px;top:194px;font-size:16px;line-height:16px;color:#000;">Edit</span>
<div style="left:669px;top:247px;width:431px;height:1px;background:#ffffff;"></div>
<div style="left:669px;top:247px;width:1px;height:254px;background:#ffffff;"></div>
<div style="left:669px;top:500px;width:431px;height:1px;background:#ffffff;"></div>
<div style="left:1099px;top:247px;width:1px;height:254px;background:#ffffff;"></div>
<div style="left:668px;top:246px;width:431px;height:1px;background:#808080;"></div>
<div style="left:668px;top:246px;width:1px;height:254px;background:#808080;"></div>
<div style="left:668px;top:499px;width:431px;height:1px;background:#808080;"></div>
<div style="left:1098px;top:246px;width:1px;height:254px;background:#808080;"></div>
<div style="left:677px;top:244px;width:172px;height:5px;background:#d4d0c8;"></div>
<span class="t" style="left:678px;top:238px;font-size:16px;line-height:16px;color:#000;">Selected Package Data</span>
<span class="t" style="left:749px;top:286px;font-size:16px;line-height:16px;color:#000;">Name</span>
<div style="left:801px;top:277px;width:263px;height:30px;background:#d4d0c8;"></div>
<div style="left:801px;top:277px;width:262px;height:1px;background:#808080;"></div>
<div style="left:801px;top:277px;width:1px;height:29px;background:#808080;"></div>
<div style="left:801px;top:306px;width:263px;height:1px;background:#ffffff;"></div>
<div style="left:1063px;top:277px;width:1px;height:30px;background:#ffffff;"></div>
<div style="left:802px;top:278px;width:260px;height:1px;background:#404040;"></div>
<div style="left:802px;top:278px;width:1px;height:27px;background:#404040;"></div>
<div style="left:802px;top:305px;width:261px;height:1px;background:#d4d0c8;"></div>
<div style="left:1062px;top:278px;width:1px;height:28px;background:#d4d0c8;"></div>
<span class="t" style="left:804px;top:282px;font-size:16px;line-height:16px;color:#808080;">target</span>
<span class="t" style="left:757px;top:324px;font-size:16px;line-height:16px;color:#000;">Type</span>
<div style="left:801px;top:317px;width:265px;height:28px;background:#d4d0c8;"></div>
<div style="left:801px;top:317px;width:264px;height:1px;background:#808080;"></div>
<div style="left:801px;top:317px;width:1px;height:27px;background:#808080;"></div>
<div style="left:801px;top:344px;width:265px;height:1px;background:#ffffff;"></div>
<div style="left:1065px;top:317px;width:1px;height:28px;background:#ffffff;"></div>
<div style="left:802px;top:318px;width:262px;height:1px;background:#404040;"></div>
<div style="left:802px;top:318px;width:1px;height:25px;background:#404040;"></div>
<div style="left:802px;top:343px;width:263px;height:1px;background:#d4d0c8;"></div>
<div style="left:1064px;top:318px;width:1px;height:26px;background:#d4d0c8;"></div>
<div style="left:1040px;top:319px;width:24px;height:24px;background:#d4d0c8;"></div>
<div style="left:1040px;top:319px;width:23px;height:1px;background:#d4d0c8;"></div>
<div style="left:1040px;top:319px;width:1px;height:23px;background:#d4d0c8;"></div>
<div style="left:1040px;top:342px;width:24px;height:1px;background:#404040;"></div>
<div style="left:1063px;top:319px;width:1px;height:24px;background:#404040;"></div>
<div style="left:1041px;top:320px;width:21px;height:1px;background:#ffffff;"></div>
<div style="left:1041px;top:320px;width:1px;height:21px;background:#ffffff;"></div>
<div style="left:1041px;top:341px;width:22px;height:1px;background:#808080;"></div>
<div style="left:1062px;top:320px;width:1px;height:22px;background:#808080;"></div>
<div style="left:1045.5px;top:329.0px;width:0;height:0;border-left:6.0px solid transparent;border-right:6.0px solid transparent;border-top:6px solid #808080"></div>
<span class="t" style="left:804px;top:324px;font-size:16px;line-height:16px;color:#808080;">SingleRef</span>
<div style="left:731px;top:358px;width:347px;height:50px;background:#d4d0c8;"></div>
<div style="left:731px;top:358px;width:346px;height:1px;background:#ffffff;"></div>
<div style="left:731px;top:358px;width:1px;height:49px;background:#ffffff;"></div>
<div style="left:731px;top:407px;width:347px;height:1px;background:#404040;"></div>
<div style="left:1077px;top:358px;width:1px;height:50px;background:#404040;"></div>
<div style="left:732px;top:359px;width:344px;height:1px;background:#d4d0c8;"></div>
<div style="left:732px;top:359px;width:1px;height:47px;background:#d4d0c8;"></div>
<div style="left:732px;top:406px;width:345px;height:1px;background:#808080;"></div>
<div style="left:1076px;top:359px;width:1px;height:48px;background:#808080;"></div>
<span class="t" style="left:735px;top:375px;font-size:16px;line-height:16px;color:#000;">'LBT_ShackleWallMarker_Ref' in 'LBTH'</span>
<div style="left:1019px;top:411px;width:57px;height:26px;background:#d4d0c8;"></div>
<div style="left:1019px;top:411px;width:56px;height:1px;background:#ffffff;"></div>
<div style="left:1019px;top:411px;width:1px;height:25px;background:#ffffff;"></div>
<div style="left:1019px;top:436px;width:57px;height:1px;background:#404040;"></div>
<div style="left:1075px;top:411px;width:1px;height:26px;background:#404040;"></div>
<div style="left:1020px;top:412px;width:54px;height:1px;background:#d4d0c8;"></div>
<div style="left:1020px;top:412px;width:1px;height:23px;background:#d4d0c8;"></div>
<div style="left:1020px;top:435px;width:55px;height:1px;background:#808080;"></div>
<div style="left:1074px;top:412px;width:1px;height:24px;background:#808080;"></div>
<span class="t" style="left:1029px;top:416px;font-size:16px;line-height:16px;color:#000;">View</span>
<span class="t" style="left:54px;top:499px;font-size:16px;line-height:16px;color:#000;">Procedure Tree</span>
<div style="left:50px;top:523px;width:509px;height:305px;background:#d4d0c8;"></div>
<div style="left:50px;top:523px;width:508px;height:1px;background:#808080;"></div>
<div style="left:50px;top:523px;width:1px;height:304px;background:#808080;"></div>
<div style="left:50px;top:827px;width:509px;height:1px;background:#ffffff;"></div>
<div style="left:558px;top:523px;width:1px;height:305px;background:#ffffff;"></div>
<div style="left:51px;top:524px;width:506px;height:1px;background:#404040;"></div>
<div style="left:51px;top:524px;width:1px;height:302px;background:#404040;"></div>
<div style="left:51px;top:826px;width:507px;height:1px;background:#d4d0c8;"></div>
<div style="left:557px;top:524px;width:1px;height:303px;background:#d4d0c8;"></div>
<div style="left:58px;top:532px;width:11px;height:11px;border:1px solid #808080;box-sizing:border-box"></div>
<div style="left:60px;top:537px;width:7px;height:1px;background:#000;"></div>
<div style="left:70px;top:537px;width:6px;height:1px;background:repeating-linear-gradient(90deg,#808080 0 1px,transparent 1px 2px)"></div>
<span class="t" style="left:77px;top:529px;font-size:16px;line-height:16px;color:#808080;">Sequence</span>
<div style="left:87px;top:547px;width:1px;height:30px;background:repeating-linear-gradient(180deg,#808080 0 1px,transparent 1px 2px)"></div>
<div style="left:88px;top:559px;width:10px;height:1px;background:repeating-linear-gradient(90deg,#808080 0 1px,transparent 1px 2px)"></div>
<span class="t" style="left:100px;top:551px;font-size:16px;line-height:16px;color:#808080;">Procedure: Sit</span>
<div style="left:81px;top:576px;width:11px;height:11px;border:1px solid #808080;box-sizing:border-box"></div>
<div style="left:83px;top:581px;width:7px;height:1px;background:#000;"></div>
<div style="left:93px;top:581px;width:6px;height:1px;background:repeating-linear-gradient(90deg,#808080 0 1px,transparent 1px 2px)"></div>
<span class="t" style="left:99px;top:573px;font-size:16px;line-height:16px;color:#808080;">Simultaneous</span>
<div style="left:110px;top:591px;width:1px;height:34px;background:repeating-linear-gradient(180deg,#808080 0 1px,transparent 1px 2px)"></div>
<div style="left:111px;top:602px;width:10px;height:1px;background:repeating-linear-gradient(90deg,#808080 0 1px,transparent 1px 2px)"></div>
<div style="left:111px;top:624px;width:10px;height:1px;background:repeating-linear-gradient(90deg,#808080 0 1px,transparent 1px 2px)"></div>
<span class="t" style="left:123px;top:595px;font-size:16px;line-height:16px;color:#808080;">Procedure: Sit</span>
<span class="t" style="left:123px;top:617px;font-size:16px;line-height:16px;color:#808080;">Procedure: Wait</span>
<div style="left:596px;top:523px;width:508px;height:1px;background:#808080;"></div>
<div style="left:596px;top:523px;width:1px;height:307px;background:#808080;"></div>
<div style="left:597px;top:524px;width:506px;height:1px;background:#ffffff;"></div>
<div style="left:597px;top:524px;width:1px;height:305px;background:#ffffff;"></div>
<div style="left:596px;top:829px;width:508px;height:1px;background:#ffffff;"></div>
<div style="left:1103px;top:523px;width:1px;height:307px;background:#ffffff;"></div>
<div style="left:597px;top:828px;width:506px;height:1px;background:#808080;"></div>
<div style="left:1102px;top:524px;width:1px;height:305px;background:#808080;"></div>
<div style="left:53px;top:849px;width:1089px;height:1px;background:#ffffff;"></div>
<div style="left:53px;top:849px;width:1px;height:299px;background:#ffffff;"></div>
<div style="left:53px;top:1147px;width:1089px;height:1px;background:#ffffff;"></div>
<div style="left:1141px;top:849px;width:1px;height:299px;background:#ffffff;"></div>
<div style="left:52px;top:848px;width:1089px;height:1px;background:#808080;"></div>
<div style="left:52px;top:848px;width:1px;height:299px;background:#808080;"></div>
<div style="left:52px;top:1146px;width:1089px;height:1px;background:#808080;"></div>
<div style="left:1140px;top:848px;width:1px;height:299px;background:#808080;"></div>
<div style="left:62px;top:846px;width:114px;height:5px;background:#d4d0c8;"></div>
<span class="t" style="left:63px;top:841px;font-size:16px;line-height:16px;color:#000;">Item Conditions</span>
<div style="left:53px;top:858px;width:1041px;height:222px;background:#d4d0c8;"></div>
<div style="left:53px;top:858px;width:1040px;height:1px;background:#808080;"></div>
<div style="left:53px;top:858px;width:1px;height:221px;background:#808080;"></div>
<div style="left:53px;top:1079px;width:1041px;height:1px;background:#ffffff;"></div>
<div style="left:1093px;top:858px;width:1px;height:222px;background:#ffffff;"></div>
<div style="left:54px;top:859px;width:1038px;height:1px;background:#404040;"></div>
<div style="left:54px;top:859px;width:1px;height:219px;background:#404040;"></div>
<div style="left:54px;top:1078px;width:1039px;height:1px;background:#d4d0c8;"></div>
<div style="left:1092px;top:859px;width:1px;height:220px;background:#d4d0c8;"></div>
<div style="left:1201px;top:118px;width:423px;height:890px;background:#d4d0c8;"></div>
<div style="left:1201px;top:118px;width:422px;height:1px;background:#ffffff;"></div>
<div style="left:1201px;top:118px;width:1px;height:889px;background:#ffffff;"></div>
<div style="left:1623px;top:118px;width:1px;height:890px;background:#404040;"></div>
<div style="left:1201px;top:1006px;width:423px;height:1px;background:#404040;"></div>
<div style="left:1201px;top:1007px;width:423px;height:1px;background:#404040;"></div>
<div style="left:1203px;top:120px;width:420px;height:27px;background:linear-gradient(90deg,#0a246a,#a6caf0 92%);"></div>
<span class="t" style="left:1205px;top:126px;font-size:17px;line-height:17px;color:#fff;font-weight:bold;letter-spacing:0.45px;">Package Target</span>
<div style="left:1595px;top:122px;width:25px;height:23px;background:#d4d0c8;"></div>
<div style="left:1595px;top:122px;width:24px;height:1px;background:#ffffff;"></div>
<div style="left:1595px;top:122px;width:1px;height:22px;background:#ffffff;"></div>
<div style="left:1595px;top:144px;width:25px;height:1px;background:#404040;"></div>
<div style="left:1619px;top:122px;width:1px;height:23px;background:#404040;"></div>
<div style="left:1596px;top:123px;width:22px;height:1px;background:#d4d0c8;"></div>
<div style="left:1596px;top:123px;width:1px;height:20px;background:#d4d0c8;"></div>
<div style="left:1596px;top:143px;width:23px;height:1px;background:#808080;"></div>
<div style="left:1618px;top:123px;width:1px;height:21px;background:#808080;"></div>
<svg style="left:1601px;top:127px" width="14" height="13"><path d="M1 1L13 12M13 1L1 12" stroke="#000" stroke-width="2" fill="none"/></svg>
<span class="t" style="left:1281px;top:167px;font-size:16px;line-height:16px;color:#000;">Self</span>
<div style="left:1259px;top:165px;width:16px;height:16px;border-radius:50%;background:conic-gradient(from 225deg,#808080 0 180deg,#ffffff 180deg 360deg)"></div>
<div style="left:1260px;top:166px;width:14px;height:14px;border-radius:50%;background:conic-gradient(from 225deg,#404040 0 180deg,#d4d0c8 180deg 360deg)"></div>
<div style="left:1261px;top:167px;width:12px;height:12px;border-radius:50%;background:#fff"></div>
<div style="left:1242px;top:215px;width:337px;height:1px;background:#ffffff;"></div>
<div style="left:1242px;top:215px;width:1px;height:80px;background:#ffffff;"></div>
<div style="left:1242px;top:294px;width:337px;height:1px;background:#ffffff;"></div>
<div style="left:1578px;top:215px;width:1px;height:80px;background:#ffffff;"></div>
<div style="left:1241px;top:214px;width:337px;height:1px;background:#808080;"></div>
<div style="left:1241px;top:214px;width:1px;height:80px;background:#808080;"></div>
<div style="left:1241px;top:293px;width:337px;height:1px;background:#808080;"></div>
<div style="left:1577px;top:214px;width:1px;height:80px;background:#808080;"></div>
<div style="left:1257px;top:212px;width:160px;height:5px;background:#d4d0c8;"></div>
<div style="left:1259px;top:208px;width:16px;height:16px;border-radius:50%;background:conic-gradient(from 225deg,#808080 0 180deg,#ffffff 180deg 360deg)"></div>
<div style="left:1260px;top:209px;width:14px;height:14px;border-radius:50%;background:conic-gradient(from 225deg,#404040 0 180deg,#d4d0c8 180deg 360deg)"></div>
<div style="left:1261px;top:210px;width:12px;height:12px;border-radius:50%;background:#fff"></div>
<span class="t" style="left:1281px;top:210px;font-size:16px;line-height:16px;color:#000;letter-spacing:-0.27px;">Linked Reference</span>
<span class="t" style="left:1288px;top:253px;font-size:16px;line-height:16px;color:#000;">Keyword:</span>
<div style="left:1367px;top:243px;width:200px;height:28px;background:#d4d0c8;"></div>
<div style="left:1367px;top:243px;width:199px;height:1px;background:#808080;"></div>
<div style="left:1367px;top:243px;width:1px;height:27px;background:#808080;"></div>
<div style="left:1367px;top:270px;width:200px;height:1px;background:#ffffff;"></div>
<div style="left:1566px;top:243px;width:1px;height:28px;background:#ffffff;"></div>
<div style="left:1368px;top:244px;width:197px;height:1px;background:#404040;"></div>
<div style="left:1368px;top:244px;width:1px;height:25px;background:#404040;"></div>
<div style="left:1368px;top:269px;width:198px;height:1px;background:#d4d0c8;"></div>
<div style="left:1565px;top:244px;width:1px;height:26px;background:#d4d0c8;"></div>
<div style="left:1541px;top:245px;width:24px;height:24px;background:#d4d0c8;"></div>
<div style="left:1541px;top:245px;width:23px;height:1px;background:#d4d0c8;"></div>
<div style="left:1541px;top:245px;width:1px;height:23px;background:#d4d0c8;"></div>
<div style="left:1541px;top:268px;width:24px;height:1px;background:#404040;"></div>
<div style="left:1564px;top:245px;width:1px;height:24px;background:#404040;"></div>
<div style="left:1542px;top:246px;width:21px;height:1px;background:#ffffff;"></div>
<div style="left:1542px;top:246px;width:1px;height:21px;background:#ffffff;"></div>
<div style="left:1542px;top:267px;width:22px;height:1px;background:#808080;"></div>
<div style="left:1563px;top:246px;width:1px;height:22px;background:#808080;"></div>
<div style="left:1546.5px;top:255.0px;width:0;height:0;border-left:6.0px solid transparent;border-right:6.0px solid transparent;border-top:6px solid #808080"></div>
<div style="left:1242px;top:313px;width:337px;height:1px;background:#ffffff;"></div>
<div style="left:1242px;top:313px;width:1px;height:243px;background:#ffffff;"></div>
<div style="left:1242px;top:555px;width:337px;height:1px;background:#ffffff;"></div>
<div style="left:1578px;top:313px;width:1px;height:243px;background:#ffffff;"></div>
<div style="left:1241px;top:312px;width:337px;height:1px;background:#808080;"></div>
<div style="left:1241px;top:312px;width:1px;height:243px;background:#808080;"></div>
<div style="left:1241px;top:554px;width:337px;height:1px;background:#808080;"></div>
<div style="left:1577px;top:312px;width:1px;height:243px;background:#808080;"></div>
<div style="left:1256px;top:310px;width:168px;height:5px;background:#d4d0c8;"></div>
<div style="left:1257px;top:308px;width:16px;height:16px;border-radius:50%;background:conic-gradient(from 225deg,#808080 0 180deg,#ffffff 180deg 360deg)"></div>
<div style="left:1258px;top:309px;width:14px;height:14px;border-radius:50%;background:conic-gradient(from 225deg,#404040 0 180deg,#d4d0c8 180deg 360deg)"></div>
<div style="left:1259px;top:310px;width:12px;height:12px;border-radius:50%;background:#fff"></div>
<div style="left:1262.0px;top:313.0px;width:6px;height:6px;border-radius:50%;background:#000"></div>
<span class="t" style="left:1279px;top:310px;font-size:16px;line-height:16px;color:#000;letter-spacing:-0.4px;">Specific Reference</span>
<div style="left:1272px;top:343px;width:288px;height:34px;background:#d4d0c8;"></div>
<div style="left:1272px;top:343px;width:287px;height:1px;background:#ffffff;"></div>
<div style="left:1272px;top:343px;width:1px;height:33px;background:#ffffff;"></div>
<div style="left:1272px;top:376px;width:288px;height:1px;background:#404040;"></div>
<div style="left:1559px;top:343px;width:1px;height:34px;background:#404040;"></div>
<div style="left:1273px;top:344px;width:285px;height:1px;background:#d4d0c8;"></div>
<div style="left:1273px;top:344px;width:1px;height:31px;background:#d4d0c8;"></div>
<div style="left:1273px;top:375px;width:286px;height:1px;background:#808080;"></div>
<div style="left:1558px;top:344px;width:1px;height:32px;background:#808080;"></div>
<span class="t" style="left:1290px;top:352px;font-size:16px;line-height:16px;color:#000;letter-spacing:-0.22px;">Select Reference in Render Window</span>
<span class="t" style="left:1265px;top:410px;font-size:16px;line-height:16px;color:#000;">Filter</span>
<div style="left:1316px;top:402px;width:248px;height:30px;background:#fff;"></div>
<div style="left:1316px;top:402px;width:247px;height:1px;background:#808080;"></div>
<div style="left:1316px;top:402px;width:1px;height:29px;background:#808080;"></div>
<div style="left:1316px;top:431px;width:248px;height:1px;background:#ffffff;"></div>
<div style="left:1563px;top:402px;width:1px;height:30px;background:#ffffff;"></div>
<div style="left:1317px;top:403px;width:245px;height:1px;background:#404040;"></div>
<div style="left:1317px;top:403px;width:1px;height:27px;background:#404040;"></div>
<div style="left:1317px;top:430px;width:246px;height:1px;background:#d4d0c8;"></div>
<div style="left:1562px;top:403px;width:1px;height:28px;background:#d4d0c8;"></div>
<span class="t" style="left:1266px;top:455px;font-size:16px;line-height:16px;color:#000;">Cell</span>
<div style="left:1309px;top:447px;width:254px;height:28px;background:#fff;"></div>
<div style="left:1309px;top:447px;width:253px;height:1px;background:#808080;"></div>
<div style="left:1309px;top:447px;width:1px;height:27px;background:#808080;"></div>
<div style="left:1309px;top:474px;width:254px;height:1px;background:#ffffff;"></div>
<div style="left:1562px;top:447px;width:1px;height:28px;background:#ffffff;"></div>
<div style="left:1310px;top:448px;width:251px;height:1px;background:#404040;"></div>
<div style="left:1310px;top:448px;width:1px;height:25px;background:#404040;"></div>
<div style="left:1310px;top:473px;width:252px;height:1px;background:#d4d0c8;"></div>
<div style="left:1561px;top:448px;width:1px;height:26px;background:#d4d0c8;"></div>
<div style="left:1537px;top:449px;width:24px;height:24px;background:#d4d0c8;"></div>
<div style="left:1537px;top:449px;width:23px;height:1px;background:#d4d0c8;"></div>
<div style="left:1537px;top:449px;width:1px;height:23px;background:#d4d0c8;"></div>
<div style="left:1537px;top:472px;width:24px;height:1px;background:#404040;"></div>
<div style="left:1560px;top:449px;width:1px;height:24px;background:#404040;"></div>
<div style="left:1538px;top:450px;width:21px;height:1px;background:#ffffff;"></div>
<div style="left:1538px;top:450px;width:1px;height:21px;background:#ffffff;"></div>
<div style="left:1538px;top:471px;width:22px;height:1px;background:#808080;"></div>
<div style="left:1559px;top:450px;width:1px;height:22px;background:#808080;"></div>
<div style="left:1542.5px;top:459.0px;width:0;height:0;border-left:6.0px solid transparent;border-right:6.0px solid transparent;border-top:6px solid #000"></div>
<span class="t" style="left:1312px;top:455px;font-size:16px;line-height:16px;color:#000;">LBTH</span>
<span class="t" style="left:1271px;top:510px;font-size:16px;line-height:16px;color:#000;">Ref</span>
<div style="left:1309px;top:500px;width:256px;height:28px;background:#fff;"></div>
<div style="left:1309px;top:500px;width:255px;height:1px;background:#808080;"></div>
<div style="left:1309px;top:500px;width:1px;height:27px;background:#808080;"></div>
<div style="left:1309px;top:527px;width:256px;height:1px;background:#ffffff;"></div>
<div style="left:1564px;top:500px;width:1px;height:28px;background:#ffffff;"></div>
<div style="left:1310px;top:501px;width:253px;height:1px;background:#404040;"></div>
<div style="left:1310px;top:501px;width:1px;height:25px;background:#404040;"></div>
<div style="left:1310px;top:526px;width:254px;height:1px;background:#d4d0c8;"></div>
<div style="left:1563px;top:501px;width:1px;height:26px;background:#d4d0c8;"></div>
<div style="left:1539px;top:502px;width:24px;height:24px;background:#d4d0c8;"></div>
<div style="left:1539px;top:502px;width:23px;height:1px;background:#d4d0c8;"></div>
<div style="left:1539px;top:502px;width:1px;height:23px;background:#d4d0c8;"></div>
<div style="left:1539px;top:525px;width:24px;height:1px;background:#404040;"></div>
<div style="left:1562px;top:502px;width:1px;height:24px;background:#404040;"></div>
<div style="left:1540px;top:503px;width:21px;height:1px;background:#ffffff;"></div>
<div style="left:1540px;top:503px;width:1px;height:21px;background:#ffffff;"></div>
<div style="left:1540px;top:524px;width:22px;height:1px;background:#808080;"></div>
<div style="left:1561px;top:503px;width:1px;height:22px;background:#808080;"></div>
<div style="left:1544.5px;top:512.0px;width:0;height:0;border-left:6.0px solid transparent;border-right:6.0px solid transparent;border-top:6px solid #000"></div>
<div style="left:1311px;top:502px;width:229px;height:24px;overflow:hidden"><span class="t" style="left:2px;top:5px;font-size:16px;line-height:16px;letter-spacing:-0.35px">LBT_ShackleWallMarker_Ref (LB</span></div>
<div style="left:1245px;top:581px;width:338px;height:1px;background:#ffffff;"></div>
<div style="left:1245px;top:581px;width:1px;height:132px;background:#ffffff;"></div>
<div style="left:1245px;top:712px;width:338px;height:1px;background:#ffffff;"></div>
<div style="left:1582px;top:581px;width:1px;height:132px;background:#ffffff;"></div>
<div style="left:1244px;top:580px;width:338px;height:1px;background:#808080;"></div>
<div style="left:1244px;top:580px;width:1px;height:132px;background:#808080;"></div>
<div style="left:1244px;top:711px;width:338px;height:1px;background:#808080;"></div>
<div style="left:1581px;top:580px;width:1px;height:132px;background:#808080;"></div>
<div style="left:1261px;top:578px;width:114px;height:5px;background:#d4d0c8;"></div>
<div style="left:1264px;top:571px;width:16px;height:16px;border-radius:50%;background:conic-gradient(from 225deg,#808080 0 180deg,#ffffff 180deg 360deg)"></div>
<div style="left:1265px;top:572px;width:14px;height:14px;border-radius:50%;background:conic-gradient(from 225deg,#404040 0 180deg,#d4d0c8 180deg 360deg)"></div>
<div style="left:1266px;top:573px;width:12px;height:12px;border-radius:50%;background:#d4d0c8"></div>
<span class="t" style="left:1287px;top:574px;font-size:16px;line-height:16px;color:#ffffff;">Any Object</span>
<span class="t" style="left:1286px;top:573px;font-size:16px;line-height:16px;color:#808080;">Any Object</span>
<span class="t" style="left:1367px;top:602px;font-size:16px;line-height:16px;color:#000;">Filter</span>
<div style="left:1421px;top:592px;width:147px;height:30px;background:#fff;"></div>
<div style="left:1421px;top:592px;width:146px;height:1px;background:#808080;"></div>
<div style="left:1421px;top:592px;width:1px;height:29px;background:#808080;"></div>
<div style="left:1421px;top:621px;width:147px;height:1px;background:#ffffff;"></div>
<div style="left:1567px;top:592px;width:1px;height:30px;background:#ffffff;"></div>
<div style="left:1422px;top:593px;width:144px;height:1px;background:#404040;"></div>
<div style="left:1422px;top:593px;width:1px;height:27px;background:#404040;"></div>
<div style="left:1422px;top:620px;width:145px;height:1px;background:#d4d0c8;"></div>
<div style="left:1566px;top:593px;width:1px;height:28px;background:#d4d0c8;"></div>
<span class="t" style="left:1277px;top:640px;font-size:16px;line-height:16px;color:#000;">Object ID:</span>
<div style="left:1365px;top:628px;width:200px;height:28px;background:#d4d0c8;"></div>
<div style="left:1365px;top:628px;width:199px;height:1px;background:#808080;"></div>
<div style="left:1365px;top:628px;width:1px;height:27px;background:#808080;"></div>
<div style="left:1365px;top:655px;width:200px;height:1px;background:#ffffff;"></div>
<div style="left:1564px;top:628px;width:1px;height:28px;background:#ffffff;"></div>
<div style="left:1366px;top:629px;width:197px;height:1px;background:#404040;"></div>
<div style="left:1366px;top:629px;width:1px;height:25px;background:#404040;"></div>
<div style="left:1366px;top:654px;width:198px;height:1px;background:#d4d0c8;"></div>
<div style="left:1563px;top:629px;width:1px;height:26px;background:#d4d0c8;"></div>
<div style="left:1539px;top:630px;width:24px;height:24px;background:#d4d0c8;"></div>
<div style="left:1539px;top:630px;width:23px;height:1px;background:#d4d0c8;"></div>
<div style="left:1539px;top:630px;width:1px;height:23px;background:#d4d0c8;"></div>
<div style="left:1539px;top:653px;width:24px;height:1px;background:#404040;"></div>
<div style="left:1562px;top:630px;width:1px;height:24px;background:#404040;"></div>
<div style="left:1540px;top:631px;width:21px;height:1px;background:#ffffff;"></div>
<div style="left:1540px;top:631px;width:1px;height:21px;background:#ffffff;"></div>
<div style="left:1540px;top:652px;width:22px;height:1px;background:#808080;"></div>
<div style="left:1561px;top:631px;width:1px;height:22px;background:#808080;"></div>
<div style="left:1544.5px;top:640.0px;width:0;height:0;border-left:6.0px solid transparent;border-right:6.0px solid transparent;border-top:6px solid #808080"></div>
<span class="t" style="left:1373px;top:635px;font-size:16px;line-height:16px;color:#808080;">NONE</span>
<span class="t" style="left:1265px;top:681px;font-size:16px;line-height:16px;color:#000;">Object Type:</span>
<div style="left:1365px;top:671px;width:200px;height:28px;background:#d4d0c8;"></div>
<div style="left:1365px;top:671px;width:199px;height:1px;background:#808080;"></div>
<div style="left:1365px;top:671px;width:1px;height:27px;background:#808080;"></div>
<div style="left:1365px;top:698px;width:200px;height:1px;background:#ffffff;"></div>
<div style="left:1564px;top:671px;width:1px;height:28px;background:#ffffff;"></div>
<div style="left:1366px;top:672px;width:197px;height:1px;background:#404040;"></div>
<div style="left:1366px;top:672px;width:1px;height:25px;background:#404040;"></div>
<div style="left:1366px;top:697px;width:198px;height:1px;background:#d4d0c8;"></div>
<div style="left:1563px;top:672px;width:1px;height:26px;background:#d4d0c8;"></div>
<div style="left:1539px;top:673px;width:24px;height:24px;background:#d4d0c8;"></div>
<div style="left:1539px;top:673px;width:23px;height:1px;background:#d4d0c8;"></div>
<div style="left:1539px;top:673px;width:1px;height:23px;background:#d4d0c8;"></div>
<div style="left:1539px;top:696px;width:24px;height:1px;background:#404040;"></div>
<div style="left:1562px;top:673px;width:1px;height:24px;background:#404040;"></div>
<div style="left:1540px;top:674px;width:21px;height:1px;background:#ffffff;"></div>
<div style="left:1540px;top:674px;width:1px;height:21px;background:#ffffff;"></div>
<div style="left:1540px;top:695px;width:22px;height:1px;background:#808080;"></div>
<div style="left:1561px;top:674px;width:1px;height:22px;background:#808080;"></div>
<div style="left:1544.5px;top:683.0px;width:0;height:0;border-left:6.0px solid transparent;border-right:6.0px solid transparent;border-top:6px solid #808080"></div>
<span class="t" style="left:1374px;top:678px;font-size:16px;line-height:16px;color:#808080;">All: Combat Wearable</span>
<div style="left:1245px;top:734px;width:337px;height:1px;background:#ffffff;"></div>
<div style="left:1245px;top:734px;width:1px;height:79px;background:#ffffff;"></div>
<div style="left:1245px;top:812px;width:337px;height:1px;background:#ffffff;"></div>
<div style="left:1581px;top:734px;width:1px;height:79px;background:#ffffff;"></div>
<div style="left:1244px;top:733px;width:337px;height:1px;background:#808080;"></div>
<div style="left:1244px;top:733px;width:1px;height:79px;background:#808080;"></div>
<div style="left:1244px;top:811px;width:337px;height:1px;background:#808080;"></div>
<div style="left:1580px;top:733px;width:1px;height:79px;background:#808080;"></div>
<div style="left:1261px;top:731px;width:100px;height:5px;background:#d4d0c8;"></div>
<div style="left:1264px;top:726px;width:16px;height:16px;border-radius:50%;background:conic-gradient(from 225deg,#808080 0 180deg,#ffffff 180deg 360deg)"></div>
<div style="left:1265px;top:727px;width:14px;height:14px;border-radius:50%;background:conic-gradient(from 225deg,#404040 0 180deg,#d4d0c8 180deg 360deg)"></div>
<div style="left:1266px;top:728px;width:12px;height:12px;border-radius:50%;background:#d4d0c8"></div>
<span class="t" style="left:1287px;top:729px;font-size:16px;line-height:16px;color:#ffffff;">Ref Alias</span>
<span class="t" style="left:1286px;top:728px;font-size:16px;line-height:16px;color:#808080;">Ref Alias</span>
<span class="t" style="left:1277px;top:773px;font-size:16px;line-height:16px;color:#000;">Object ID:</span>
<div style="left:1365px;top:762px;width:200px;height:27px;background:#d4d0c8;"></div>
<div style="left:1365px;top:762px;width:199px;height:1px;background:#808080;"></div>
<div style="left:1365px;top:762px;width:1px;height:26px;background:#808080;"></div>
<div style="left:1365px;top:788px;width:200px;height:1px;background:#ffffff;"></div>
<div style="left:1564px;top:762px;width:1px;height:27px;background:#ffffff;"></div>
<div style="left:1366px;top:763px;width:197px;height:1px;background:#404040;"></div>
<div style="left:1366px;top:763px;width:1px;height:24px;background:#404040;"></div>
<div style="left:1366px;top:787px;width:198px;height:1px;background:#d4d0c8;"></div>
<div style="left:1563px;top:763px;width:1px;height:25px;background:#d4d0c8;"></div>
<div style="left:1539px;top:764px;width:24px;height:23px;background:#d4d0c8;"></div>
<div style="left:1539px;top:764px;width:23px;height:1px;background:#d4d0c8;"></div>
<div style="left:1539px;top:764px;width:1px;height:22px;background:#d4d0c8;"></div>
<div style="left:1539px;top:786px;width:24px;height:1px;background:#404040;"></div>
<div style="left:1562px;top:764px;width:1px;height:23px;background:#404040;"></div>
<div style="left:1540px;top:765px;width:21px;height:1px;background:#ffffff;"></div>
<div style="left:1540px;top:765px;width:1px;height:20px;background:#ffffff;"></div>
<div style="left:1540px;top:785px;width:22px;height:1px;background:#808080;"></div>
<div style="left:1561px;top:765px;width:1px;height:21px;background:#808080;"></div>
<div style="left:1544.5px;top:773.5px;width:0;height:0;border-left:6.0px solid transparent;border-right:6.0px solid transparent;border-top:6px solid #808080"></div>
<div style="left:1245px;top:848px;width:337px;height:1px;background:#ffffff;"></div>
<div style="left:1245px;top:848px;width:1px;height:79px;background:#ffffff;"></div>
<div style="left:1245px;top:926px;width:337px;height:1px;background:#ffffff;"></div>
<div style="left:1581px;top:848px;width:1px;height:79px;background:#ffffff;"></div>
<div style="left:1244px;top:847px;width:337px;height:1px;background:#808080;"></div>
<div style="left:1244px;top:847px;width:1px;height:79px;background:#808080;"></div>
<div style="left:1244px;top:925px;width:337px;height:1px;background:#808080;"></div>
<div style="left:1580px;top:847px;width:1px;height:79px;background:#808080;"></div>
<div style="left:1261px;top:845px;width:143px;height:5px;background:#d4d0c8;"></div>
<div style="left:1264px;top:840px;width:16px;height:16px;border-radius:50%;background:conic-gradient(from 225deg,#808080 0 180deg,#ffffff 180deg 360deg)"></div>
<div style="left:1265px;top:841px;width:14px;height:14px;border-radius:50%;background:conic-gradient(from 225deg,#404040 0 180deg,#d4d0c8 180deg 360deg)"></div>
<div style="left:1266px;top:842px;width:12px;height:12px;border-radius:50%;background:#d4d0c8"></div>
<span class="t" style="left:1288px;top:843px;font-size:16px;line-height:16px;color:#ffffff;">Interrupt Data</span>
<span class="t" style="left:1287px;top:842px;font-size:16px;line-height:16px;color:#808080;">Interrupt Data</span>
<span class="t" style="left:1277px;top:887px;font-size:16px;line-height:16px;color:#000;">Object ID:</span>
<div style="left:1367px;top:876px;width:200px;height:27px;background:#d4d0c8;"></div>
<div style="left:1367px;top:876px;width:199px;height:1px;background:#808080;"></div>
<div style="left:1367px;top:876px;width:1px;height:26px;background:#808080;"></div>
<div style="left:1367px;top:902px;width:200px;height:1px;background:#ffffff;"></div>
<div style="left:1566px;top:876px;width:1px;height:27px;background:#ffffff;"></div>
<div style="left:1368px;top:877px;width:197px;height:1px;background:#404040;"></div>
<div style="left:1368px;top:877px;width:1px;height:24px;background:#404040;"></div>
<div style="left:1368px;top:901px;width:198px;height:1px;background:#d4d0c8;"></div>
<div style="left:1565px;top:877px;width:1px;height:25px;background:#d4d0c8;"></div>
<div style="left:1541px;top:878px;width:24px;height:23px;background:#d4d0c8;"></div>
<div style="left:1541px;top:878px;width:23px;height:1px;background:#d4d0c8;"></div>
<div style="left:1541px;top:878px;width:1px;height:22px;background:#d4d0c8;"></div>
<div style="left:1541px;top:900px;width:24px;height:1px;background:#404040;"></div>
<div style="left:1564px;top:878px;width:1px;height:23px;background:#404040;"></div>
<div style="left:1542px;top:879px;width:21px;height:1px;background:#ffffff;"></div>
<div style="left:1542px;top:879px;width:1px;height:20px;background:#ffffff;"></div>
<div style="left:1542px;top:899px;width:22px;height:1px;background:#808080;"></div>
<div style="left:1563px;top:879px;width:1px;height:21px;background:#808080;"></div>
<div style="left:1546.5px;top:887.5px;width:0;height:0;border-left:6.0px solid transparent;border-right:6.0px solid transparent;border-top:6px solid #808080"></div>
<div style="left:1271px;top:953px;width:113px;height:33px;background:#000;"></div>
<div style="left:1272px;top:954px;width:111px;height:31px;background:#d4d0c8;"></div>
<div style="left:1272px;top:954px;width:110px;height:1px;background:#ffffff;"></div>
<div style="left:1272px;top:954px;width:1px;height:30px;background:#ffffff;"></div>
<div style="left:1272px;top:984px;width:111px;height:1px;background:#404040;"></div>
<div style="left:1382px;top:954px;width:1px;height:31px;background:#404040;"></div>
<div style="left:1273px;top:955px;width:108px;height:1px;background:#d4d0c8;"></div>
<div style="left:1273px;top:955px;width:1px;height:28px;background:#d4d0c8;"></div>
<div style="left:1273px;top:983px;width:109px;height:1px;background:#808080;"></div>
<div style="left:1381px;top:955px;width:1px;height:29px;background:#808080;"></div>
<span class="t" style="left:1317px;top:962px;font-size:16px;line-height:16px;color:#000;letter-spacing:-1px;">OK</span>
<div style="left:1433px;top:953px;width:113px;height:33px;background:#d4d0c8;"></div>
<div style="left:1433px;top:953px;width:112px;height:1px;background:#ffffff;"></div>
<div style="left:1433px;top:953px;width:1px;height:32px;background:#ffffff;"></div>
<div style="left:1433px;top:985px;width:113px;height:1px;background:#404040;"></div>
<div style="left:1545px;top:953px;width:1px;height:33px;background:#404040;"></div>
<div style="left:1434px;top:954px;width:110px;height:1px;background:#d4d0c8;"></div>
<div style="left:1434px;top:954px;width:1px;height:30px;background:#d4d0c8;"></div>
<div style="left:1434px;top:984px;width:111px;height:1px;background:#808080;"></div>
<div style="left:1544px;top:954px;width:1px;height:31px;background:#808080;"></div>
<span class="t" style="left:1466px;top:962px;font-size:16px;line-height:16px;color:#000;letter-spacing:-0.7px;">Cancel</span>
</body></html>
